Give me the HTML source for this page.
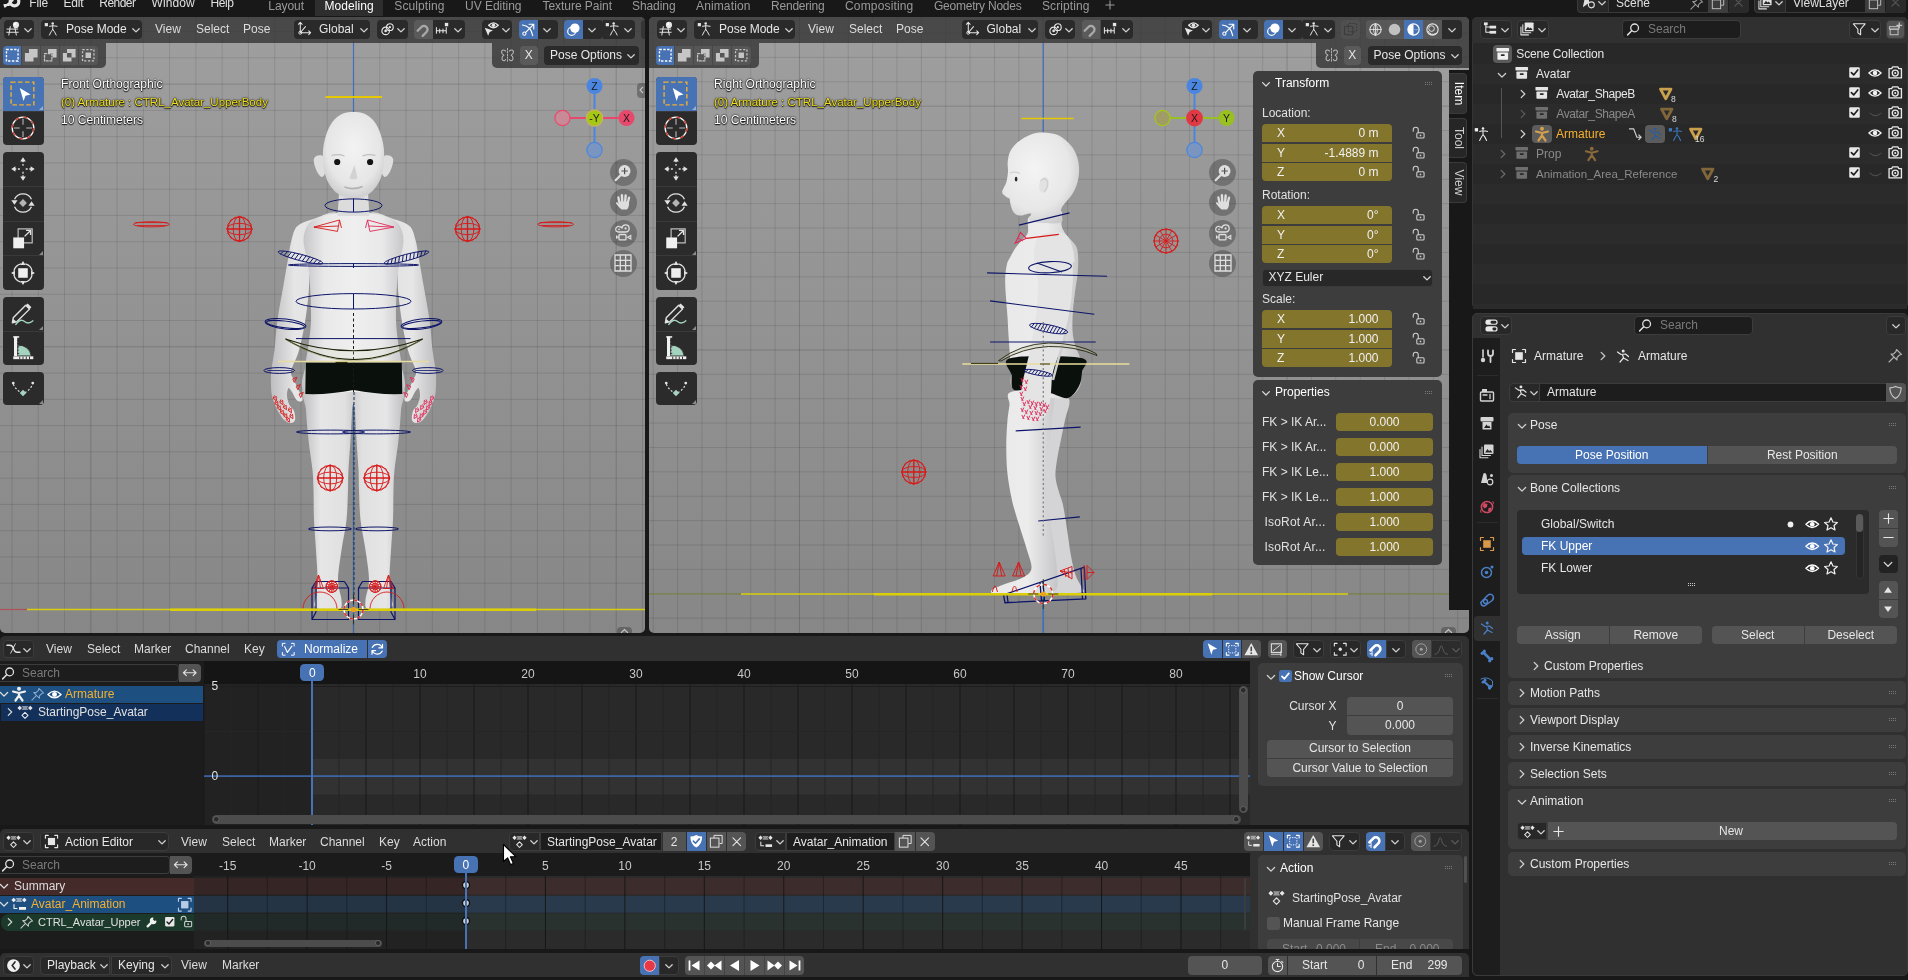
<!DOCTYPE html>
<html><head><meta charset="utf-8"><title>Blender</title>
<style>
html,body{margin:0;padding:0;background:#181818;}
body{width:1908px;height:980px;overflow:hidden;position:relative;font-family:'Liberation Sans',sans-serif;font-size:12px;color:#e6e6e6;}
#root{position:absolute;left:0;top:0;width:1908px;height:980px;overflow:hidden;background:#181818;filter:brightness(1);}
#root div,#root svg{position:absolute;box-sizing:border-box;}
#root svg{overflow:visible;}
#root svg text{font-family:'Liberation Sans',sans-serif;}
</style></head><body><div id="root">
<div style="left:0px;top:0px;width:1908px;height:16px;background:#181818;"></div>
<svg style="left:2px;top:-8px;" width="22" height="18" viewBox="0 0 22 18"><circle cx="12.5" cy="9.5" r="4.3" fill="none" stroke="#e6e6e6" stroke-width="3.2"/><path d="M3 14.5 L10.5 8.5 M2.5 13 H7" stroke="#e6e6e6" stroke-width="2.2" fill="none" stroke-linecap="round"/></svg>
<div style="left:29.3px;top:-5px;height:16px;line-height:16px;font-size:12px;color:#e0e0e0;white-space:nowrap;letter-spacing:-0.16px;">File</div>
<div style="left:63.4px;top:-5px;height:16px;line-height:16px;font-size:12px;color:#e0e0e0;white-space:nowrap;letter-spacing:-0.19px;">Edit</div>
<div style="left:99.3px;top:-5px;height:16px;line-height:16px;font-size:12px;color:#e0e0e0;white-space:nowrap;letter-spacing:-0.53px;">Render</div>
<div style="left:151.5px;top:-5px;height:16px;line-height:16px;font-size:12px;color:#e0e0e0;white-space:nowrap;letter-spacing:0.09px;">Window</div>
<div style="left:210.4px;top:-5px;height:16px;line-height:16px;font-size:12px;color:#e0e0e0;white-space:nowrap;letter-spacing:-0.4px;">Help</div>
<div style="left:315px;top:-4px;width:68px;height:20px;background:#2e2e2e;border-radius:4px 4px 0 0;"></div>
<div style="left:268.3px;top:-2.5px;height:16px;line-height:16px;font-size:12px;color:#9a9a9a;white-space:nowrap;letter-spacing:-0.06px;">Layout</div>
<div style="left:324.4px;top:-2.5px;height:16px;line-height:16px;font-size:12px;color:#ffffff;white-space:nowrap;letter-spacing:0.09px;">Modeling</div>
<div style="left:394.3px;top:-2.5px;height:16px;line-height:16px;font-size:12px;color:#9a9a9a;white-space:nowrap;letter-spacing:0.09px;">Sculpting</div>
<div style="left:465px;top:-2.5px;height:16px;line-height:16px;font-size:12px;color:#9a9a9a;white-space:nowrap;letter-spacing:-0.02px;">UV Editing</div>
<div style="left:542.5px;top:-2.5px;height:16px;line-height:16px;font-size:12px;color:#9a9a9a;white-space:nowrap;letter-spacing:-0.04px;">Texture Paint</div>
<div style="left:632px;top:-2.5px;height:16px;line-height:16px;font-size:12px;color:#9a9a9a;white-space:nowrap;letter-spacing:-0.08px;">Shading</div>
<div style="left:696px;top:-2.5px;height:16px;line-height:16px;font-size:12px;color:#9a9a9a;white-space:nowrap;letter-spacing:0.13px;">Animation</div>
<div style="left:771px;top:-2.5px;height:16px;line-height:16px;font-size:12px;color:#9a9a9a;white-space:nowrap;letter-spacing:-0.21px;">Rendering</div>
<div style="left:845px;top:-2.5px;height:16px;line-height:16px;font-size:12px;color:#9a9a9a;white-space:nowrap;letter-spacing:0.16px;">Compositing</div>
<div style="left:934px;top:-2.5px;height:16px;line-height:16px;font-size:12px;color:#9a9a9a;white-space:nowrap;letter-spacing:-0.23px;">Geometry Nodes</div>
<div style="left:1042px;top:-2.5px;height:16px;line-height:16px;font-size:12px;color:#9a9a9a;white-space:nowrap;letter-spacing:0.09px;">Scripting</div>
<svg style="left:1105px;top:0px;" width="10" height="10" viewBox="0 0 10 10"><path d="M5 0.5 V9.5 M0.5 5 H9.5" stroke="#9a9a9a" stroke-width="1.1" fill="none"/></svg>
<div style="left:1577px;top:-6px;width:172px;height:18.5px;background:#1d1d1d;border-radius:4px;border:1px solid #3a3a3a;"></div>
<div style="left:1577px;top:-6px;width:31.5px;height:18.5px;background:#282828;border-radius:4px 0 0 4px;border:1px solid #3a3a3a;"></div>
<svg style="left:1581px;top:-5px;" width="15" height="15" viewBox="0 0 16 16"><path d="M2 13 L4 3.5 Q6 1 8 4 L9 8 Z" fill="#e0e0e0" /><circle cx="11" cy="10.5" r="3.2" fill="none" stroke="#e0e0e0" stroke-width="1.2"/></svg>
<svg style="left:1597px;top:-2px;" width="10" height="10" viewBox="0 0 10 10"><path d="M1.8 3.7 L5 6.9 L8.2 3.7" fill="none" stroke="#d0d0d0" stroke-width="1.3" stroke-linecap="round" stroke-linejoin="round"/></svg>
<div style="left:1616px;top:-5.5px;height:16px;line-height:16px;font-size:12px;color:#e0e0e0;white-space:nowrap;">Scene</div>
<svg style="left:1689px;top:-4px;" width="15" height="15" viewBox="0 0 16 16"><path d="M9.5 1.5 L14.5 6.5 L12.5 7 L10 9.5 L10 12 L4 6 L6.5 6 L9 3.5 Z M7 9 L2 14" fill="none" stroke="#9a9a9a" stroke-width="1.1" stroke-linecap="round" stroke-linejoin="round" /></svg>
<div style="left:1708px;top:-6px;width:20px;height:18.5px;background:#3d3d3d;"></div>
<svg style="left:1711px;top:-4.5px;" width="14" height="14" viewBox="0 0 16 16"><path d="M5.5 4 V1.5 H14.5 V10.5 H12" fill="none" stroke="#c0c0c0" stroke-width="1.1" stroke-linecap="round" stroke-linejoin="round" /><rect x="1.5" y="4.5" width="9.5" height="10" rx="0" fill="none" stroke="#c0c0c0" stroke-width="1.1" /></svg>
<div style="left:1729px;top:-6px;width:20px;height:18.5px;background:#2a2a2a;border-radius:0 4px 4px 0;"></div>
<svg style="left:1732px;top:-4px;" width="13" height="13" viewBox="0 0 16 16"><path d="M3.5 3.5 L12.5 12.5 M12.5 3.5 L3.5 12.5" fill="none" stroke="#555555" stroke-width="1.4" stroke-linecap="round" stroke-linejoin="round" /></svg>
<div style="left:1754px;top:-6px;width:152px;height:18.5px;background:#1d1d1d;border-radius:4px;border:1px solid #3a3a3a;"></div>
<div style="left:1754px;top:-6px;width:31.5px;height:18.5px;background:#282828;border-radius:4px 0 0 4px;border:1px solid #3a3a3a;"></div>
<svg style="left:1758px;top:-5px;" width="15" height="15" viewBox="0 0 16 16"><rect x="5" y="1.5" width="9.5" height="9.5" rx="1" fill="#e0e0e0" /><path d="M3 4 V12.5 H11.5 M1 6.5 V14.8 H9" fill="none" stroke="#e0e0e0" stroke-width="1.1" stroke-linecap="round" stroke-linejoin="round" /><path d="M6 9.5 L8.5 6 L10 8 L11.5 7 L13.5 9.5 Z" fill="#282828" /></svg>
<svg style="left:1774px;top:-2px;" width="10" height="10" viewBox="0 0 10 10"><path d="M1.8 3.7 L5 6.9 L8.2 3.7" fill="none" stroke="#d0d0d0" stroke-width="1.3" stroke-linecap="round" stroke-linejoin="round"/></svg>
<div style="left:1793px;top:-5.5px;height:16px;line-height:16px;font-size:12px;color:#e0e0e0;white-space:nowrap;">ViewLayer</div>
<div style="left:1865px;top:-6px;width:20px;height:18.5px;background:#3d3d3d;"></div>
<svg style="left:1868px;top:-4.5px;" width="14" height="14" viewBox="0 0 16 16"><path d="M5.5 4 V1.5 H14.5 V10.5 H12" fill="none" stroke="#c0c0c0" stroke-width="1.1" stroke-linecap="round" stroke-linejoin="round" /><rect x="1.5" y="4.5" width="9.5" height="10" rx="0" fill="none" stroke="#c0c0c0" stroke-width="1.1" /></svg>
<div style="left:1886px;top:-6px;width:20px;height:18.5px;background:#2a2a2a;border-radius:0 4px 4px 0;"></div>
<svg style="left:1889px;top:-4px;" width="13" height="13" viewBox="0 0 16 16"><path d="M3.5 3.5 L12.5 12.5 M12.5 3.5 L3.5 12.5" fill="none" stroke="#555555" stroke-width="1.4" stroke-linecap="round" stroke-linejoin="round" /></svg>
<div style="left:0;top:16.6px;width:645px;height:616.4px;background:linear-gradient(#9f9f9f,#878787);border-radius:5px;overflow:hidden;">
</div>
<svg style="left:0px;top:17px;" width="645" height="616" viewBox="0 0 645 616"><rect x="11.49" y="0" width="1" height="616" fill="rgba(0,0,0,0.105)"/><rect x="37.76" y="0" width="1" height="616" fill="rgba(0,0,0,0.105)"/><rect x="64.03" y="0" width="1" height="616" fill="rgba(0,0,0,0.105)"/><rect x="90.3" y="0" width="1" height="616" fill="rgba(0,0,0,0.155)"/><rect x="116.57" y="0" width="1" height="616" fill="rgba(0,0,0,0.105)"/><rect x="142.84" y="0" width="1" height="616" fill="rgba(0,0,0,0.105)"/><rect x="169.11" y="0" width="1" height="616" fill="rgba(0,0,0,0.105)"/><rect x="195.38" y="0" width="1" height="616" fill="rgba(0,0,0,0.105)"/><rect x="221.65" y="0" width="1" height="616" fill="rgba(0,0,0,0.105)"/><rect x="247.92" y="0" width="1" height="616" fill="rgba(0,0,0,0.105)"/><rect x="274.19" y="0" width="1" height="616" fill="rgba(0,0,0,0.105)"/><rect x="300.46" y="0" width="1" height="616" fill="rgba(0,0,0,0.105)"/><rect x="326.73" y="0" width="1" height="616" fill="rgba(0,0,0,0.105)"/><rect x="353" y="0" width="1" height="616" fill="rgba(0,0,0,0.155)"/><rect x="379.27" y="0" width="1" height="616" fill="rgba(0,0,0,0.105)"/><rect x="405.54" y="0" width="1" height="616" fill="rgba(0,0,0,0.105)"/><rect x="431.81" y="0" width="1" height="616" fill="rgba(0,0,0,0.105)"/><rect x="458.08" y="0" width="1" height="616" fill="rgba(0,0,0,0.105)"/><rect x="484.35" y="0" width="1" height="616" fill="rgba(0,0,0,0.105)"/><rect x="510.62" y="0" width="1" height="616" fill="rgba(0,0,0,0.105)"/><rect x="536.89" y="0" width="1" height="616" fill="rgba(0,0,0,0.105)"/><rect x="563.16" y="0" width="1" height="616" fill="rgba(0,0,0,0.105)"/><rect x="589.43" y="0" width="1" height="616" fill="rgba(0,0,0,0.105)"/><rect x="615.7" y="0" width="1" height="616" fill="rgba(0,0,0,0.155)"/><rect x="641.97" y="0" width="1" height="616" fill="rgba(0,0,0,0.105)"/><rect x="0" y="14.06" width="645" height="1" fill="rgba(0,0,0,0.105)"/><rect x="0" y="40.33" width="645" height="1" fill="rgba(0,0,0,0.105)"/><rect x="0" y="66.6" width="645" height="1" fill="rgba(0,0,0,0.155)"/><rect x="0" y="92.87" width="645" height="1" fill="rgba(0,0,0,0.105)"/><rect x="0" y="119.14" width="645" height="1" fill="rgba(0,0,0,0.105)"/><rect x="0" y="145.41" width="645" height="1" fill="rgba(0,0,0,0.105)"/><rect x="0" y="171.68" width="645" height="1" fill="rgba(0,0,0,0.105)"/><rect x="0" y="197.95" width="645" height="1" fill="rgba(0,0,0,0.105)"/><rect x="0" y="224.22" width="645" height="1" fill="rgba(0,0,0,0.105)"/><rect x="0" y="250.49" width="645" height="1" fill="rgba(0,0,0,0.105)"/><rect x="0" y="276.76" width="645" height="1" fill="rgba(0,0,0,0.105)"/><rect x="0" y="303.03" width="645" height="1" fill="rgba(0,0,0,0.105)"/><rect x="0" y="329.3" width="645" height="1" fill="rgba(0,0,0,0.155)"/><rect x="0" y="355.57" width="645" height="1" fill="rgba(0,0,0,0.105)"/><rect x="0" y="381.84" width="645" height="1" fill="rgba(0,0,0,0.105)"/><rect x="0" y="408.11" width="645" height="1" fill="rgba(0,0,0,0.105)"/><rect x="0" y="434.38" width="645" height="1" fill="rgba(0,0,0,0.105)"/><rect x="0" y="460.65" width="645" height="1" fill="rgba(0,0,0,0.105)"/><rect x="0" y="486.92" width="645" height="1" fill="rgba(0,0,0,0.105)"/><rect x="0" y="513.19" width="645" height="1" fill="rgba(0,0,0,0.105)"/><rect x="0" y="539.46" width="645" height="1" fill="rgba(0,0,0,0.105)"/><rect x="0" y="565.73" width="645" height="1" fill="rgba(0,0,0,0.105)"/><rect x="0" y="592" width="645" height="1" fill="rgba(0,0,0,0.155)"/></svg>
<svg style="left:0px;top:0px;overflow:hidden;" width="645" height="633" viewBox="0 0 645 633"><defs><linearGradient id="gbody" x1="0" x2="1" y1="0" y2="0"><stop offset="0" stop-color="#c4c4c6"/><stop offset="0.22" stop-color="#e9e9ea"/><stop offset="0.5" stop-color="#efefef"/><stop offset="0.78" stop-color="#e9e9ea"/><stop offset="1" stop-color="#c4c4c6"/></linearGradient><linearGradient id="glimbL" x1="0" x2="1" y1="0" y2="0"><stop offset="0" stop-color="#bebec0"/><stop offset="0.35" stop-color="#e6e6e7"/><stop offset="0.8" stop-color="#e0e0e1"/><stop offset="1" stop-color="#c8c8ca"/></linearGradient><linearGradient id="glimbR" x1="1" x2="0" y1="0" y2="0"><stop offset="0" stop-color="#bebec0"/><stop offset="0.35" stop-color="#e6e6e7"/><stop offset="0.8" stop-color="#e0e0e1"/><stop offset="1" stop-color="#c8c8ca"/></linearGradient><radialGradient id="ghead" cx="0.5" cy="0.42" r="0.62"><stop offset="0" stop-color="#f3f3f3"/><stop offset="0.7" stop-color="#e6e6e7"/><stop offset="1" stop-color="#c9c9cb"/></radialGradient></defs><path d="M353.5 43 V112" stroke="#3c70c0" stroke-width="1.2"/><path d="M353.5 392 V633" stroke="#3c64a0" stroke-width="1.3"/><path d="M369.5 214 C372.83 208.83 386.83 217 393.5 219 C400.17 221 405.83 222.5 409.5 226 C413.17 229.5 413.83 234 415.5 240 C417.17 246 418.17 254.5 419.5 262 C420.83 269.5 421.83 275.33 423.5 285 C425.17 294.67 428 309.17 429.5 320 C431 330.83 431.45 341.5 432.5 350 C433.55 358.5 435.22 365.17 435.8 371 C436.38 376.83 436.1 381 436 385 C435.9 389 435.87 391.72 435.2 395 C434.53 398.28 433.2 401.7 432 404.7 C430.8 407.7 429.67 410.32 428 413 C426.33 415.68 424 419.13 422 420.8 C420 422.47 417.67 423.13 416 423 C414.33 422.87 412.5 422 412 420 C411.5 418 412.08 413.5 413 411 C413.92 408.5 416.33 407.5 417.5 405 C418.67 402.5 419.83 398.83 420 396 C420.17 393.17 419.33 388.67 418.5 388 C417.67 387.33 416.33 390 415 392 C413.67 394 412 398.42 410.5 400 C409 401.58 407 401.83 406 401.5 C405 401.17 404.08 399.92 404.5 398 C404.92 396.08 407.08 393 408.5 390 C409.92 387 411.75 383.17 413 380 C414.25 376.83 416.75 375.67 416 371 C415.25 366.33 410.75 359.67 408.5 352 C406.25 344.33 404.17 334.5 402.5 325 C400.83 315.5 399.42 304.5 398.5 295 C397.58 285.5 397.83 273.5 397 268 C396.17 262.5 397.42 265 393.5 262 C389.58 259 377.5 258 373.5 250 C369.5 242 366.17 219.17 369.5 214 Z" fill="url(#glimbR)"/><path d="M337.5 214 C334.17 208.83 320.17 217 313.5 219 C306.83 221 301.17 222.5 297.5 226 C293.83 229.5 293.17 234 291.5 240 C289.83 246 288.83 254.5 287.5 262 C286.17 269.5 285.17 275.33 283.5 285 C281.83 294.67 279 309.17 277.5 320 C276 330.83 275.55 341.5 274.5 350 C273.45 358.5 271.78 365.17 271.2 371 C270.62 376.83 270.9 381 271 385 C271.1 389 271.13 391.72 271.8 395 C272.47 398.28 273.8 401.7 275 404.7 C276.2 407.7 277.33 410.32 279 413 C280.67 415.68 283 419.13 285 420.8 C287 422.47 289.33 423.13 291 423 C292.67 422.87 294.5 422 295 420 C295.5 418 294.92 413.5 294 411 C293.08 408.5 290.67 407.5 289.5 405 C288.33 402.5 287.17 398.83 287 396 C286.83 393.17 287.67 388.67 288.5 388 C289.33 387.33 290.67 390 292 392 C293.33 394 295 398.42 296.5 400 C298 401.58 300 401.83 301 401.5 C302 401.17 302.92 399.92 302.5 398 C302.08 396.08 299.92 393 298.5 390 C297.08 387 295.25 383.17 294 380 C292.75 376.83 290.25 375.67 291 371 C291.75 366.33 296.25 359.67 298.5 352 C300.75 344.33 302.83 334.5 304.5 325 C306.17 315.5 307.58 304.5 308.5 295 C309.42 285.5 309.17 273.5 310 268 C310.83 262.5 309.58 265 313.5 262 C317.42 259 329.5 258 333.5 250 C337.5 242 340.83 219.17 337.5 214 Z" fill="url(#glimbL)"/><path d="M354.5 388 C362.25 384 393.75 382.33 401.5 386 C409.25 389.67 401.5 401 401 410 C400.5 419 399.58 430 398.5 440 C397.42 450 395.33 461.67 394.5 470 C393.67 478.33 393.75 481.67 393.5 490 C393.25 498.33 393.42 510 393 520 C392.58 530 391.58 540.33 391 550 C390.42 559.67 389.58 570.5 389.5 578 C389.42 585.5 390 590.33 390.5 595 C391 599.67 393.67 603.5 392.5 606 C391.33 608.5 387.67 609.5 383.5 610 C379.33 610.5 370.5 610.67 367.5 609 C364.5 607.33 365.25 604.83 365.5 600 C365.75 595.17 369 588.33 369 580 C369 571.67 366.92 560 365.5 550 C364.08 540 361.58 530 360.5 520 C359.42 510 359.33 498.33 359 490 C358.67 481.67 358.92 478.33 358.5 470 C358.08 461.67 357.08 450 356.5 440 C355.92 430 355.33 418.67 355 410 C354.67 401.33 346.75 392 354.5 388 Z" fill="url(#glimbR)"/><path d="M352.5 388 C344.75 384 313.25 382.33 305.5 386 C297.75 389.67 305.5 401 306 410 C306.5 419 307.42 430 308.5 440 C309.58 450 311.67 461.67 312.5 470 C313.33 478.33 313.25 481.67 313.5 490 C313.75 498.33 313.58 510 314 520 C314.42 530 315.42 540.33 316 550 C316.58 559.67 317.42 570.5 317.5 578 C317.58 585.5 317 590.33 316.5 595 C316 599.67 313.33 603.5 314.5 606 C315.67 608.5 319.33 609.5 323.5 610 C327.67 610.5 336.5 610.67 339.5 609 C342.5 607.33 341.75 604.83 341.5 600 C341.25 595.17 338 588.33 338 580 C338 571.67 340.08 560 341.5 550 C342.92 540 345.42 530 346.5 520 C347.58 510 347.67 498.33 348 490 C348.33 481.67 348.08 478.33 348.5 470 C348.92 461.67 349.92 450 350.5 440 C351.08 430 351.67 418.67 352 410 C352.33 401.33 360.25 392 352.5 388 Z" fill="url(#glimbL)"/><path d="M353.5 212 C358.83 212 364.17 212.17 369.5 213 C374.83 213.83 380.67 215.17 385.5 217 C390.33 218.83 395.5 220.17 398.5 224 C401.5 227.83 403.33 233.67 403.5 240 C403.67 246.33 400.58 254.5 399.5 262 C398.42 269.5 397.58 275.33 397 285 C396.42 294.67 395.75 310 396 320 C396.25 330 397.58 337.5 398.5 345 C399.42 352.5 401 357.17 401.5 365 C402 372.83 409.5 387.5 401.5 392 C393.5 396.5 369.5 392 353.5 392 C337.5 392 313.5 396.5 305.5 392 C297.5 387.5 305 372.83 305.5 365 C306 357.17 307.58 352.5 308.5 345 C309.42 337.5 310.75 330 311 320 C311.25 310 310.58 294.67 310 285 C309.42 275.33 308.58 269.5 307.5 262 C306.42 254.5 303.33 246.33 303.5 240 C303.67 233.67 305.5 227.83 308.5 224 C311.5 220.17 316.67 218.83 321.5 217 C326.33 215.17 332.17 213.83 337.5 213 C342.83 212.17 348.17 212 353.5 212 Z" fill="url(#gbody)"/><path d="M339.5 186 L367.5 186 L369.5 216 L337.5 216 Z" fill="#dcdcdd"/><path d="M383.5 157 C384.75 154.42 387.42 155.25 389 155.5 C390.58 155.75 392.42 156.92 393 158.5 C393.58 160.08 393.08 162.67 392.5 165 C391.92 167.33 390.75 170.5 389.5 172.5 C388.25 174.5 386.33 177.25 385 177 C383.67 176.75 381.75 174.33 381.5 171 C381.25 167.67 382.25 159.58 383.5 157 Z" fill="#dededf"/><path d="M323.5 157 C322.25 154.42 319.58 155.25 318 155.5 C316.42 155.75 314.58 156.92 314 158.5 C313.42 160.08 313.92 162.67 314.5 165 C315.08 167.33 316.25 170.5 317.5 172.5 C318.75 174.5 320.67 177.25 322 177 C323.33 176.75 325.25 174.33 325.5 171 C325.75 167.67 324.75 159.58 323.5 157 Z" fill="#dededf"/><path d="M353.5 112 C357 112 360.75 112.17 364 113.5 C367.25 114.83 370.42 117.08 373 120 C375.58 122.92 377.75 126.67 379.5 131 C381.25 135.33 382.75 141.17 383.5 146 C384.25 150.83 384.17 155.67 384 160 C383.83 164.33 383.42 168.17 382.5 172 C381.58 175.83 380.33 179.67 378.5 183 C376.67 186.33 374.17 189.67 371.5 192 C368.83 194.33 365.5 196 362.5 197 C359.5 198 356.5 198 353.5 198 C350.5 198 347.5 198 344.5 197 C341.5 196 338.17 194.33 335.5 192 C332.83 189.67 330.33 186.33 328.5 183 C326.67 179.67 325.42 175.83 324.5 172 C323.58 168.17 323.17 164.33 323 160 C322.83 155.67 322.75 150.83 323.5 146 C324.25 141.17 325.75 135.33 327.5 131 C329.25 126.67 331.42 122.92 334 120 C336.58 117.08 339.75 114.83 343 113.5 C346.25 112.17 350 112 353.5 112 Z" fill="url(#ghead)"/><circle cx="337.2" cy="162" r="3.1" fill="#141414"/><circle cx="370.1" cy="162" r="3.1" fill="#141414"/><path d="M331.5 155.5 Q338.5 153.5 344.5 156 M362.5 156 Q368.5 153.5 375.5 155.5" stroke="#c0c0c2" stroke-width="1.3" fill="none"/><path d="M354.5 165 L349.5 178 Q353.5 181 357.5 178 Z" fill="#d2d2d4"/><path d="M344.5 187 Q353.5 190.5 362.5 186.5" stroke="#b4b0b0" stroke-width="1.6" fill="none"/><path d="M305.8 362.5 H401.8 L402.3 394 Q378.5 395 353.5 390 Q328.5 395 305.3 394 Z" fill="#0a100c"/><path d="M325.5 97 H382" stroke="#e6c800" stroke-width="1.8"/><g fill="none" stroke="#0c1468" stroke-width="1"><ellipse cx="353.5" cy="205.5" rx="28.5" ry="6.6"/><path d="M353.5 198.5 V212"/><ellipse cx="353.5" cy="265" rx="65" ry="1.4"/><path d="M353.5 263 V268"/><ellipse cx="353.5" cy="301.3" rx="57.5" ry="7.7"/><path d="M353.5 293.5 V309"/><path d="M296 338.6 H410.5"/><ellipse cx="421.5" cy="324" rx="20.5" ry="5" transform="rotate(-7 421.5 324)"/><ellipse cx="421.5" cy="324.5" rx="19" ry="3.4" transform="rotate(-7 421.5 324)"/><ellipse cx="427.8" cy="370.5" rx="15.4" ry="2.9"/><path d="M415.5 370.5 H439.5" stroke-width="0.8"/><ellipse cx="376.5" cy="432" rx="34" ry="1.9"/><ellipse cx="377" cy="528.9" rx="21.4" ry="1.9"/><path d="M358.5 588 H395 V619.5 H358.5 Z M362.5 581.5 H391 V612 M358.5 588 L362.5 581.5 M395 588 L391 581.5 M395 619.5 L391 612" stroke-width="1.2"/><ellipse cx="285.5" cy="324" rx="20.5" ry="5" transform="rotate(7 285.5 324)"/><ellipse cx="285.5" cy="324.5" rx="19" ry="3.4" transform="rotate(7 285.5 324)"/><ellipse cx="279.2" cy="370.5" rx="15.4" ry="2.9"/><path d="M291.5 370.5 H267.5" stroke-width="0.8"/><ellipse cx="330.5" cy="432" rx="34" ry="1.9"/><ellipse cx="330" cy="528.9" rx="21.4" ry="1.9"/><path d="M348.5 588 H312 V619.5 H348.5 Z M344.5 581.5 H316 V612 M348.5 588 L344.5 581.5 M312 588 L316 581.5 M312 619.5 L316 612" stroke-width="1.2"/></g><g transform="rotate(-14.5 406.5 257.5)" fill="none" stroke="#0c1468" stroke-width="0.9"><ellipse cx="406.5" cy="257.5" rx="23" ry="3.2"/><path d="M386.13 259.27 L388.53 255.73"/><path d="M389.97 259.89 L392.37 255.11"/><path d="M393.8 260.27 L396.2 254.73"/><path d="M397.63 260.52 L400.03 254.48"/><path d="M401.47 260.66 L403.87 254.34"/><path d="M405.3 260.7 L407.7 254.3"/><path d="M409.13 260.66 L411.53 254.34"/><path d="M412.97 260.52 L415.37 254.48"/><path d="M416.8 260.27 L419.2 254.73"/><path d="M420.63 259.89 L423.03 255.11"/><path d="M424.47 259.27 L426.87 255.73"/></g><g transform="rotate(14.5 300.5 257.5)" fill="none" stroke="#0c1468" stroke-width="0.9"><ellipse cx="300.5" cy="257.5" rx="23" ry="3.2"/><path d="M280.13 259.27 L282.53 255.73"/><path d="M283.97 259.89 L286.37 255.11"/><path d="M287.8 260.27 L290.2 254.73"/><path d="M291.63 260.52 L294.03 254.48"/><path d="M295.47 260.66 L297.87 254.34"/><path d="M299.3 260.7 L301.7 254.3"/><path d="M303.13 260.66 L305.53 254.34"/><path d="M306.97 260.52 L309.37 254.48"/><path d="M310.8 260.27 L313.2 254.73"/><path d="M314.63 259.89 L317.03 255.11"/><path d="M318.47 259.27 L320.87 255.73"/></g><path d="M353.5 313 V392" stroke="#1a1a1a" stroke-width="1" stroke-dasharray="3 2.5"/><path d="M354 392 V600" stroke="#22304a" stroke-width="1" stroke-dasharray="3 2"/><path d="M285.5 339 Q353.5 380 422.7 339 Q353.5 362.5 285.5 339 Z" fill="#d8d8b8" fill-opacity="0.18" stroke="#1c2208" stroke-width="1.1"/><path d="M287.5 340.5 Q353.5 381 420.5 340.5" fill="none" stroke="#8a8a50" stroke-width="0.6"/><path d="M278 361.5 H429" stroke="#e8dc9c" stroke-width="1.4"/><path d="M335.5 362.5 H347.5" stroke="#30300c" stroke-width="1.2"/><g fill="none" stroke="#d81818" stroke-width="0.9"><polygon points="313.9,227.1 339.5,220 337.5,231.4"/><path d="M313.9,227.1 L338.5 226 M339.5 220 L341.5 228"/></g><g fill="none" stroke="#e02858" stroke-width="0.9"><polygon points="393.9,227.1 367.5,220 369.9,231.4"/><path d="M393.9,227.1 L368.5 226 M367.5 220 L365.5 228"/></g><g fill="none" stroke="#d81818" stroke-width="0.9"><ellipse cx="555.7" cy="224.3" rx="18" ry="2.6"/><path d="M539.7 222.6 H571.7 M541.7 225.6 H569.7"/><path d="M370 609 A17 17 0 0 1 404 609"/><path d="M383.5 588.5 L388.5 575 L393.5 588.5 Z M386.5 588.5 L388.5 575 M390.5 588.5 L388.5 575" stroke-width="0.9"/><ellipse cx="151.3" cy="224.3" rx="18" ry="2.6"/><path d="M135.3 222.6 H167.3 M137.3 225.6 H165.3"/><path d="M303 609 A17 17 0 0 1 337 609"/><path d="M323.5 588.5 L318.5 575 L313.5 588.5 Z M320.5 588.5 L318.5 575 M316.5 588.5 L318.5 575" stroke-width="0.9"/></g><g fill="none" stroke="#d81818" stroke-width="0.9"><polygon points="480.1,229 476.41,237.91 467.5,241.6 458.59,237.91 454.9,229 458.59,220.09 467.5,216.4 476.41,220.09"/><polygon points="479.14,233.82 472.32,240.64 462.68,240.64 455.86,233.82 455.86,224.18 462.68,217.36 472.32,217.36 479.14,224.18"/><path d="M454.9 229 H480.1 M467.5 216.4 V241.6" stroke-width="1.3"/><ellipse cx="467.5" cy="229" rx="6.3" ry="12.6"/><ellipse cx="467.5" cy="229" rx="12.6" ry="5.67"/></g><g fill="none" stroke="#d81818" stroke-width="0.9"><polygon points="389.8,478 385.99,487.19 376.8,491 367.61,487.19 363.8,478 367.61,468.81 376.8,465 385.99,468.81"/><polygon points="388.81,482.97 381.77,490.01 371.83,490.01 364.79,482.97 364.79,473.03 371.83,465.99 381.77,465.99 388.81,473.03"/><path d="M363.8 478 H389.8 M376.8 465 V491" stroke-width="1.3"/><ellipse cx="376.8" cy="478" rx="6.5" ry="13"/><ellipse cx="376.8" cy="478" rx="13" ry="5.85"/></g><g fill="none" stroke="#d81818" stroke-width="0.9"><polygon points="381.2,586.6 379.44,590.84 375.2,592.6 370.96,590.84 369.2,586.6 370.96,582.36 375.2,580.6 379.44,582.36"/><polygon points="380.74,588.9 377.5,592.14 372.9,592.14 369.66,588.9 369.66,584.3 372.9,581.06 377.5,581.06 380.74,584.3"/><path d="M369.2 586.6 L381.2 586.6"/><path d="M370 583.6 L380.4 589.6"/><path d="M372.2 581.4 L378.2 591.8"/><path d="M375.2 580.6 L375.2 592.6"/><path d="M378.2 581.4 L372.2 591.8"/><path d="M380.4 583.6 L370 589.6"/><circle cx="375.2" cy="586.6" r="3.3"/></g><g fill="none" stroke="#d81818" stroke-width="0.9"><polygon points="252.1,229 248.41,237.91 239.5,241.6 230.59,237.91 226.9,229 230.59,220.09 239.5,216.4 248.41,220.09"/><polygon points="251.14,233.82 244.32,240.64 234.68,240.64 227.86,233.82 227.86,224.18 234.68,217.36 244.32,217.36 251.14,224.18"/><path d="M226.9 229 H252.1 M239.5 216.4 V241.6" stroke-width="1.3"/><ellipse cx="239.5" cy="229" rx="6.3" ry="12.6"/><ellipse cx="239.5" cy="229" rx="12.6" ry="5.67"/></g><g fill="none" stroke="#d81818" stroke-width="0.9"><polygon points="343.2,478 339.39,487.19 330.2,491 321.01,487.19 317.2,478 321.01,468.81 330.2,465 339.39,468.81"/><polygon points="342.21,482.97 335.17,490.01 325.23,490.01 318.19,482.97 318.19,473.03 325.23,465.99 335.17,465.99 342.21,473.03"/><path d="M317.2 478 H343.2 M330.2 465 V491" stroke-width="1.3"/><ellipse cx="330.2" cy="478" rx="6.5" ry="13"/><ellipse cx="330.2" cy="478" rx="13" ry="5.85"/></g><g fill="none" stroke="#d81818" stroke-width="0.9"><polygon points="337.8,586.6 336.04,590.84 331.8,592.6 327.56,590.84 325.8,586.6 327.56,582.36 331.8,580.6 336.04,582.36"/><polygon points="337.34,588.9 334.1,592.14 329.5,592.14 326.26,588.9 326.26,584.3 329.5,581.06 334.1,581.06 337.34,584.3"/><path d="M325.8 586.6 L337.8 586.6"/><path d="M326.6 583.6 L337 589.6"/><path d="M328.8 581.4 L334.8 591.8"/><path d="M331.8 580.6 L331.8 592.6"/><path d="M334.8 581.4 L328.8 591.8"/><path d="M337 583.6 L326.6 589.6"/><circle cx="331.8" cy="586.6" r="3.3"/></g><g fill="none" stroke="#e02858" stroke-width="0.9"><path d="M410.1 377.3 l4.2 1.6 l-1.6 3.6 Z"/><path d="M406.6 384.6 l4.2 1.6 l-1.6 3.6 Z"/><path d="M403.7 392.4 l4.2 1.6 l-1.6 3.6 Z"/><path d="M430.9 396.2 l2.6 2.6 l-3 1.8 Z M432.5 395.4 l1.4 3"/><path d="M429.4 401.2 l2.6 2.6 l-3 1.8 Z M431 400.4 l1.4 3"/><path d="M426.9 405.7 l2.6 2.6 l-3 1.8 Z M428.5 404.9 l1.4 3"/><path d="M423.9 410.2 l2.6 2.6 l-3 1.8 Z M425.5 409.4 l1.4 3"/><path d="M420.4 413.7 l2.6 2.6 l-3 1.8 Z M422 412.9 l1.4 3"/><path d="M417.9 417.7 l2.6 2.6 l-3 1.8 Z M419.5 416.9 l1.4 3"/><path d="M424.4 400.2 l2.6 2.6 l-3 1.8 Z M426 399.4 l1.4 3"/><path d="M420.9 405.2 l2.6 2.6 l-3 1.8 Z M422.5 404.4 l1.4 3"/><path d="M415.9 408.2 l2.6 2.6 l-3 1.8 Z M417.5 407.4 l1.4 3"/><path d="M414.4 414.2 l2.6 2.6 l-3 1.8 Z M416 413.4 l1.4 3"/></g><g fill="none" stroke="#d81818" stroke-width="0.9"><path d="M296.9 377.3 l-4.2 1.6 l1.6 3.6 Z"/><path d="M300.4 384.6 l-4.2 1.6 l1.6 3.6 Z"/><path d="M303.3 392.4 l-4.2 1.6 l1.6 3.6 Z"/><path d="M276.1 396.2 l-2.6 2.6 l3 1.8 Z M274.5 395.4 l-1.4 3"/><path d="M277.6 401.2 l-2.6 2.6 l3 1.8 Z M276 400.4 l-1.4 3"/><path d="M280.1 405.7 l-2.6 2.6 l3 1.8 Z M278.5 404.9 l-1.4 3"/><path d="M283.1 410.2 l-2.6 2.6 l3 1.8 Z M281.5 409.4 l-1.4 3"/><path d="M286.6 413.7 l-2.6 2.6 l3 1.8 Z M285 412.9 l-1.4 3"/><path d="M289.1 417.7 l-2.6 2.6 l3 1.8 Z M287.5 416.9 l-1.4 3"/><path d="M282.6 400.2 l-2.6 2.6 l3 1.8 Z M281 399.4 l-1.4 3"/><path d="M286.1 405.2 l-2.6 2.6 l3 1.8 Z M284.5 404.4 l-1.4 3"/><path d="M291.1 408.2 l-2.6 2.6 l3 1.8 Z M289.5 407.4 l-1.4 3"/><path d="M292.6 414.2 l-2.6 2.6 l3 1.8 Z M291 413.4 l-1.4 3"/></g><path d="M0 609.5 H27" stroke="#b05058" stroke-width="1.2"/><path d="M27 609.5 H645" stroke="#d8cc10" stroke-width="1.4"/><path d="M170 609.7 H536" stroke="#dccf08" stroke-width="2.6"/><circle cx="353.5" cy="609.5" r="9.5" fill="none" stroke="#ffffff" stroke-width="1.5"/><circle cx="353.5" cy="609.5" r="9.5" fill="none" stroke="#e03030" stroke-width="1.5" stroke-dasharray="3.7 3.75"/><path d="M338.5 609.5 H348.5 M358.5 609.5 H368.5 M353.5 594.5 V604.5 M353.5 614.5 V624.5" stroke="#26260c" stroke-width="0.8"/><circle cx="353.5" cy="609.5" r="2.6" fill="#f0a020"/></svg>
<div style="left:0px;top:16.6px;width:645px;height:26.4px;background:rgba(46,46,46,0.76);border-radius:5px 5px 0 0;"></div>
<div style="left:3.5px;top:19.5px;width:30.5px;height:19px;background:#2a2a2a;border-radius:4px;"></div>
<svg style="left:6px;top:21px;" width="15" height="15" viewBox="0 0 16 16"><path d="M1 8.6 H12.5 M0.8 12 H13 M4.6 6 L3 15 M9.4 6.5 L11 15" fill="none" stroke="#e6e6e6" stroke-width="1.05" stroke-linecap="round" stroke-linejoin="round" /><circle cx="10.6" cy="4.2" r="3.3" fill="#e6e6e6"/><circle cx="9.6" cy="3.2" r="1.2" fill="#ffffff"/></svg>
<svg style="left:22.5px;top:24.5px;" width="10" height="10" viewBox="0 0 10 10"><path d="M1.8 3.7 L5 6.9 L8.2 3.7" fill="none" stroke="#d0d0d0" stroke-width="1.3" stroke-linecap="round" stroke-linejoin="round"/></svg>
<div style="left:41px;top:19.5px;width:101px;height:19px;background:#2a2a2a;border-radius:4px;"></div>
<svg style="left:44px;top:21px;" width="15" height="15" viewBox="0 0 16 16"><rect x="0.8" y="2.2" width="3.4" height="3.4" rx="0" fill="#e6e6e6" /><circle cx="9.3" cy="2.6" r="1.35" fill="#e6e6e6"/><path d="M5.8 5.6 Q9.3 4.4 14 5.6 M9.3 4.6 V9 M9.3 9 Q7.5 11 5.8 15 M9.3 9 Q11.3 11 13 15" fill="none" stroke="#e6e6e6" stroke-width="1.05" stroke-linecap="round" stroke-linejoin="round" /></svg>
<div style="left:66px;top:21px;height:16px;line-height:16px;font-size:12px;color:#e6e6e6;white-space:nowrap;">Pose Mode</div>
<svg style="left:130.5px;top:24.5px;" width="10" height="10" viewBox="0 0 10 10"><path d="M1.8 3.7 L5 6.9 L8.2 3.7" fill="none" stroke="#d0d0d0" stroke-width="1.3" stroke-linecap="round" stroke-linejoin="round"/></svg>
<div style="left:155px;top:21px;height:16px;line-height:16px;font-size:12px;color:#dcdcdc;white-space:nowrap;">View</div>
<div style="left:196px;top:21px;height:16px;line-height:16px;font-size:12px;color:#dcdcdc;white-space:nowrap;">Select</div>
<div style="left:243px;top:21px;height:16px;line-height:16px;font-size:12px;color:#dcdcdc;white-space:nowrap;">Pose</div>
<div style="left:294px;top:19.5px;width:76px;height:19px;background:#2a2a2a;border-radius:4px;"></div>
<svg style="left:297px;top:21px;" width="15" height="15" viewBox="0 0 16 16"><path d="M3.5 1.5 V12.5 H14.5 M1.5 3.5 L3.5 1.5 L5.5 3.5 M12.5 10.5 L14.5 12.5 L12.5 14.5 M3.5 12.5 L9 6" fill="none" stroke="#e6e6e6" stroke-width="1.1" stroke-linecap="round" stroke-linejoin="round" /><circle cx="3.5" cy="12.5" r="1.6" fill="none" stroke="#e6e6e6" stroke-width="1"/></svg>
<div style="left:319px;top:21px;height:16px;line-height:16px;font-size:12px;color:#e6e6e6;white-space:nowrap;">Global</div>
<svg style="left:359px;top:24.5px;" width="10" height="10" viewBox="0 0 10 10"><path d="M1.8 3.7 L5 6.9 L8.2 3.7" fill="none" stroke="#d0d0d0" stroke-width="1.3" stroke-linecap="round" stroke-linejoin="round"/></svg>
<div style="left:377px;top:19.5px;width:30.5px;height:19px;background:#2a2a2a;border-radius:4px;"></div>
<svg style="left:380px;top:21.5px;" width="15" height="15" viewBox="0 0 16 16"><circle cx="6" cy="9.5" r="4" fill="none" stroke="#e6e6e6" stroke-width="1.2"/><circle cx="10.5" cy="5.5" r="3.6" fill="none" stroke="#e6e6e6" stroke-width="1.2"/><circle cx="6" cy="9.5" r="1.4" fill="#e6e6e6"/><circle cx="10.5" cy="5.5" r="1.2" fill="#e6e6e6"/></svg>
<svg style="left:396px;top:24.5px;" width="10" height="10" viewBox="0 0 10 10"><path d="M1.8 3.7 L5 6.9 L8.2 3.7" fill="none" stroke="#d0d0d0" stroke-width="1.3" stroke-linecap="round" stroke-linejoin="round"/></svg>
<div style="left:414px;top:19.5px;width:18.5px;height:19px;background:#5a5a5a;border-radius:4px 0 0 4px;"></div>
<svg style="left:415.5px;top:21.5px;" width="15" height="15" viewBox="0 0 16 16"><path d="M4.2 13.5 V7.8 A3.8 3.8 0 0 1 11.8 7.8 V13.5" fill="none" stroke="#a8a8a8" stroke-width="2.5" stroke-linecap="round" stroke-linejoin="round" transform="rotate(45 8 8.5)" stroke-linecap="butt"/></svg>
<div style="left:433px;top:19.5px;width:31.5px;height:19px;background:#2a2a2a;border-radius:0 4px 4px 0;"></div>
<svg style="left:435px;top:21px;" width="15" height="15" viewBox="0 0 16 16"><path d="M1.5 7 V13 M5 8.5 V12.5 M8.5 8.5 V12.5 M12 7 V13 M1.5 10.5 H12" fill="none" stroke="#e6e6e6" stroke-width="1.1" stroke-linecap="round" stroke-linejoin="round" /><rect x="10.5" y="2" width="3.6" height="3.6" rx="0" fill="#e6e6e6" /></svg>
<svg style="left:452.5px;top:24.5px;" width="10" height="10" viewBox="0 0 10 10"><path d="M1.8 3.7 L5 6.9 L8.2 3.7" fill="none" stroke="#d0d0d0" stroke-width="1.3" stroke-linecap="round" stroke-linejoin="round"/></svg>
<div style="left:481.5px;top:19.5px;width:30.5px;height:19px;background:#2a2a2a;border-radius:4px;"></div>
<svg style="left:484px;top:21px;" width="15" height="15" viewBox="0 0 16 16"><path d="M0.8 7.2 L9.6 10.2 L6 11.8 L4.4 15.6 Z" fill="#e6e6e6" /><path d="M5 4.6 Q10 -0.6 15.2 4.6 Q10 9.8 5 4.6 Z" fill="none" stroke="#e6e6e6" stroke-width="1.5" stroke-linecap="round" stroke-linejoin="round" /><circle cx="10.1" cy="4.6" r="1.9" fill="#e6e6e6"/></svg>
<svg style="left:501px;top:24.5px;" width="10" height="10" viewBox="0 0 10 10"><path d="M1.8 3.7 L5 6.9 L8.2 3.7" fill="none" stroke="#d0d0d0" stroke-width="1.3" stroke-linecap="round" stroke-linejoin="round"/></svg>
<div style="left:519px;top:19.5px;width:18.5px;height:19px;background:#4772b3;border-radius:4px 0 0 4px;"></div>
<svg style="left:520.5px;top:21.5px;" width="15" height="15" viewBox="0 0 16 16"><circle cx="3.6" cy="12.4" r="1.7" fill="none" stroke="#ffffff" stroke-width="1.1"/><path d="M5 11 L13.2 2.8 M8.6 2.4 H13.6 V7.4 M1.5 3.2 Q10.5 4 12.5 14.5" fill="none" stroke="#ffffff" stroke-width="1.2" stroke-linecap="round" stroke-linejoin="round" /></svg>
<div style="left:538px;top:19.5px;width:19.5px;height:19px;background:#2a2a2a;border-radius:0 4px 4px 0;"></div>
<svg style="left:542px;top:24.5px;" width="10" height="10" viewBox="0 0 10 10"><path d="M1.8 3.7 L5 6.9 L8.2 3.7" fill="none" stroke="#d0d0d0" stroke-width="1.3" stroke-linecap="round" stroke-linejoin="round"/></svg>
<div style="left:564px;top:19.5px;width:18.5px;height:19px;background:#4772b3;border-radius:4px 0 0 4px;"></div>
<svg style="left:565.5px;top:21.5px;" width="15" height="15" viewBox="0 0 16 16"><circle cx="9.5" cy="6.5" r="5" fill="#ffffff"/><circle cx="6" cy="10" r="4.2" fill="none" stroke="#ffffff" stroke-width="1.3"/></svg>
<div style="left:583px;top:19.5px;width:19.5px;height:19px;background:#2a2a2a;border-radius:0 4px 4px 0;"></div>
<svg style="left:587px;top:24.5px;" width="10" height="10" viewBox="0 0 10 10"><path d="M1.8 3.7 L5 6.9 L8.2 3.7" fill="none" stroke="#d0d0d0" stroke-width="1.3" stroke-linecap="round" stroke-linejoin="round"/></svg>
<div style="left:603px;top:19.5px;width:31.5px;height:19px;background:#2a2a2a;border-radius:0 4px 4px 0;"></div>
<svg style="left:605px;top:21px;" width="15" height="15" viewBox="0 0 16 16"><rect x="0.8" y="2.2" width="3.4" height="3.4" rx="0" fill="#e6e6e6" /><circle cx="9.3" cy="2.6" r="1.35" fill="#e6e6e6"/><path d="M5.8 5.6 Q9.3 4.4 14 5.6 M9.3 4.6 V9 M9.3 9 Q7.5 11 5.8 15 M9.3 9 Q11.3 11 13 15" fill="none" stroke="#e6e6e6" stroke-width="1.05" stroke-linecap="round" stroke-linejoin="round" /></svg>
<svg style="left:623px;top:24.5px;" width="10" height="10" viewBox="0 0 10 10"><path d="M1.8 3.7 L5 6.9 L8.2 3.7" fill="none" stroke="#d0d0d0" stroke-width="1.3" stroke-linecap="round" stroke-linejoin="round"/></svg>
<div style="left:641px;top:19.5px;width:6px;height:19px;background:#353535;border-radius:4px 0 0 4px;"></div>
<div style="left:0px;top:43px;width:106px;height:24.5px;background:rgba(46,46,46,0.76);border-radius:0 0 5px 0;"></div>
<div style="left:3px;top:46px;width:94.5px;height:18.5px;background:#565656;border-radius:4px;"></div>
<div style="left:3px;top:46px;width:18.3px;height:18.5px;background:#4772b3;border-radius:4px 0 0 4px;"></div>
<svg style="left:5px;top:48px;" width="14.5" height="14.5" viewBox="0 0 16 16"><rect x="1.6" y="1.6" width="12.8" height="12.8" rx="0" fill="none" stroke="#ffffff" stroke-width="1.5" stroke-dasharray="2.6 1.65"/></svg>
<svg style="left:24px;top:48px;" width="14.5" height="14.5" viewBox="0 0 16 16"><path d="M1 5.5 H5.5 V1 H15 V10.5 H10.5 V15 H1 Z" fill="#c6c6c6" /></svg>
<svg style="left:43px;top:48px;" width="14.5" height="14.5" viewBox="0 0 16 16"><path d="M5.5 1 H15 V10.5 H10.5 V5.5 H5.5 Z" fill="#c6c6c6" /><path d="M1.7 6.2 H9.8 V14.3 H1.7 Z" fill="none" stroke="#c6c6c6" stroke-width="1.4" stroke-linecap="round" stroke-linejoin="round" stroke-dasharray="2.2 1.85"/></svg>
<svg style="left:62px;top:48px;" width="14.5" height="14.5" viewBox="0 0 16 16"><path d="M5.5 1 H15 V10.5 H10.5 V5.5 H5.5 Z" fill="#c6c6c6" /><path d="M1 5.5 H5.5 V10.5 H10.5 V15 H1 Z" fill="#c6c6c6" /></svg>
<svg style="left:81px;top:48px;" width="14.5" height="14.5" viewBox="0 0 16 16"><rect x="1.7" y="1.7" width="12.6" height="12.6" rx="0" fill="none" stroke="#c6c6c6" stroke-width="1.4" stroke-dasharray="2.4 1.8"/><rect x="5" y="5" width="6" height="6" rx="0" fill="#c6c6c6" /></svg>
<div style="left:21.3px;top:46px;width:1px;height:18.5px;background:#484848;"></div>
<div style="left:40.3px;top:46px;width:1px;height:18.5px;background:#484848;"></div>
<div style="left:59.3px;top:46px;width:1px;height:18.5px;background:#484848;"></div>
<div style="left:78.3px;top:46px;width:1px;height:18.5px;background:#484848;"></div>
<div style="left:492px;top:43px;width:153px;height:24.5px;background:rgba(46,46,46,0.76);border-radius:0 0 0 5px;"></div>
<svg style="left:500px;top:47.5px;" width="15" height="15" viewBox="0 0 16 16"><path d="M8 0.5 V15.5" fill="none" stroke="#b8b8b8" stroke-width="1" stroke-linecap="round" stroke-linejoin="round" stroke-dasharray="1.6 1.4"/><path d="M6 3.2 Q2.8 0.8 1.6 4 Q1.6 6.6 4.2 7.6 Q1.4 9.2 2.4 12.4 Q4.2 14.8 6 12.4 M10 3.2 Q13.2 0.8 14.4 4 Q14.4 6.6 11.8 7.6 Q14.6 9.2 13.6 12.4 Q11.8 14.8 10 12.4" fill="none" stroke="#b8b8b8" stroke-width="1.1" stroke-linecap="round" stroke-linejoin="round" /></svg>
<div style="left:520px;top:46px;width:17.5px;height:18.5px;background:#5a5a5a;border-radius:4px;"></div>
<div style="left:520px;top:47px;height:16px;line-height:16px;font-size:12px;color:#e6e6e6;white-space:nowrap;width:17.5px;text-align:center;">X</div>
<div style="left:544px;top:46px;width:94.5px;height:18.5px;background:#2a2a2a;border-radius:4px;"></div>
<div style="left:550px;top:47px;height:16px;line-height:16px;font-size:12px;color:#e6e6e6;white-space:nowrap;">Pose Options</div>
<svg style="left:626px;top:50.5px;" width="10" height="10" viewBox="0 0 10 10"><path d="M1.8 3.7 L5 6.9 L8.2 3.7" fill="none" stroke="#d0d0d0" stroke-width="1.3" stroke-linecap="round" stroke-linejoin="round"/></svg>
<div style="left:3px;top:77px;width:40.5px;height:68px;background:#2b2b2b;border-radius:4px;"></div>
<div style="left:3px;top:110.5px;width:40.5px;height:1px;background:#3a3a3a;"></div>
<div style="left:3px;top:152px;width:40.5px;height:138px;background:#2b2b2b;border-radius:4px;"></div>
<div style="left:3px;top:186px;width:40.5px;height:1px;background:#3a3a3a;"></div>
<div style="left:3px;top:220.5px;width:40.5px;height:1px;background:#3a3a3a;"></div>
<div style="left:3px;top:255px;width:40.5px;height:1px;background:#3a3a3a;"></div>
<div style="left:3px;top:297px;width:40.5px;height:68px;background:#2b2b2b;border-radius:4px;"></div>
<div style="left:3px;top:330.5px;width:40.5px;height:1px;background:#3a3a3a;"></div>
<div style="left:3px;top:372px;width:40.5px;height:33px;background:#2b2b2b;border-radius:4px;"></div>
<div style="left:3px;top:77px;width:40.5px;height:34px;background:#4772b3;border-radius:4px 4px 0 0;"></div>
<svg style="left:10.25px;top:81px;" width="26" height="26" viewBox="0 0 24 24"><rect x="1" y="1" width="21" height="21" fill="none" stroke="#f0b030" stroke-width="1.3" stroke-dasharray="4.2 2.2"/><path d="M9 6.5 L19 12.5 L14.3 13.5 L12.5 18.5 Z" fill="#ffffff"/></svg>
<svg style="left:39px;top:106px;" width="4" height="4" viewBox="0 0 4 4"><path d="M4 0 V4 H0 Z" fill="#9ab0d0"/></svg>
<svg style="left:10.25px;top:115px;" width="26" height="26" viewBox="0 0 24 24"><circle cx="12" cy="12" r="10" fill="none" stroke="#ffffff" stroke-width="1.2"/><circle cx="12" cy="12" r="10" fill="none" stroke="#d04030" stroke-width="1.2" stroke-dasharray="3.9 3.95"/><path d="M12 3.5 V9 M12 15 V20.5 M3.5 12 H9 M15 12 H20.5" stroke="#8a8a8a" stroke-width="1.5" fill="none"/></svg>
<svg style="left:10.25px;top:156px;" width="26" height="26" viewBox="0 0 24 24"><path d="M12 4 V9.5 M12 14.5 V20 M4 12 H9.5 M14.5 12 H20" stroke="#e2e2e2" stroke-width="1.2" stroke-dasharray="1.8 1.5" fill="none"/><path d="M12 1.2 L14.6 5 H9.4 Z M12 22.8 L14.6 19 H9.4 Z M1.2 12 L5 9.4 V14.6 Z M22.8 12 L19 9.4 V14.6 Z" fill="#e2e2e2"/></svg>
<svg style="left:10.25px;top:190px;" width="26" height="26" viewBox="0 0 24 24"><path d="M4.2 8.6 A8.6 8.6 0 0 1 19.8 8.6 M19.8 15.4 A8.6 8.6 0 0 1 4.2 15.4" stroke="#e2e2e2" stroke-width="1.2" fill="none"/><path d="M1.2 9.4 H7 L4.1 13.6 Z M22.8 14.6 H17 L19.9 10.4 Z" fill="#e2e2e2"/><path d="M12 8.4 L15.6 12 L12 15.6 L8.4 12 Z" fill="#b4b4b4"/></svg>
<svg style="left:10.25px;top:225px;" width="26" height="26" viewBox="0 0 24 24"><path d="M7.5 3.5 H20.5 V16.5 H7.5 Z" fill="none" stroke="#bdbdbd" stroke-width="1.1"/><rect x="3" y="11.5" width="10" height="10" fill="#f0f0f0"/><path d="M13.5 10.5 L18.5 5.5 M14.8 5 H19 V9.2" stroke="#e2e2e2" stroke-width="1.3" fill="none"/></svg>
<svg style="left:39px;top:251px;" width="4" height="4" viewBox="0 0 4 4"><path d="M4 0 V4 H0 Z" fill="#8a8a8a"/></svg>
<svg style="left:10.25px;top:260px;" width="26" height="26" viewBox="0 0 24 24"><circle cx="12" cy="12" r="8.6" fill="none" stroke="#e2e2e2" stroke-width="1.2" stroke-dasharray="9.5 4" stroke-dashoffset="-2"/><rect x="7.6" y="7.6" width="8.8" height="8.8" fill="#f0f0f0"/><path d="M12 1 L14.4 4.6 H9.6 Z M12 23 L14.4 19.4 H9.6 Z M1 12 L4.6 9.6 V14.4 Z M23 12 L19.4 9.6 V14.4 Z" fill="#e2e2e2"/></svg>
<svg style="left:10.25px;top:301px;" width="26" height="26" viewBox="0 0 24 24"><path d="M3 15.5 L14.5 4 L18 7.5 L6.5 19 L2.2 20.2 Z" fill="none" stroke="#e2e2e2" stroke-width="1.3" stroke-linejoin="round"/><path d="M14.5 4 L16.3 2.2 L19.8 5.7 L18 7.5 Z" fill="#e2e2e2"/><path d="M2.2 20.2 L3 16.5 L6 19.2 Z" fill="#e2e2e2"/><path d="M5 22 Q9.5 15.5 13.5 19 Q17 22 21.5 18" stroke="#a4d4c0" stroke-width="1.3" fill="none"/></svg>
<svg style="left:39px;top:326px;" width="4" height="4" viewBox="0 0 4 4"><path d="M4 0 V4 H0 Z" fill="#8a8a8a"/></svg>
<svg style="left:10.25px;top:335px;" width="26" height="26" viewBox="0 0 24 24"><path d="M7.5 19 V9.5 A11 11 0 0 1 19.5 19 Z" fill="#a4d4c0"/><path d="M7.5 9.5 A11 11 0 0 1 19.5 19" fill="none" stroke="#2b2b2b" stroke-width="0.8"/><path d="M5.2 1.5 V19.5" stroke="#f0f0f0" stroke-width="3"/><path d="M3 21 H21.5" stroke="#f0f0f0" stroke-width="2.6"/><path d="M3 1.8 H8.5" stroke="#f0f0f0" stroke-width="1.4"/><path d="M6.5 5 H8.5 M6.5 8 H8 M6.5 11 H8.5 M6.5 14 H8 M6.5 17 H8.5 M9 20 V22.5 M12 20 V22.5 M15 20 V22.5 M18 20 V22.5" stroke="#2b2b2b" stroke-width="0.9" fill="none"/></svg>
<svg style="left:10.25px;top:376px;" width="26" height="26" viewBox="0 0 24 24"><path d="M3 7.5 Q6 14 12 16 Q18 14 21 7.5" stroke="#e2e2e2" stroke-width="1.1" stroke-dasharray="1.8 1.8" fill="none"/><path d="M12 12.6 L15 15.6 L12 18.6 L9 15.6 Z" fill="#a4d4c0"/><circle cx="3" cy="6.5" r="1.3" fill="#e2e2e2"/><circle cx="21" cy="6.5" r="1.3" fill="#e2e2e2"/></svg>
<svg style="left:39px;top:400px;" width="4" height="4" viewBox="0 0 4 4"><path d="M4 0 V4 H0 Z" fill="#8a8a8a"/></svg>
<div style="left:61px;top:76px;height:16px;line-height:16px;font-size:12.1px;color:#ffffff;white-space:nowrap;text-shadow:0 0 2px #000,0 1px 1px rgba(0,0,0,.8),0 0 1px #000;">Front Orthographic</div>
<div style="left:61px;top:94px;height:16px;line-height:16px;font-size:11.5px;color:#f0e020;white-space:nowrap;text-shadow:0 0 2px #000,0 1px 1px rgba(0,0,0,.8),0 0 1px #000;">(0) Armature : CTRL_Avatar_UpperBody</div>
<div style="left:61px;top:112px;height:16px;line-height:16px;font-size:12.1px;color:#ffffff;white-space:nowrap;text-shadow:0 0 2px #000,0 1px 1px rgba(0,0,0,.8),0 0 1px #000;">10 Centimeters</div>
<svg style="left:0px;top:0px;" width="1908" height="300" viewBox="0 0 1908 300"><path d="M594.5 86 V150" stroke="#4a86e0" stroke-width="2"/><path d="M562.5 118 H626.5" stroke="#e8486c" stroke-width="2"/><circle cx="562.5" cy="118" r="7.6" fill="#c88a96" stroke="#e8486c" stroke-width="1.2"/><circle cx="594.5" cy="150" r="7.6" fill="#7a96c0" stroke="#4a86e0" stroke-width="1.2"/><circle cx="594.5" cy="86" r="8" fill="#4a86e0" /><text x="594.5" y="89.8" font-size="10.5" text-anchor="middle" fill="#1a1a1a">Z</text><circle cx="626.5" cy="118" r="8" fill="#e8486c" /><text x="626.5" y="121.8" font-size="10.5" text-anchor="middle" fill="#1a1a1a">X</text><circle cx="594.5" cy="118" r="8.2" fill="#a6c814" stroke="#c8b060" stroke-width="1.2"/><text x="594.5" y="121.8" font-size="10.5" text-anchor="middle" fill="#1a1a1a">-Y</text></svg>
<div style="left:609.5px;top:159px;width:27px;height:27px;background:rgba(30,30,30,0.31);border-radius:14px;"></div>
<div style="left:609.5px;top:188.5px;width:27px;height:27px;background:rgba(30,30,30,0.31);border-radius:14px;"></div>
<div style="left:609.5px;top:219.5px;width:27px;height:27px;background:rgba(30,30,30,0.31);border-radius:14px;"></div>
<div style="left:609.5px;top:249.5px;width:27px;height:27px;background:rgba(30,30,30,0.31);border-radius:14px;"></div>
<svg style="left:613px;top:162.5px;" width="20" height="20" viewBox="0 0 20 20"><circle cx="11.6" cy="8" r="5.9" fill="#dedede"/><path d="M7.6 12.2 L2.6 17.2" stroke="#dedede" stroke-width="2.2" stroke-linecap="round"/><path d="M11.6 4.8 V11.2 M8.4 8 H14.8" stroke="#505050" stroke-width="1.2"/></svg>
<svg style="left:613px;top:192px;" width="20" height="20" viewBox="0 0 20 20"><g fill="#dedede"><rect x="5.2" y="4.2" width="2.3" height="8" rx="1.15" transform="rotate(-12 6.3 10)"/><rect x="8" y="2" width="2.4" height="9" rx="1.2" transform="rotate(-3 9.2 9)"/><rect x="11" y="2.2" width="2.4" height="9" rx="1.2" transform="rotate(5 12.2 9)"/><rect x="13.8" y="4.4" width="2.3" height="8" rx="1.15" transform="rotate(14 15 10)"/><path d="M5.5 9.5 H16 Q16.5 15 14 17.5 H8.5 Q6 15.5 3 11.5 Q2.6 10 4.2 10.2 L6 12 Z"/></g></svg>
<svg style="left:613px;top:223px;" width="20" height="20" viewBox="0 0 20 20"><path d="M3.2 8.2 A3 3 0 0 1 6.5 3.6 Q8 3.8 9 5 A3.6 3.6 0 1 1 13 9 H5 Z" fill="none" stroke="#dedede" stroke-width="1.3" stroke-linejoin="round"/><circle cx="6" cy="6.3" r="0.9" fill="#dedede"/><circle cx="12.6" cy="5.4" r="1.1" fill="#dedede"/><rect x="6" y="11.5" width="7" height="5.4" rx="1" fill="none" stroke="#dedede" stroke-width="1.3"/><path d="M3.6 12.6 V15.8 M3.6 14.2 H6" stroke="#dedede" stroke-width="1.2"/><path d="M14.6 14.2 L17.8 12.4 V16 Z" fill="none" stroke="#dedede" stroke-width="1.1"/></svg>
<svg style="left:613px;top:253px;" width="20" height="20" viewBox="0 0 20 20"><path d="M2 2 H18 V18 H2 Z M2 7.3 H18 M2 12.6 H18 M7.3 2 V18 M12.6 2 V18" fill="none" stroke="#dedede" stroke-width="1.3"/></svg>
<div style="left:637px;top:83px;width:8px;height:14.5px;background:rgba(60,60,60,0.45);border-radius:4px 0 0 4px;"></div>
<svg style="left:637.5px;top:86px;" width="7" height="8" viewBox="0 0 7 8"><path d="M5 1 L2 4 L5 7" fill="none" stroke="#c8c8c8" stroke-width="1.1"/></svg>
<div style="left:617px;top:627px;width:15px;height:6px;background:rgba(60,60,60,0.45);border-radius:4px 4px 0 0;"></div>
<svg style="left:620px;top:627.5px;" width="9" height="6" viewBox="0 0 9 6"><path d="M1 5 L4.5 1.5 L8 5" fill="none" stroke="#c8c8c8" stroke-width="1.1"/></svg>
<div style="left:649px;top:83px;width:4px;height:14.5px;background:rgba(60,60,60,0.45);border-radius:0 4px 4px 0;"></div>
<div style="left:649px;top:16.6px;width:819.5px;height:616.4px;background:linear-gradient(#9f9f9f,#878787);border-radius:5px;overflow:hidden;"></div>
<svg style="left:649px;top:17px;" width="819.5" height="616" viewBox="0 0 819.5 616"><rect x="3.67" y="0" width="1" height="616" fill="rgba(0,0,0,0.105)"/><rect x="28.05" y="0" width="1" height="616" fill="rgba(0,0,0,0.105)"/><rect x="52.43" y="0" width="1" height="616" fill="rgba(0,0,0,0.105)"/><rect x="76.81" y="0" width="1" height="616" fill="rgba(0,0,0,0.105)"/><rect x="101.19" y="0" width="1" height="616" fill="rgba(0,0,0,0.105)"/><rect x="125.57" y="0" width="1" height="616" fill="rgba(0,0,0,0.105)"/><rect x="149.95" y="0" width="1" height="616" fill="rgba(0,0,0,0.155)"/><rect x="174.33" y="0" width="1" height="616" fill="rgba(0,0,0,0.105)"/><rect x="198.71" y="0" width="1" height="616" fill="rgba(0,0,0,0.105)"/><rect x="223.09" y="0" width="1" height="616" fill="rgba(0,0,0,0.105)"/><rect x="247.47" y="0" width="1" height="616" fill="rgba(0,0,0,0.105)"/><rect x="271.85" y="0" width="1" height="616" fill="rgba(0,0,0,0.105)"/><rect x="296.23" y="0" width="1" height="616" fill="rgba(0,0,0,0.105)"/><rect x="320.61" y="0" width="1" height="616" fill="rgba(0,0,0,0.105)"/><rect x="344.99" y="0" width="1" height="616" fill="rgba(0,0,0,0.105)"/><rect x="369.37" y="0" width="1" height="616" fill="rgba(0,0,0,0.105)"/><rect x="393.75" y="0" width="1" height="616" fill="rgba(0,0,0,0.155)"/><rect x="418.13" y="0" width="1" height="616" fill="rgba(0,0,0,0.105)"/><rect x="442.51" y="0" width="1" height="616" fill="rgba(0,0,0,0.105)"/><rect x="466.89" y="0" width="1" height="616" fill="rgba(0,0,0,0.105)"/><rect x="491.27" y="0" width="1" height="616" fill="rgba(0,0,0,0.105)"/><rect x="515.65" y="0" width="1" height="616" fill="rgba(0,0,0,0.105)"/><rect x="540.03" y="0" width="1" height="616" fill="rgba(0,0,0,0.105)"/><rect x="564.41" y="0" width="1" height="616" fill="rgba(0,0,0,0.105)"/><rect x="588.79" y="0" width="1" height="616" fill="rgba(0,0,0,0.105)"/><rect x="613.17" y="0" width="1" height="616" fill="rgba(0,0,0,0.105)"/><rect x="637.55" y="0" width="1" height="616" fill="rgba(0,0,0,0.155)"/><rect x="661.93" y="0" width="1" height="616" fill="rgba(0,0,0,0.105)"/><rect x="686.31" y="0" width="1" height="616" fill="rgba(0,0,0,0.105)"/><rect x="710.69" y="0" width="1" height="616" fill="rgba(0,0,0,0.105)"/><rect x="735.07" y="0" width="1" height="616" fill="rgba(0,0,0,0.105)"/><rect x="759.45" y="0" width="1" height="616" fill="rgba(0,0,0,0.105)"/><rect x="783.83" y="0" width="1" height="616" fill="rgba(0,0,0,0.105)"/><rect x="808.21" y="0" width="1" height="616" fill="rgba(0,0,0,0.105)"/><rect x="0" y="15.51" width="819.5" height="1" fill="rgba(0,0,0,0.105)"/><rect x="0" y="39.89" width="819.5" height="1" fill="rgba(0,0,0,0.105)"/><rect x="0" y="64.27" width="819.5" height="1" fill="rgba(0,0,0,0.105)"/><rect x="0" y="88.65" width="819.5" height="1" fill="rgba(0,0,0,0.155)"/><rect x="0" y="113.03" width="819.5" height="1" fill="rgba(0,0,0,0.105)"/><rect x="0" y="137.41" width="819.5" height="1" fill="rgba(0,0,0,0.105)"/><rect x="0" y="161.79" width="819.5" height="1" fill="rgba(0,0,0,0.105)"/><rect x="0" y="186.17" width="819.5" height="1" fill="rgba(0,0,0,0.105)"/><rect x="0" y="210.55" width="819.5" height="1" fill="rgba(0,0,0,0.105)"/><rect x="0" y="234.93" width="819.5" height="1" fill="rgba(0,0,0,0.105)"/><rect x="0" y="259.31" width="819.5" height="1" fill="rgba(0,0,0,0.105)"/><rect x="0" y="283.69" width="819.5" height="1" fill="rgba(0,0,0,0.105)"/><rect x="0" y="308.07" width="819.5" height="1" fill="rgba(0,0,0,0.105)"/><rect x="0" y="332.45" width="819.5" height="1" fill="rgba(0,0,0,0.155)"/><rect x="0" y="356.83" width="819.5" height="1" fill="rgba(0,0,0,0.105)"/><rect x="0" y="381.21" width="819.5" height="1" fill="rgba(0,0,0,0.105)"/><rect x="0" y="405.59" width="819.5" height="1" fill="rgba(0,0,0,0.105)"/><rect x="0" y="429.97" width="819.5" height="1" fill="rgba(0,0,0,0.105)"/><rect x="0" y="454.35" width="819.5" height="1" fill="rgba(0,0,0,0.105)"/><rect x="0" y="478.73" width="819.5" height="1" fill="rgba(0,0,0,0.105)"/><rect x="0" y="503.11" width="819.5" height="1" fill="rgba(0,0,0,0.105)"/><rect x="0" y="527.49" width="819.5" height="1" fill="rgba(0,0,0,0.105)"/><rect x="0" y="551.87" width="819.5" height="1" fill="rgba(0,0,0,0.105)"/><rect x="0" y="576.25" width="819.5" height="1" fill="rgba(0,0,0,0.155)"/><rect x="0" y="600.63" width="819.5" height="1" fill="rgba(0,0,0,0.105)"/></svg>
<svg style="left:0px;top:0px;overflow:hidden;" width="1449" height="633" viewBox="0 0 1449 633"><defs><linearGradient id="sbody" x1="0" x2="1" y1="0" y2="0"><stop offset="0" stop-color="#e9e9ea"/><stop offset="0.55" stop-color="#ececed"/><stop offset="1" stop-color="#c6c6c8"/></linearGradient><radialGradient id="shead" cx="0.42" cy="0.4" r="0.65"><stop offset="0" stop-color="#f4f4f4"/><stop offset="0.7" stop-color="#e7e7e8"/><stop offset="1" stop-color="#cbcbcd"/></radialGradient></defs><path d="M1043.25 43 V132" stroke="#3c70c0" stroke-width="1.2"/><path d="M1043.25 594 V633" stroke="#3c70c0" stroke-width="1.6"/><path d="M1052 395 C1057.5 391.5 1066.83 394.83 1069 399 C1071.17 403.17 1066.25 413.67 1065 420 C1063.75 426.33 1062.83 430.33 1061.5 437 C1060.17 443.67 1058 453.33 1057 460 C1056 466.67 1055.17 471.67 1055.5 477 C1055.83 482.33 1057.75 487.33 1059 492 C1060.25 496.67 1061.67 498.83 1063 505 C1064.33 511.17 1065.67 520.5 1067 529 C1068.33 537.5 1069.58 548.33 1071 556 C1072.42 563.67 1073.83 570 1075.5 575 C1077.17 580 1079.67 583.17 1081 586 C1082.33 588.83 1085.33 590.83 1083.5 592 C1081.67 593.17 1075.58 592.83 1070 593 C1064.42 593.17 1054.33 596 1050 593 C1045.67 590 1045.67 583.83 1044 575 C1042.33 566.17 1041.33 552.5 1040 540 C1038.67 527.5 1037 513.33 1036 500 C1035 486.67 1034 473.33 1034 460 C1034 446.67 1033 430.83 1036 420 C1039 409.17 1046.5 398.5 1052 395 Z" fill="#d4d4d6"/><path d="M1011 392 C1017.75 389.83 1043.17 387.33 1050 392 C1056.83 396.67 1052.17 411.17 1052 420 C1051.83 428.83 1050.33 436.67 1049 445 C1047.67 453.33 1045 462.5 1044 470 C1043 477.5 1042.17 482.5 1043 490 C1043.83 497.5 1047.17 505.83 1049 515 C1050.83 524.17 1052.67 535.83 1054 545 C1055.33 554.17 1056.67 562.5 1057 570 C1057.33 577.5 1058.83 586.08 1056 590 C1053.17 593.92 1047.67 592.83 1040 593.5 C1032.33 594.17 1017.83 594 1010 594 C1002.17 594 995.92 594.25 993 593.5 C990.08 592.75 990.5 591.08 992.5 589.5 C994.5 587.92 999.75 586.08 1005 584 C1010.25 581.92 1019.58 579.67 1024 577 C1028.42 574.33 1031 572.5 1031.5 568 C1032 563.5 1028.58 555.67 1027 550 C1025.42 544.33 1023.83 539.83 1022 534 C1020.17 528.17 1017.75 521 1016 515 C1014.25 509 1012.95 505.17 1011.5 498 C1010.05 490.83 1008.17 480.83 1007.3 472 C1006.43 463.17 1006.27 453.67 1006.3 445 C1006.33 436.33 1006.97 426.67 1007.5 420 C1008.03 413.33 1008.92 409.67 1009.5 405 C1010.08 400.33 1004.25 394.17 1011 392 Z" fill="url(#sbody)"/><path d="M1029 217 C1031.85 214.1 1039.67 216 1045 215 C1050.33 214 1058.25 209.37 1061 211 C1063.75 212.63 1060.9 221.23 1061.5 224.8 C1062.1 228.37 1063.02 229.87 1064.6 232.4 C1066.18 234.93 1068.97 237.43 1071 240 C1073.03 242.57 1075.6 244.47 1076.8 247.8 C1078 251.13 1078.08 255.47 1078.2 260 C1078.32 264.53 1078.03 269.67 1077.5 275 C1076.97 280.33 1075.75 286.17 1075 292 C1074.25 297.83 1073.42 303.67 1073 310 C1072.58 316.33 1072.17 324.17 1072.5 330 C1072.83 335.83 1073.75 340.33 1075 345 C1076.25 349.67 1078.92 353 1080 358 C1081.08 363 1081.67 370 1081.5 375 C1081.33 380 1081.42 384.17 1079 388 C1076.58 391.83 1073.5 396.67 1067 398 C1060.5 399.33 1048.92 397.5 1040 396 C1031.08 394.5 1018.33 393 1013.5 389 C1008.67 385 1011.58 377.33 1011 372 C1010.42 366.67 1010.42 363.17 1010 357 C1009.58 350.83 1008.92 341.67 1008.5 335 C1008.08 328.33 1008.05 325.67 1007.5 317 C1006.95 308.33 1005.32 291.67 1005.2 283 C1005.08 274.33 1005.95 269.33 1006.8 265 C1007.65 260.67 1008.83 259.87 1010.3 257 C1011.77 254.13 1013.65 250.63 1015.6 247.8 C1017.55 244.97 1019.95 242.57 1022 240 C1024.05 237.43 1026.73 236.23 1027.9 232.4 C1029.07 228.57 1026.15 219.9 1029 217 Z" fill="url(#sbody)"/><path d="M1042.9 132.5 C1047.5 132.63 1053.87 133.18 1058.5 135.3 C1063.13 137.42 1067.65 141.77 1070.7 145.2 C1073.75 148.63 1075.4 152.07 1076.8 155.9 C1078.2 159.73 1078.97 163.87 1079.1 168.2 C1079.23 172.53 1078.75 177.57 1077.6 181.9 C1076.45 186.23 1074.37 190.62 1072.2 194.2 C1070.03 197.78 1066.47 200.77 1064.6 203.4 C1062.73 206.03 1061.52 206.9 1061 210 C1060.48 213.1 1064.17 219.83 1061.5 222 C1058.83 224.17 1050.35 223.3 1045 223 C1039.65 222.7 1031.75 221.78 1029.4 220.2 C1027.05 218.62 1032.57 214.27 1030.9 213.5 C1029.23 212.73 1022.33 215.88 1019.4 215.6 C1016.47 215.32 1014.82 213.83 1013.3 211.8 C1011.78 209.77 1010.93 205.57 1010.3 203.4 C1009.67 201.23 1010.27 199.95 1009.5 198.8 C1008.73 197.65 1006.93 197.65 1005.7 196.5 C1004.47 195.35 1001.98 194.33 1002.1 191.9 C1002.22 189.47 1005.42 185.35 1006.4 181.9 C1007.38 178.45 1007.78 174.52 1008 171.2 C1008.22 167.88 1007.32 165.32 1007.7 162 C1008.08 158.68 1008.6 154.62 1010.3 151.3 C1012 147.98 1014.47 144.9 1017.9 142.1 C1021.33 139.3 1026.73 136.1 1030.9 134.5 C1035.07 132.9 1038.3 132.37 1042.9 132.5 Z" fill="url(#shead)"/><ellipse cx="1044" cy="185" rx="4.8" ry="8.2" fill="#e2e2e3" transform="rotate(10 1044 185)"/><path d="M1040.5 181 Q1044.5 176 1047.5 181.5 Q1048.5 187 1044 192" stroke="#cdcdcf" stroke-width="1.1" fill="none"/><ellipse cx="1016.1" cy="179.2" rx="1.3" ry="2.4" fill="#2a2a2a"/><path d="M1010 173 Q1015 171 1020 173.5" stroke="#d0d0d2" stroke-width="1.2" fill="none"/><path d="M1011 358 C1022.58 355.17 1069.17 355.67 1081 358 C1092.83 360.33 1082.33 367.33 1082 372 C1081.67 376.67 1081.33 381.67 1079 386 C1076.67 390.33 1072.83 396.83 1068 398 C1063.17 399.17 1056.33 394.42 1050 393 C1043.67 391.58 1036.08 390.08 1030 389.5 C1023.92 388.92 1016.58 391.92 1013.5 389.5 C1010.42 387.08 1011.92 380.25 1011.5 375 C1011.08 369.75 999.42 360.83 1011 358 Z" fill="#0a100c"/><path d="M1040 236 C1044.83 232.33 1057.5 230.67 1063 233 C1068.5 235.33 1071.08 241.67 1073 250 C1074.92 258.33 1075 272.17 1074.5 283 C1074 293.83 1072.08 304.67 1070 315 C1067.92 325.33 1064.83 335.5 1062 345 C1059.17 354.5 1054.83 364.17 1053 372 C1051.17 379.83 1051.83 385.67 1051 392 C1050.17 398.33 1049.83 405.33 1048 410 C1046.17 414.67 1043.5 418.67 1040 420 C1036.5 421.33 1030.17 420.5 1027 418 C1023.83 415.5 1021.83 410.5 1021 405 C1020.17 399.5 1021.17 391.17 1022 385 C1022.83 378.83 1024.5 374.67 1026 368 C1027.5 361.33 1029.33 353.83 1031 345 C1032.67 336.17 1034.83 325.33 1036 315 C1037.17 304.67 1038.33 293 1038 283 C1037.67 273 1033.67 262.83 1034 255 C1034.33 247.17 1035.17 239.67 1040 236 Z" fill="#e4e4e5"/><path d="M1074 262 Q1076 300 1064 340 Q1058 360 1053 380" stroke="#cfcfd1" stroke-width="2.5" fill="none"/><path d="M1021.4 118.5 H1073.7" stroke="#e6c800" stroke-width="1.6"/><g fill="none" stroke="#0c1468" stroke-width="1.1"><path d="M1019 225.1 L1069.5 212.9 M987.1 272.9 L1107.1 276.3 M990 300.9 L1094.3 314.3 M990 342 H1095.7 M1015.7 430.9 L1080.6 427.1 M1038.2 521 L1079.8 516.9"/><ellipse cx="1050" cy="267.2" rx="21.4" ry="5.6" transform="rotate(-3 1050 267)"/><path d="M1037 263 L1062 272"/><path d="M1003.5 594.9 L1084.4 567.2 L1085.8 599 L1005 602.7 Z M1007 595 L1008 602 M1040 582.5 L1041.5 601 M1043 581.5 L1044.5 601 M1081 568.5 L1082.5 599" stroke-width="1.3"/></g><g transform="rotate(11 1048.6 328.6)" fill="none" stroke="#0c1468" stroke-width="0.9"><ellipse cx="1048.6" cy="328.6" rx="19.5" ry="3.8"/><path d="M1031.15 330.7 L1033.55 326.5"/><path d="M1034.4 331.43 L1036.8 325.77"/><path d="M1037.65 331.89 L1040.05 325.31"/><path d="M1040.9 332.18 L1043.3 325.02"/><path d="M1044.15 332.35 L1046.55 324.85"/><path d="M1047.4 332.4 L1049.8 324.8"/><path d="M1050.65 332.35 L1053.05 324.85"/><path d="M1053.9 332.18 L1056.3 325.02"/><path d="M1057.15 331.89 L1059.55 325.31"/><path d="M1060.4 331.43 L1062.8 325.77"/><path d="M1063.65 330.7 L1066.05 326.5"/></g><g transform="rotate(10 1038 372.8)" fill="none" stroke="#0c1468" stroke-width="0.9"><ellipse cx="1038" cy="372.8" rx="14.5" ry="2.4"/><path d="M1025.52 374.31 L1027.92 371.29"/><path d="M1028.74 374.8 L1031.14 370.8"/><path d="M1031.97 375.06 L1034.37 370.54"/><path d="M1035.19 375.19 L1037.59 370.41"/><path d="M1038.41 375.19 L1040.81 370.41"/><path d="M1041.63 375.06 L1044.03 370.54"/><path d="M1044.86 374.8 L1047.26 370.8"/><path d="M1048.08 374.31 L1050.48 371.29"/></g><path d="M1026.3 238.3 L1058.8 234.3" stroke="#d81818" stroke-width="1.2"/><polygon points="1015.2,243.2 1020.5,232.5 1026.3,238.3" fill="none" stroke="#e02858" stroke-width="1.1"/><path d="M1018 238 L1023 241" stroke="#e02858" stroke-width="0.9"/><path d="M998.6 360.6 Q1020 344 1048.6 343 Q1078 343 1096 353.5 L1097 355.5 Q1075 346 1048.6 346.5 Q1022 348 1001 361 Z" fill="#c8c8a0" fill-opacity="0.3" stroke="#20240c" stroke-width="0.9"/><path d="M962.3 364 H1129.4" stroke="#e8dc9c" stroke-width="1.5"/><path d="M971 363.4 H998 M1040 364 H1050" stroke="#30300c" stroke-width="1"/><path d="M1043.25 322 V537" stroke="#707074" stroke-width="1.1" stroke-dasharray="2 2.6"/><g fill="none" stroke="#e02858" stroke-width="0.95"><path d="M1020.8 378 l1.6 2.8 l1.4 -3.2 M1021.2 381 l2.2 0.6"/><path d="M1024.8 380 l1.6 2.8 l1.4 -3.2 M1025.2 383 l2.2 0.6"/><path d="M1019.8 385 l1.6 2.8 l1.4 -3.2 M1020.2 388 l2.2 0.6"/><path d="M1023.8 387 l1.6 2.8 l1.4 -3.2 M1024.2 390 l2.2 0.6"/><path d="M1019.8 392 l1.6 2.8 l1.4 -3.2 M1020.2 395 l2.2 0.6"/><path d="M1020.8 397 l1.6 2.8 l1.4 -3.2 M1021.2 400 l2.2 0.6"/><path d="M1022.8 402 l1.6 2.8 l1.4 -3.2 M1023.2 405 l2.2 0.6"/><path d="M1026.8 400 l1.6 2.8 l1.4 -3.2 M1027.2 403 l2.2 0.6"/><path d="M1030.8 401 l1.6 2.8 l1.4 -3.2 M1031.2 404 l2.2 0.6"/><path d="M1034.8 402 l1.6 2.8 l1.4 -3.2 M1035.2 405 l2.2 0.6"/><path d="M1038.8 402 l1.6 2.8 l1.4 -3.2 M1039.2 405 l2.2 0.6"/><path d="M1042.8 403 l1.6 2.8 l1.4 -3.2 M1043.2 406 l2.2 0.6"/><path d="M1045.8 405 l1.6 2.8 l1.4 -3.2 M1046.2 408 l2.2 0.6"/><path d="M1028.8 405 l1.6 2.8 l1.4 -3.2 M1029.2 408 l2.2 0.6"/><path d="M1033.8 406 l1.6 2.8 l1.4 -3.2 M1034.2 409 l2.2 0.6"/><path d="M1039.8 407 l1.6 2.8 l1.4 -3.2 M1040.2 410 l2.2 0.6"/><path d="M1043.8 409 l1.6 2.8 l1.4 -3.2 M1044.2 412 l2.2 0.6"/><path d="M1020.8 408 l1.6 2.8 l1.4 -3.2 M1021.2 411 l2.2 0.6"/><path d="M1024.8 410 l1.6 2.8 l1.4 -3.2 M1025.2 413 l2.2 0.6"/><path d="M1029.8 411 l1.6 2.8 l1.4 -3.2 M1030.2 414 l2.2 0.6"/><path d="M1034.8 411 l1.6 2.8 l1.4 -3.2 M1035.2 414 l2.2 0.6"/><path d="M1038.8 412 l1.6 2.8 l1.4 -3.2 M1039.2 415 l2.2 0.6"/><path d="M1021.8 415 l1.6 2.8 l1.4 -3.2 M1022.2 418 l2.2 0.6"/><path d="M1026.8 416 l1.6 2.8 l1.4 -3.2 M1027.2 419 l2.2 0.6"/><path d="M1031.8 417 l1.6 2.8 l1.4 -3.2 M1032.2 420 l2.2 0.6"/><path d="M1035.8 417 l1.6 2.8 l1.4 -3.2 M1036.2 420 l2.2 0.6"/></g><g fill="none" stroke="#d81818" stroke-width="0.95"><path d="M993.2 576 L999.2 562 L1005.2 576 Z M996.7 576 L999.2 562 M1001.7 576 L999.2 562"/><path d="M1012.6 576 L1018.6 562 L1024.6 576 Z M1016.1 576 L1018.6 562 M1021.1 576 L1018.6 562"/><path d="M992.3 592 Q994.9 580 997.5 592"/><path d="M1011.9 592 Q1014.5 580 1017.1 592"/><path d="M1060 571 L1072 566.5 L1072 579 Z M1060 571 L1072 573 M1064 569 L1066 577 M1068 568 L1069 578"/><path d="M1084 565 V580 M1087 565.5 L1094 572.5 L1087 579.5 Z M1087 572.5 H1094"/></g><g fill="none" stroke="#d81818" stroke-width="0.9"><polygon points="1178.4,241 1174.77,249.77 1166,253.4 1157.23,249.77 1153.6,241 1157.23,232.23 1166,228.6 1174.77,232.23"/><polygon points="1177.46,245.75 1170.75,252.46 1161.25,252.46 1154.54,245.75 1154.54,236.25 1161.25,229.54 1170.75,229.54 1177.46,236.25"/><path d="M1153.6 241 L1178.4 241"/><path d="M1155.26 234.8 L1176.74 247.2"/><path d="M1159.8 230.26 L1172.2 251.74"/><path d="M1166 228.6 L1166 253.4"/><path d="M1172.2 230.26 L1159.8 251.74"/><path d="M1176.74 234.8 L1155.26 247.2"/><circle cx="1166" cy="241" r="6.82"/></g><g fill="none" stroke="#d81818" stroke-width="0.9"><polygon points="926,472 922.43,480.63 913.8,484.2 905.17,480.63 901.6,472 905.17,463.37 913.8,459.8 922.43,463.37"/><polygon points="925.07,476.67 918.47,483.27 909.13,483.27 902.53,476.67 902.53,467.33 909.13,460.73 918.47,460.73 925.07,467.33"/><path d="M901.6 472 H926 M913.8 459.8 V484.2" stroke-width="1.3"/><ellipse cx="913.8" cy="472" rx="6.1" ry="12.2"/><ellipse cx="913.8" cy="472" rx="12.2" ry="5.49"/></g><path d="M649 594 H741" stroke="#7e8a3c" stroke-width="1.2"/><path d="M741 594 H1348" stroke="#dcd010" stroke-width="1.4"/><path d="M874 594.2 H1212" stroke="#dccf08" stroke-width="2.6"/><path d="M1348 594 H1449" stroke="#7e8a3c" stroke-width="1.2"/><circle cx="1043.25" cy="594" r="9.5" fill="none" stroke="#ffffff" stroke-width="1.5"/><circle cx="1043.25" cy="594" r="9.5" fill="none" stroke="#e03030" stroke-width="1.5" stroke-dasharray="3.7 3.75"/><path d="M1028.25 594 H1038.25 M1048.25 594 H1058.25 M1043.25 579 V589 M1043.25 599 V609" stroke="#26260c" stroke-width="0.8"/><circle cx="1043.25" cy="594" r="2.6" fill="#f0a020"/></svg>
<div style="left:649px;top:16.6px;width:819.5px;height:26.4px;background:rgba(46,46,46,0.76);border-radius:5px 5px 0 0;"></div>
<div style="left:656.5px;top:19.5px;width:30.5px;height:19px;background:#2a2a2a;border-radius:4px;"></div>
<svg style="left:659px;top:21px;" width="15" height="15" viewBox="0 0 16 16"><path d="M1 8.6 H12.5 M0.8 12 H13 M4.6 6 L3 15 M9.4 6.5 L11 15" fill="none" stroke="#e6e6e6" stroke-width="1.05" stroke-linecap="round" stroke-linejoin="round" /><circle cx="10.6" cy="4.2" r="3.3" fill="#e6e6e6"/><circle cx="9.6" cy="3.2" r="1.2" fill="#ffffff"/></svg>
<svg style="left:675.5px;top:24.5px;" width="10" height="10" viewBox="0 0 10 10"><path d="M1.8 3.7 L5 6.9 L8.2 3.7" fill="none" stroke="#d0d0d0" stroke-width="1.3" stroke-linecap="round" stroke-linejoin="round"/></svg>
<div style="left:694px;top:19.5px;width:101px;height:19px;background:#2a2a2a;border-radius:4px;"></div>
<svg style="left:697px;top:21px;" width="15" height="15" viewBox="0 0 16 16"><rect x="0.8" y="2.2" width="3.4" height="3.4" rx="0" fill="#e6e6e6" /><circle cx="9.3" cy="2.6" r="1.35" fill="#e6e6e6"/><path d="M5.8 5.6 Q9.3 4.4 14 5.6 M9.3 4.6 V9 M9.3 9 Q7.5 11 5.8 15 M9.3 9 Q11.3 11 13 15" fill="none" stroke="#e6e6e6" stroke-width="1.05" stroke-linecap="round" stroke-linejoin="round" /></svg>
<div style="left:719px;top:21px;height:16px;line-height:16px;font-size:12px;color:#e6e6e6;white-space:nowrap;">Pose Mode</div>
<svg style="left:783.5px;top:24.5px;" width="10" height="10" viewBox="0 0 10 10"><path d="M1.8 3.7 L5 6.9 L8.2 3.7" fill="none" stroke="#d0d0d0" stroke-width="1.3" stroke-linecap="round" stroke-linejoin="round"/></svg>
<div style="left:808px;top:21px;height:16px;line-height:16px;font-size:12px;color:#dcdcdc;white-space:nowrap;">View</div>
<div style="left:849px;top:21px;height:16px;line-height:16px;font-size:12px;color:#dcdcdc;white-space:nowrap;">Select</div>
<div style="left:896px;top:21px;height:16px;line-height:16px;font-size:12px;color:#dcdcdc;white-space:nowrap;">Pose</div>
<div style="left:961.5px;top:19.5px;width:76.5px;height:19px;background:#2a2a2a;border-radius:4px;"></div>
<svg style="left:964.5px;top:21px;" width="15" height="15" viewBox="0 0 16 16"><path d="M3.5 1.5 V12.5 H14.5 M1.5 3.5 L3.5 1.5 L5.5 3.5 M12.5 10.5 L14.5 12.5 L12.5 14.5 M3.5 12.5 L9 6" fill="none" stroke="#e6e6e6" stroke-width="1.1" stroke-linecap="round" stroke-linejoin="round" /><circle cx="3.5" cy="12.5" r="1.6" fill="none" stroke="#e6e6e6" stroke-width="1"/></svg>
<div style="left:986.5px;top:21px;height:16px;line-height:16px;font-size:12px;color:#e6e6e6;white-space:nowrap;">Global</div>
<svg style="left:1027px;top:24.5px;" width="10" height="10" viewBox="0 0 10 10"><path d="M1.8 3.7 L5 6.9 L8.2 3.7" fill="none" stroke="#d0d0d0" stroke-width="1.3" stroke-linecap="round" stroke-linejoin="round"/></svg>
<div style="left:1044.5px;top:19.5px;width:30.5px;height:19px;background:#2a2a2a;border-radius:4px;"></div>
<svg style="left:1047.5px;top:21.5px;" width="15" height="15" viewBox="0 0 16 16"><circle cx="6" cy="9.5" r="4" fill="none" stroke="#e6e6e6" stroke-width="1.2"/><circle cx="10.5" cy="5.5" r="3.6" fill="none" stroke="#e6e6e6" stroke-width="1.2"/><circle cx="6" cy="9.5" r="1.4" fill="#e6e6e6"/><circle cx="10.5" cy="5.5" r="1.2" fill="#e6e6e6"/></svg>
<svg style="left:1064px;top:24.5px;" width="10" height="10" viewBox="0 0 10 10"><path d="M1.8 3.7 L5 6.9 L8.2 3.7" fill="none" stroke="#d0d0d0" stroke-width="1.3" stroke-linecap="round" stroke-linejoin="round"/></svg>
<div style="left:1081.5px;top:19.5px;width:18.5px;height:19px;background:#5a5a5a;border-radius:4px 0 0 4px;"></div>
<svg style="left:1083px;top:21.5px;" width="15" height="15" viewBox="0 0 16 16"><path d="M4.2 13.5 V7.8 A3.8 3.8 0 0 1 11.8 7.8 V13.5" fill="none" stroke="#a8a8a8" stroke-width="2.5" stroke-linecap="round" stroke-linejoin="round" transform="rotate(45 8 8.5)" stroke-linecap="butt"/></svg>
<div style="left:1101px;top:19.5px;width:31.5px;height:19px;background:#2a2a2a;border-radius:0 4px 4px 0;"></div>
<svg style="left:1103px;top:21px;" width="15" height="15" viewBox="0 0 16 16"><path d="M1.5 7 V13 M5 8.5 V12.5 M8.5 8.5 V12.5 M12 7 V13 M1.5 10.5 H12" fill="none" stroke="#e6e6e6" stroke-width="1.1" stroke-linecap="round" stroke-linejoin="round" /><rect x="10.5" y="2" width="3.6" height="3.6" rx="0" fill="#e6e6e6" /></svg>
<svg style="left:1120.5px;top:24.5px;" width="10" height="10" viewBox="0 0 10 10"><path d="M1.8 3.7 L5 6.9 L8.2 3.7" fill="none" stroke="#d0d0d0" stroke-width="1.3" stroke-linecap="round" stroke-linejoin="round"/></svg>
<div style="left:1181.5px;top:19.5px;width:30.5px;height:19px;background:#2a2a2a;border-radius:4px;"></div>
<svg style="left:1184px;top:21px;" width="15" height="15" viewBox="0 0 16 16"><path d="M0.8 7.2 L9.6 10.2 L6 11.8 L4.4 15.6 Z" fill="#e6e6e6" /><path d="M5 4.6 Q10 -0.6 15.2 4.6 Q10 9.8 5 4.6 Z" fill="none" stroke="#e6e6e6" stroke-width="1.5" stroke-linecap="round" stroke-linejoin="round" /><circle cx="10.1" cy="4.6" r="1.9" fill="#e6e6e6"/></svg>
<svg style="left:1201px;top:24.5px;" width="10" height="10" viewBox="0 0 10 10"><path d="M1.8 3.7 L5 6.9 L8.2 3.7" fill="none" stroke="#d0d0d0" stroke-width="1.3" stroke-linecap="round" stroke-linejoin="round"/></svg>
<div style="left:1219px;top:19.5px;width:18.5px;height:19px;background:#4772b3;border-radius:4px 0 0 4px;"></div>
<svg style="left:1220.5px;top:21.5px;" width="15" height="15" viewBox="0 0 16 16"><circle cx="3.6" cy="12.4" r="1.7" fill="none" stroke="#ffffff" stroke-width="1.1"/><path d="M5 11 L13.2 2.8 M8.6 2.4 H13.6 V7.4 M1.5 3.2 Q10.5 4 12.5 14.5" fill="none" stroke="#ffffff" stroke-width="1.2" stroke-linecap="round" stroke-linejoin="round" /></svg>
<div style="left:1238px;top:19.5px;width:19.5px;height:19px;background:#2a2a2a;border-radius:0 4px 4px 0;"></div>
<svg style="left:1242px;top:24.5px;" width="10" height="10" viewBox="0 0 10 10"><path d="M1.8 3.7 L5 6.9 L8.2 3.7" fill="none" stroke="#d0d0d0" stroke-width="1.3" stroke-linecap="round" stroke-linejoin="round"/></svg>
<div style="left:1264px;top:19.5px;width:18.5px;height:19px;background:#4772b3;border-radius:4px 0 0 4px;"></div>
<svg style="left:1265.5px;top:21.5px;" width="15" height="15" viewBox="0 0 16 16"><circle cx="9.5" cy="6.5" r="5" fill="#ffffff"/><circle cx="6" cy="10" r="4.2" fill="none" stroke="#ffffff" stroke-width="1.3"/></svg>
<div style="left:1283px;top:19.5px;width:19.5px;height:19px;background:#2a2a2a;border-radius:0 4px 4px 0;"></div>
<svg style="left:1287px;top:24.5px;" width="10" height="10" viewBox="0 0 10 10"><path d="M1.8 3.7 L5 6.9 L8.2 3.7" fill="none" stroke="#d0d0d0" stroke-width="1.3" stroke-linecap="round" stroke-linejoin="round"/></svg>
<div style="left:1303px;top:19.5px;width:31.5px;height:19px;background:#2a2a2a;border-radius:0 4px 4px 0;"></div>
<svg style="left:1305px;top:21px;" width="15" height="15" viewBox="0 0 16 16"><rect x="0.8" y="2.2" width="3.4" height="3.4" rx="0" fill="#e6e6e6" /><circle cx="9.3" cy="2.6" r="1.35" fill="#e6e6e6"/><path d="M5.8 5.6 Q9.3 4.4 14 5.6 M9.3 4.6 V9 M9.3 9 Q7.5 11 5.8 15 M9.3 9 Q11.3 11 13 15" fill="none" stroke="#e6e6e6" stroke-width="1.05" stroke-linecap="round" stroke-linejoin="round" /></svg>
<svg style="left:1323px;top:24.5px;" width="10" height="10" viewBox="0 0 10 10"><path d="M1.8 3.7 L5 6.9 L8.2 3.7" fill="none" stroke="#d0d0d0" stroke-width="1.3" stroke-linecap="round" stroke-linejoin="round"/></svg>
<div style="left:1341px;top:19.5px;width:18.5px;height:19px;background:#505050;border-radius:4px;"></div>
<svg style="left:1343px;top:21.5px;" width="15" height="15" viewBox="0 0 16 16"><rect x="1.5" y="4.5" width="9" height="9" rx="1.5" fill="none" stroke="#3a3a3a" stroke-width="1.1" /><rect x="5.5" y="1.5" width="9" height="9" rx="1.5" fill="none" stroke="#3a3a3a" stroke-width="1.1" stroke-dasharray="2 1.2"/></svg>
<div style="left:1366px;top:19.5px;width:18.5px;height:19px;background:#585858;border-radius:4px 0 0 4px;"></div>
<svg style="left:1367.5px;top:21.5px;" width="15" height="15" viewBox="0 0 16 16"><circle cx="8" cy="8" r="6" fill="none" stroke="#e6e6e6" stroke-width="1.1"/><path d="M2 8 H14 M8 2 V14 M8 2 Q3.5 8 8 14 M8 2 Q12.5 8 8 14" fill="none" stroke="#e6e6e6" stroke-width="0.9" stroke-linecap="round" stroke-linejoin="round" /></svg>
<div style="left:1385px;top:19.5px;width:18.5px;height:19px;background:#585858;"></div>
<svg style="left:1386.5px;top:21.5px;" width="15" height="15" viewBox="0 0 16 16"><circle cx="8" cy="8" r="6.2" fill="#c0c0c0"/></svg>
<div style="left:1404px;top:19.5px;width:18.5px;height:19px;background:#4772b3;"></div>
<svg style="left:1405.5px;top:21.5px;" width="15" height="15" viewBox="0 0 16 16"><circle cx="8" cy="8" r="6" fill="none" stroke="#ffffff" stroke-width="1.2"/><path d="M8 2 A6 6 0 0 0 8 14 Z" fill="#ffffff" /><path d="M8 8 A6 6 0 0 0 14 8 Z" fill="#ffffff" opacity="0.55"/></svg>
<div style="left:1423px;top:19.5px;width:18.5px;height:19px;background:#585858;"></div>
<svg style="left:1424.5px;top:21.5px;" width="15" height="15" viewBox="0 0 16 16"><circle cx="8" cy="8" r="6" fill="none" stroke="#e6e6e6" stroke-width="1.2"/><circle cx="7" cy="7" r="3" fill="none" stroke="#e6e6e6" stroke-width="1"/><path d="M3.5 10 A5 5 0 0 0 11 12.5" fill="none" stroke="#e6e6e6" stroke-width="1" stroke-linecap="round" stroke-linejoin="round" /></svg>
<div style="left:1442px;top:19.5px;width:19.5px;height:19px;background:#2a2a2a;border-radius:0 4px 4px 0;"></div>
<svg style="left:1446.5px;top:24.5px;" width="10" height="10" viewBox="0 0 10 10"><path d="M1.8 3.7 L5 6.9 L8.2 3.7" fill="none" stroke="#d0d0d0" stroke-width="1.3" stroke-linecap="round" stroke-linejoin="round"/></svg>
<div style="left:649px;top:43px;width:110px;height:24.5px;background:rgba(46,46,46,0.76);border-radius:0 0 5px 0;"></div>
<div style="left:656px;top:46px;width:94.5px;height:18.5px;background:#565656;border-radius:4px;"></div>
<div style="left:656px;top:46px;width:18.3px;height:18.5px;background:#4772b3;border-radius:4px 0 0 4px;"></div>
<svg style="left:658px;top:48px;" width="14.5" height="14.5" viewBox="0 0 16 16"><rect x="1.6" y="1.6" width="12.8" height="12.8" rx="0" fill="none" stroke="#ffffff" stroke-width="1.5" stroke-dasharray="2.6 1.65"/></svg>
<svg style="left:677px;top:48px;" width="14.5" height="14.5" viewBox="0 0 16 16"><path d="M1 5.5 H5.5 V1 H15 V10.5 H10.5 V15 H1 Z" fill="#c6c6c6" /></svg>
<svg style="left:696px;top:48px;" width="14.5" height="14.5" viewBox="0 0 16 16"><path d="M5.5 1 H15 V10.5 H10.5 V5.5 H5.5 Z" fill="#c6c6c6" /><path d="M1.7 6.2 H9.8 V14.3 H1.7 Z" fill="none" stroke="#c6c6c6" stroke-width="1.4" stroke-linecap="round" stroke-linejoin="round" stroke-dasharray="2.2 1.85"/></svg>
<svg style="left:715px;top:48px;" width="14.5" height="14.5" viewBox="0 0 16 16"><path d="M5.5 1 H15 V10.5 H10.5 V5.5 H5.5 Z" fill="#c6c6c6" /><path d="M1 5.5 H5.5 V10.5 H10.5 V15 H1 Z" fill="#c6c6c6" /></svg>
<svg style="left:734px;top:48px;" width="14.5" height="14.5" viewBox="0 0 16 16"><rect x="1.7" y="1.7" width="12.6" height="12.6" rx="0" fill="none" stroke="#c6c6c6" stroke-width="1.4" stroke-dasharray="2.4 1.8"/><rect x="5" y="5" width="6" height="6" rx="0" fill="#c6c6c6" /></svg>
<div style="left:674.3px;top:46px;width:1px;height:18.5px;background:#484848;"></div>
<div style="left:693.3px;top:46px;width:1px;height:18.5px;background:#484848;"></div>
<div style="left:712.3px;top:46px;width:1px;height:18.5px;background:#484848;"></div>
<div style="left:731.3px;top:46px;width:1px;height:18.5px;background:#484848;"></div>
<div style="left:1315.5px;top:43px;width:153px;height:24.5px;background:rgba(46,46,46,0.76);border-radius:0 0 0 5px;"></div>
<svg style="left:1323.5px;top:47.5px;" width="15" height="15" viewBox="0 0 16 16"><path d="M8 0.5 V15.5" fill="none" stroke="#b8b8b8" stroke-width="1" stroke-linecap="round" stroke-linejoin="round" stroke-dasharray="1.6 1.4"/><path d="M6 3.2 Q2.8 0.8 1.6 4 Q1.6 6.6 4.2 7.6 Q1.4 9.2 2.4 12.4 Q4.2 14.8 6 12.4 M10 3.2 Q13.2 0.8 14.4 4 Q14.4 6.6 11.8 7.6 Q14.6 9.2 13.6 12.4 Q11.8 14.8 10 12.4" fill="none" stroke="#b8b8b8" stroke-width="1.1" stroke-linecap="round" stroke-linejoin="round" /></svg>
<div style="left:1343.5px;top:46px;width:17.5px;height:18.5px;background:#5a5a5a;border-radius:4px;"></div>
<div style="left:1343.5px;top:47px;height:16px;line-height:16px;font-size:12px;color:#e6e6e6;white-space:nowrap;width:17.5px;text-align:center;">X</div>
<div style="left:1367.5px;top:46px;width:94.5px;height:18.5px;background:#2a2a2a;border-radius:4px;"></div>
<div style="left:1373.5px;top:47px;height:16px;line-height:16px;font-size:12px;color:#e6e6e6;white-space:nowrap;">Pose Options</div>
<svg style="left:1449.5px;top:50.5px;" width="10" height="10" viewBox="0 0 10 10"><path d="M1.8 3.7 L5 6.9 L8.2 3.7" fill="none" stroke="#d0d0d0" stroke-width="1.3" stroke-linecap="round" stroke-linejoin="round"/></svg>
<div style="left:656px;top:77px;width:40.5px;height:68px;background:#2b2b2b;border-radius:4px;"></div>
<div style="left:656px;top:110.5px;width:40.5px;height:1px;background:#3a3a3a;"></div>
<div style="left:656px;top:152px;width:40.5px;height:138px;background:#2b2b2b;border-radius:4px;"></div>
<div style="left:656px;top:186px;width:40.5px;height:1px;background:#3a3a3a;"></div>
<div style="left:656px;top:220.5px;width:40.5px;height:1px;background:#3a3a3a;"></div>
<div style="left:656px;top:255px;width:40.5px;height:1px;background:#3a3a3a;"></div>
<div style="left:656px;top:297px;width:40.5px;height:68px;background:#2b2b2b;border-radius:4px;"></div>
<div style="left:656px;top:330.5px;width:40.5px;height:1px;background:#3a3a3a;"></div>
<div style="left:656px;top:372px;width:40.5px;height:33px;background:#2b2b2b;border-radius:4px;"></div>
<div style="left:656px;top:77px;width:40.5px;height:34px;background:#4772b3;border-radius:4px 4px 0 0;"></div>
<svg style="left:663.25px;top:81px;" width="26" height="26" viewBox="0 0 24 24"><rect x="1" y="1" width="21" height="21" fill="none" stroke="#f0b030" stroke-width="1.3" stroke-dasharray="4.2 2.2"/><path d="M9 6.5 L19 12.5 L14.3 13.5 L12.5 18.5 Z" fill="#ffffff"/></svg>
<svg style="left:692px;top:106px;" width="4" height="4" viewBox="0 0 4 4"><path d="M4 0 V4 H0 Z" fill="#9ab0d0"/></svg>
<svg style="left:663.25px;top:115px;" width="26" height="26" viewBox="0 0 24 24"><circle cx="12" cy="12" r="10" fill="none" stroke="#ffffff" stroke-width="1.2"/><circle cx="12" cy="12" r="10" fill="none" stroke="#d04030" stroke-width="1.2" stroke-dasharray="3.9 3.95"/><path d="M12 3.5 V9 M12 15 V20.5 M3.5 12 H9 M15 12 H20.5" stroke="#8a8a8a" stroke-width="1.5" fill="none"/></svg>
<svg style="left:663.25px;top:156px;" width="26" height="26" viewBox="0 0 24 24"><path d="M12 4 V9.5 M12 14.5 V20 M4 12 H9.5 M14.5 12 H20" stroke="#e2e2e2" stroke-width="1.2" stroke-dasharray="1.8 1.5" fill="none"/><path d="M12 1.2 L14.6 5 H9.4 Z M12 22.8 L14.6 19 H9.4 Z M1.2 12 L5 9.4 V14.6 Z M22.8 12 L19 9.4 V14.6 Z" fill="#e2e2e2"/></svg>
<svg style="left:663.25px;top:190px;" width="26" height="26" viewBox="0 0 24 24"><path d="M4.2 8.6 A8.6 8.6 0 0 1 19.8 8.6 M19.8 15.4 A8.6 8.6 0 0 1 4.2 15.4" stroke="#e2e2e2" stroke-width="1.2" fill="none"/><path d="M1.2 9.4 H7 L4.1 13.6 Z M22.8 14.6 H17 L19.9 10.4 Z" fill="#e2e2e2"/><path d="M12 8.4 L15.6 12 L12 15.6 L8.4 12 Z" fill="#b4b4b4"/></svg>
<svg style="left:663.25px;top:225px;" width="26" height="26" viewBox="0 0 24 24"><path d="M7.5 3.5 H20.5 V16.5 H7.5 Z" fill="none" stroke="#bdbdbd" stroke-width="1.1"/><rect x="3" y="11.5" width="10" height="10" fill="#f0f0f0"/><path d="M13.5 10.5 L18.5 5.5 M14.8 5 H19 V9.2" stroke="#e2e2e2" stroke-width="1.3" fill="none"/></svg>
<svg style="left:692px;top:251px;" width="4" height="4" viewBox="0 0 4 4"><path d="M4 0 V4 H0 Z" fill="#8a8a8a"/></svg>
<svg style="left:663.25px;top:260px;" width="26" height="26" viewBox="0 0 24 24"><circle cx="12" cy="12" r="8.6" fill="none" stroke="#e2e2e2" stroke-width="1.2" stroke-dasharray="9.5 4" stroke-dashoffset="-2"/><rect x="7.6" y="7.6" width="8.8" height="8.8" fill="#f0f0f0"/><path d="M12 1 L14.4 4.6 H9.6 Z M12 23 L14.4 19.4 H9.6 Z M1 12 L4.6 9.6 V14.4 Z M23 12 L19.4 9.6 V14.4 Z" fill="#e2e2e2"/></svg>
<svg style="left:663.25px;top:301px;" width="26" height="26" viewBox="0 0 24 24"><path d="M3 15.5 L14.5 4 L18 7.5 L6.5 19 L2.2 20.2 Z" fill="none" stroke="#e2e2e2" stroke-width="1.3" stroke-linejoin="round"/><path d="M14.5 4 L16.3 2.2 L19.8 5.7 L18 7.5 Z" fill="#e2e2e2"/><path d="M2.2 20.2 L3 16.5 L6 19.2 Z" fill="#e2e2e2"/><path d="M5 22 Q9.5 15.5 13.5 19 Q17 22 21.5 18" stroke="#a4d4c0" stroke-width="1.3" fill="none"/></svg>
<svg style="left:692px;top:326px;" width="4" height="4" viewBox="0 0 4 4"><path d="M4 0 V4 H0 Z" fill="#8a8a8a"/></svg>
<svg style="left:663.25px;top:335px;" width="26" height="26" viewBox="0 0 24 24"><path d="M7.5 19 V9.5 A11 11 0 0 1 19.5 19 Z" fill="#a4d4c0"/><path d="M7.5 9.5 A11 11 0 0 1 19.5 19" fill="none" stroke="#2b2b2b" stroke-width="0.8"/><path d="M5.2 1.5 V19.5" stroke="#f0f0f0" stroke-width="3"/><path d="M3 21 H21.5" stroke="#f0f0f0" stroke-width="2.6"/><path d="M3 1.8 H8.5" stroke="#f0f0f0" stroke-width="1.4"/><path d="M6.5 5 H8.5 M6.5 8 H8 M6.5 11 H8.5 M6.5 14 H8 M6.5 17 H8.5 M9 20 V22.5 M12 20 V22.5 M15 20 V22.5 M18 20 V22.5" stroke="#2b2b2b" stroke-width="0.9" fill="none"/></svg>
<svg style="left:663.25px;top:376px;" width="26" height="26" viewBox="0 0 24 24"><path d="M3 7.5 Q6 14 12 16 Q18 14 21 7.5" stroke="#e2e2e2" stroke-width="1.1" stroke-dasharray="1.8 1.8" fill="none"/><path d="M12 12.6 L15 15.6 L12 18.6 L9 15.6 Z" fill="#a4d4c0"/><circle cx="3" cy="6.5" r="1.3" fill="#e2e2e2"/><circle cx="21" cy="6.5" r="1.3" fill="#e2e2e2"/></svg>
<svg style="left:692px;top:400px;" width="4" height="4" viewBox="0 0 4 4"><path d="M4 0 V4 H0 Z" fill="#8a8a8a"/></svg>
<div style="left:714px;top:76px;height:16px;line-height:16px;font-size:12.1px;color:#ffffff;white-space:nowrap;text-shadow:0 0 2px #000,0 1px 1px rgba(0,0,0,.8),0 0 1px #000;">Right Orthographic</div>
<div style="left:714px;top:94px;height:16px;line-height:16px;font-size:11.5px;color:#f0e020;white-space:nowrap;text-shadow:0 0 2px #000,0 1px 1px rgba(0,0,0,.8),0 0 1px #000;">(0) Armature : CTRL_Avatar_UpperBody</div>
<div style="left:714px;top:112px;height:16px;line-height:16px;font-size:12.1px;color:#ffffff;white-space:nowrap;text-shadow:0 0 2px #000,0 1px 1px rgba(0,0,0,.8),0 0 1px #000;">10 Centimeters</div>
<svg style="left:0px;top:0px;" width="1908" height="300" viewBox="0 0 1908 300"><path d="M1194.5 86 V150" stroke="#4a86e0" stroke-width="2"/><path d="M1162.5 118 H1226.5" stroke="#98c020" stroke-width="2"/><circle cx="1162.5" cy="118" r="7.6" fill="#a09c68" stroke="#a6c814" stroke-width="1.2"/><circle cx="1194.5" cy="150" r="7.6" fill="#7a96c0" stroke="#4a86e0" stroke-width="1.2"/><circle cx="1194.5" cy="86" r="8" fill="#4a86e0" /><text x="1194.5" y="89.8" font-size="10.5" text-anchor="middle" fill="#1a1a1a">Z</text><circle cx="1226.5" cy="118" r="8" fill="#98c020" /><text x="1226.5" y="121.8" font-size="10.5" text-anchor="middle" fill="#1a1a1a">Y</text><circle cx="1194.5" cy="118" r="8.4" fill="#e03844" /><text x="1194.5" y="121.8" font-size="10.5" text-anchor="middle" fill="#1a1a1a">X</text></svg>
<div style="left:1209.25px;top:159px;width:27px;height:27px;background:rgba(30,30,30,0.31);border-radius:14px;"></div>
<div style="left:1209.25px;top:188.5px;width:27px;height:27px;background:rgba(30,30,30,0.31);border-radius:14px;"></div>
<div style="left:1209.25px;top:219.5px;width:27px;height:27px;background:rgba(30,30,30,0.31);border-radius:14px;"></div>
<div style="left:1209.25px;top:249.5px;width:27px;height:27px;background:rgba(30,30,30,0.31);border-radius:14px;"></div>
<svg style="left:1212.75px;top:162.5px;" width="20" height="20" viewBox="0 0 20 20"><circle cx="11.6" cy="8" r="5.9" fill="#dedede"/><path d="M7.6 12.2 L2.6 17.2" stroke="#dedede" stroke-width="2.2" stroke-linecap="round"/><path d="M11.6 4.8 V11.2 M8.4 8 H14.8" stroke="#505050" stroke-width="1.2"/></svg>
<svg style="left:1212.75px;top:192px;" width="20" height="20" viewBox="0 0 20 20"><g fill="#dedede"><rect x="5.2" y="4.2" width="2.3" height="8" rx="1.15" transform="rotate(-12 6.3 10)"/><rect x="8" y="2" width="2.4" height="9" rx="1.2" transform="rotate(-3 9.2 9)"/><rect x="11" y="2.2" width="2.4" height="9" rx="1.2" transform="rotate(5 12.2 9)"/><rect x="13.8" y="4.4" width="2.3" height="8" rx="1.15" transform="rotate(14 15 10)"/><path d="M5.5 9.5 H16 Q16.5 15 14 17.5 H8.5 Q6 15.5 3 11.5 Q2.6 10 4.2 10.2 L6 12 Z"/></g></svg>
<svg style="left:1212.75px;top:223px;" width="20" height="20" viewBox="0 0 20 20"><path d="M3.2 8.2 A3 3 0 0 1 6.5 3.6 Q8 3.8 9 5 A3.6 3.6 0 1 1 13 9 H5 Z" fill="none" stroke="#dedede" stroke-width="1.3" stroke-linejoin="round"/><circle cx="6" cy="6.3" r="0.9" fill="#dedede"/><circle cx="12.6" cy="5.4" r="1.1" fill="#dedede"/><rect x="6" y="11.5" width="7" height="5.4" rx="1" fill="none" stroke="#dedede" stroke-width="1.3"/><path d="M3.6 12.6 V15.8 M3.6 14.2 H6" stroke="#dedede" stroke-width="1.2"/><path d="M14.6 14.2 L17.8 12.4 V16 Z" fill="none" stroke="#dedede" stroke-width="1.1"/></svg>
<svg style="left:1212.75px;top:253px;" width="20" height="20" viewBox="0 0 20 20"><path d="M2 2 H18 V18 H2 Z M2 7.3 H18 M2 12.6 H18 M7.3 2 V18 M12.6 2 V18" fill="none" stroke="#dedede" stroke-width="1.3"/></svg>
<div style="left:1441px;top:627px;width:14.5px;height:6px;background:rgba(60,60,60,0.45);border-radius:4px 4px 0 0;"></div>
<svg style="left:1443.8px;top:627.5px;" width="9" height="6" viewBox="0 0 9 6"><path d="M1 5 L4.5 1.5 L8 5" fill="none" stroke="#c8c8c8" stroke-width="1.1"/></svg>
<div style="left:1449px;top:70px;width:19.6px;height:539.5px;background:#181818;"></div>
<div style="left:1449px;top:72.5px;width:17.5px;height:41px;background:#303030;border-radius:0 4px 4px 0;border:1px solid #3a3a3a;border-left:none;"></div>
<div style="left:1466.5px;top:72.5px;width:41px;height:17.5px;line-height:17px;font-size:12px;color:#ffffff;text-align:center;transform-origin:0 0;transform:rotate(90deg);white-space:nowrap;">Item</div>
<div style="left:1449px;top:117.5px;width:17.5px;height:40px;background:#262626;border-radius:0 4px 4px 0;border:1px solid #3a3a3a;border-left:none;"></div>
<div style="left:1466.5px;top:117.5px;width:40px;height:17.5px;line-height:17px;font-size:12px;color:#d0d0d0;text-align:center;transform-origin:0 0;transform:rotate(90deg);white-space:nowrap;">Tool</div>
<div style="left:1449px;top:162px;width:17.5px;height:41px;background:#262626;border-radius:0 4px 4px 0;border:1px solid #3a3a3a;border-left:none;"></div>
<div style="left:1466.5px;top:162px;width:41px;height:17.5px;line-height:17px;font-size:12px;color:#d0d0d0;text-align:center;transform-origin:0 0;transform:rotate(90deg);white-space:nowrap;">View</div>
<div style="left:1253px;top:70.5px;width:189px;height:306px;background:#3d3d3d;border-radius:5px;"></div>
<svg style="left:1261px;top:78.5px;" width="10" height="10" viewBox="0 0 10 10"><path d="M1.6 3.6 L5 7 L8.4 3.6" fill="none" stroke="#d8d8d8" stroke-width="1.3" stroke-linecap="round" stroke-linejoin="round"/></svg>
<div style="left:1275px;top:75px;height:16px;line-height:16px;font-size:12px;color:#ffffff;white-space:nowrap;">Transform</div>
<svg style="left:1424.5px;top:81.5px;" width="8" height="3" viewBox="0 0 8 3"><rect x="0" y="0" width="1" height="1" fill="#777"/><rect x="0" y="2" width="1" height="1" fill="#777"/><rect x="2" y="0" width="1" height="1" fill="#777"/><rect x="2" y="2" width="1" height="1" fill="#777"/><rect x="4" y="0" width="1" height="1" fill="#777"/><rect x="4" y="2" width="1" height="1" fill="#777"/><rect x="6" y="0" width="1" height="1" fill="#777"/><rect x="6" y="2" width="1" height="1" fill="#777"/></svg>
<div style="left:1262px;top:105px;height:16px;line-height:16px;font-size:12px;color:#e0e0e0;white-space:nowrap;">Location:</div>
<div style="left:1262px;top:124px;width:130px;height:18.3px;background:#84752c;border-radius:4px 4px 0 0;"></div>
<div style="left:1277px;top:125.2px;height:16px;line-height:16px;font-size:12px;color:#f0f0f0;white-space:nowrap;">X</div>
<div style="left:1262px;top:125.2px;height:16px;line-height:16px;font-size:12px;color:#f0f0f0;white-space:nowrap;width:116.5px;text-align:right;">0 m</div>
<svg style="left:1410.5px;top:125.2px;" width="15.5" height="15.5" viewBox="0 0 16 16"><rect x="6" y="8" width="7.5" height="5.5" rx="1" fill="none" stroke="#d0d0d0" stroke-width="1.1" /><path d="M7.5 8 V5 A2.6 2.6 0 0 0 2.3 5 V6.5" fill="none" stroke="#d0d0d0" stroke-width="1.1" stroke-linecap="round" stroke-linejoin="round" /><rect x="9" y="10" width="1.6" height="1.6" rx="0" fill="#d0d0d0" /></svg>
<div style="left:1262px;top:143.5px;width:130px;height:18.3px;background:#84752c;border-radius:0;"></div>
<div style="left:1277px;top:144.7px;height:16px;line-height:16px;font-size:12px;color:#f0f0f0;white-space:nowrap;">Y</div>
<div style="left:1262px;top:144.7px;height:16px;line-height:16px;font-size:12px;color:#f0f0f0;white-space:nowrap;width:116.5px;text-align:right;">-1.4889 m</div>
<svg style="left:1410.5px;top:144.7px;" width="15.5" height="15.5" viewBox="0 0 16 16"><rect x="6" y="8" width="7.5" height="5.5" rx="1" fill="none" stroke="#d0d0d0" stroke-width="1.1" /><path d="M7.5 8 V5 A2.6 2.6 0 0 0 2.3 5 V6.5" fill="none" stroke="#d0d0d0" stroke-width="1.1" stroke-linecap="round" stroke-linejoin="round" /><rect x="9" y="10" width="1.6" height="1.6" rx="0" fill="#d0d0d0" /></svg>
<div style="left:1262px;top:163px;width:130px;height:18.3px;background:#84752c;border-radius:0 0 4px 4px;"></div>
<div style="left:1277px;top:164.2px;height:16px;line-height:16px;font-size:12px;color:#f0f0f0;white-space:nowrap;">Z</div>
<div style="left:1262px;top:164.2px;height:16px;line-height:16px;font-size:12px;color:#f0f0f0;white-space:nowrap;width:116.5px;text-align:right;">0 m</div>
<svg style="left:1410.5px;top:164.2px;" width="15.5" height="15.5" viewBox="0 0 16 16"><rect x="6" y="8" width="7.5" height="5.5" rx="1" fill="none" stroke="#d0d0d0" stroke-width="1.1" /><path d="M7.5 8 V5 A2.6 2.6 0 0 0 2.3 5 V6.5" fill="none" stroke="#d0d0d0" stroke-width="1.1" stroke-linecap="round" stroke-linejoin="round" /><rect x="9" y="10" width="1.6" height="1.6" rx="0" fill="#d0d0d0" /></svg>
<div style="left:1262px;top:187px;height:16px;line-height:16px;font-size:12px;color:#e0e0e0;white-space:nowrap;">Rotation:</div>
<div style="left:1262px;top:206px;width:130px;height:18.3px;background:#84752c;border-radius:4px 4px 0 0;"></div>
<div style="left:1277px;top:207.2px;height:16px;line-height:16px;font-size:12px;color:#f0f0f0;white-space:nowrap;">X</div>
<div style="left:1262px;top:207.2px;height:16px;line-height:16px;font-size:12px;color:#f0f0f0;white-space:nowrap;width:116.5px;text-align:right;">0°</div>
<svg style="left:1410.5px;top:207.2px;" width="15.5" height="15.5" viewBox="0 0 16 16"><rect x="6" y="8" width="7.5" height="5.5" rx="1" fill="none" stroke="#d0d0d0" stroke-width="1.1" /><path d="M7.5 8 V5 A2.6 2.6 0 0 0 2.3 5 V6.5" fill="none" stroke="#d0d0d0" stroke-width="1.1" stroke-linecap="round" stroke-linejoin="round" /><rect x="9" y="10" width="1.6" height="1.6" rx="0" fill="#d0d0d0" /></svg>
<div style="left:1262px;top:225.5px;width:130px;height:18.3px;background:#84752c;border-radius:0;"></div>
<div style="left:1277px;top:226.7px;height:16px;line-height:16px;font-size:12px;color:#f0f0f0;white-space:nowrap;">Y</div>
<div style="left:1262px;top:226.7px;height:16px;line-height:16px;font-size:12px;color:#f0f0f0;white-space:nowrap;width:116.5px;text-align:right;">0°</div>
<svg style="left:1410.5px;top:226.7px;" width="15.5" height="15.5" viewBox="0 0 16 16"><rect x="6" y="8" width="7.5" height="5.5" rx="1" fill="none" stroke="#d0d0d0" stroke-width="1.1" /><path d="M7.5 8 V5 A2.6 2.6 0 0 0 2.3 5 V6.5" fill="none" stroke="#d0d0d0" stroke-width="1.1" stroke-linecap="round" stroke-linejoin="round" /><rect x="9" y="10" width="1.6" height="1.6" rx="0" fill="#d0d0d0" /></svg>
<div style="left:1262px;top:245px;width:130px;height:18.3px;background:#84752c;border-radius:0 0 4px 4px;"></div>
<div style="left:1277px;top:246.2px;height:16px;line-height:16px;font-size:12px;color:#f0f0f0;white-space:nowrap;">Z</div>
<div style="left:1262px;top:246.2px;height:16px;line-height:16px;font-size:12px;color:#f0f0f0;white-space:nowrap;width:116.5px;text-align:right;">0°</div>
<svg style="left:1410.5px;top:246.2px;" width="15.5" height="15.5" viewBox="0 0 16 16"><rect x="6" y="8" width="7.5" height="5.5" rx="1" fill="none" stroke="#d0d0d0" stroke-width="1.1" /><path d="M7.5 8 V5 A2.6 2.6 0 0 0 2.3 5 V6.5" fill="none" stroke="#d0d0d0" stroke-width="1.1" stroke-linecap="round" stroke-linejoin="round" /><rect x="9" y="10" width="1.6" height="1.6" rx="0" fill="#d0d0d0" /></svg>
<div style="left:1262px;top:268.5px;width:171px;height:18px;background:#282828;border-radius:4px;border:1px solid #3a3a3a;"></div>
<div style="left:1268.5px;top:269.3px;height:16px;line-height:16px;font-size:12px;color:#e6e6e6;white-space:nowrap;">XYZ Euler</div>
<svg style="left:1422px;top:273px;" width="10" height="10" viewBox="0 0 10 10"><path d="M1.8 3.7 L5 6.9 L8.2 3.7" fill="none" stroke="#d8d8d8" stroke-width="1.3" stroke-linecap="round" stroke-linejoin="round"/></svg>
<div style="left:1262px;top:291px;height:16px;line-height:16px;font-size:12px;color:#e0e0e0;white-space:nowrap;">Scale:</div>
<div style="left:1262px;top:310px;width:130px;height:18.3px;background:#84752c;border-radius:4px 4px 0 0;"></div>
<div style="left:1277px;top:311.2px;height:16px;line-height:16px;font-size:12px;color:#f0f0f0;white-space:nowrap;">X</div>
<div style="left:1262px;top:311.2px;height:16px;line-height:16px;font-size:12px;color:#f0f0f0;white-space:nowrap;width:116.5px;text-align:right;">1.000</div>
<svg style="left:1410.5px;top:311.2px;" width="15.5" height="15.5" viewBox="0 0 16 16"><rect x="6" y="8" width="7.5" height="5.5" rx="1" fill="none" stroke="#d0d0d0" stroke-width="1.1" /><path d="M7.5 8 V5 A2.6 2.6 0 0 0 2.3 5 V6.5" fill="none" stroke="#d0d0d0" stroke-width="1.1" stroke-linecap="round" stroke-linejoin="round" /><rect x="9" y="10" width="1.6" height="1.6" rx="0" fill="#d0d0d0" /></svg>
<div style="left:1262px;top:329.5px;width:130px;height:18.3px;background:#84752c;border-radius:0;"></div>
<div style="left:1277px;top:330.7px;height:16px;line-height:16px;font-size:12px;color:#f0f0f0;white-space:nowrap;">Y</div>
<div style="left:1262px;top:330.7px;height:16px;line-height:16px;font-size:12px;color:#f0f0f0;white-space:nowrap;width:116.5px;text-align:right;">1.000</div>
<svg style="left:1410.5px;top:330.7px;" width="15.5" height="15.5" viewBox="0 0 16 16"><rect x="6" y="8" width="7.5" height="5.5" rx="1" fill="none" stroke="#d0d0d0" stroke-width="1.1" /><path d="M7.5 8 V5 A2.6 2.6 0 0 0 2.3 5 V6.5" fill="none" stroke="#d0d0d0" stroke-width="1.1" stroke-linecap="round" stroke-linejoin="round" /><rect x="9" y="10" width="1.6" height="1.6" rx="0" fill="#d0d0d0" /></svg>
<div style="left:1262px;top:349px;width:130px;height:18.3px;background:#84752c;border-radius:0 0 4px 4px;"></div>
<div style="left:1277px;top:350.2px;height:16px;line-height:16px;font-size:12px;color:#f0f0f0;white-space:nowrap;">Z</div>
<div style="left:1262px;top:350.2px;height:16px;line-height:16px;font-size:12px;color:#f0f0f0;white-space:nowrap;width:116.5px;text-align:right;">1.000</div>
<svg style="left:1410.5px;top:350.2px;" width="15.5" height="15.5" viewBox="0 0 16 16"><rect x="6" y="8" width="7.5" height="5.5" rx="1" fill="none" stroke="#d0d0d0" stroke-width="1.1" /><path d="M7.5 8 V5 A2.6 2.6 0 0 0 2.3 5 V6.5" fill="none" stroke="#d0d0d0" stroke-width="1.1" stroke-linecap="round" stroke-linejoin="round" /><rect x="9" y="10" width="1.6" height="1.6" rx="0" fill="#d0d0d0" /></svg>
<div style="left:1253px;top:380px;width:189px;height:184.5px;background:#3d3d3d;border-radius:5px;"></div>
<svg style="left:1261px;top:387.5px;" width="10" height="10" viewBox="0 0 10 10"><path d="M1.6 3.6 L5 7 L8.4 3.6" fill="none" stroke="#d8d8d8" stroke-width="1.3" stroke-linecap="round" stroke-linejoin="round"/></svg>
<div style="left:1275px;top:384px;height:16px;line-height:16px;font-size:12px;color:#ffffff;white-space:nowrap;">Properties</div>
<svg style="left:1424.5px;top:390.5px;" width="8" height="3" viewBox="0 0 8 3"><rect x="0" y="0" width="1" height="1" fill="#777"/><rect x="0" y="2" width="1" height="1" fill="#777"/><rect x="2" y="0" width="1" height="1" fill="#777"/><rect x="2" y="2" width="1" height="1" fill="#777"/><rect x="4" y="0" width="1" height="1" fill="#777"/><rect x="4" y="2" width="1" height="1" fill="#777"/><rect x="6" y="0" width="1" height="1" fill="#777"/><rect x="6" y="2" width="1" height="1" fill="#777"/></svg>
<div style="left:1262px;top:414px;height:16px;line-height:16px;font-size:12px;color:#e0e0e0;white-space:nowrap;">FK &gt; IK Ar...</div>
<div style="left:1336px;top:413px;width:97px;height:18.3px;background:#84752c;border-radius:4px;"></div>
<div style="left:1336px;top:414.2px;height:16px;line-height:16px;font-size:12px;color:#f0f0f0;white-space:nowrap;width:97px;text-align:center;">0.000</div>
<div style="left:1262px;top:439px;height:16px;line-height:16px;font-size:12px;color:#e0e0e0;white-space:nowrap;">FK &gt; IK Ar...</div>
<div style="left:1336px;top:438px;width:97px;height:18.3px;background:#84752c;border-radius:4px;"></div>
<div style="left:1336px;top:439.2px;height:16px;line-height:16px;font-size:12px;color:#f0f0f0;white-space:nowrap;width:97px;text-align:center;">0.000</div>
<div style="left:1262px;top:464px;height:16px;line-height:16px;font-size:12px;color:#e0e0e0;white-space:nowrap;">FK &gt; IK Le...</div>
<div style="left:1336px;top:463px;width:97px;height:18.3px;background:#84752c;border-radius:4px;"></div>
<div style="left:1336px;top:464.2px;height:16px;line-height:16px;font-size:12px;color:#f0f0f0;white-space:nowrap;width:97px;text-align:center;">1.000</div>
<div style="left:1262px;top:489px;height:16px;line-height:16px;font-size:12px;color:#e0e0e0;white-space:nowrap;">FK &gt; IK Le...</div>
<div style="left:1336px;top:488px;width:97px;height:18.3px;background:#84752c;border-radius:4px;"></div>
<div style="left:1336px;top:489.2px;height:16px;line-height:16px;font-size:12px;color:#f0f0f0;white-space:nowrap;width:97px;text-align:center;">1.000</div>
<div style="left:1264.5px;top:514px;height:16px;line-height:16px;font-size:12px;color:#e0e0e0;white-space:nowrap;letter-spacing:0.19px;">IsoRot Ar...</div>
<div style="left:1336px;top:513px;width:97px;height:18.3px;background:#84752c;border-radius:4px;"></div>
<div style="left:1336px;top:514.2px;height:16px;line-height:16px;font-size:12px;color:#f0f0f0;white-space:nowrap;width:97px;text-align:center;">1.000</div>
<div style="left:1264.5px;top:539px;height:16px;line-height:16px;font-size:12px;color:#e0e0e0;white-space:nowrap;letter-spacing:0.19px;">IsoRot Ar...</div>
<div style="left:1336px;top:538px;width:97px;height:18.3px;background:#84752c;border-radius:4px;"></div>
<div style="left:1336px;top:539.2px;height:16px;line-height:16px;font-size:12px;color:#f0f0f0;white-space:nowrap;width:97px;text-align:center;">1.000</div>
<div style="left:1472px;top:16.6px;width:436px;height:292.9px;background:#282828;border-radius:5px;border:1px solid #353535;overflow:hidden;"></div>
<div style="left:1472px;top:16.6px;width:436px;height:26.9px;background:#303030;border-radius:5px 5px 0 0;"></div>
<div style="left:1473px;top:64px;width:434px;height:20px;background:#2b2b2b;"></div>
<div style="left:1473px;top:104px;width:434px;height:20px;background:#2b2b2b;"></div>
<div style="left:1473px;top:144px;width:434px;height:20px;background:#2b2b2b;"></div>
<div style="left:1473px;top:184px;width:434px;height:20px;background:#2b2b2b;"></div>
<div style="left:1473px;top:224px;width:434px;height:20px;background:#2b2b2b;"></div>
<div style="left:1473px;top:264px;width:434px;height:20px;background:#2b2b2b;"></div>
<div style="left:1473px;top:304px;width:434px;height:4.5px;background:#2b2b2b;"></div>
<div style="left:1480px;top:19.5px;width:31.5px;height:19px;background:#282828;border-radius:4px;border:1px solid #3c3c3c;"></div>
<svg style="left:1483px;top:21px;" width="15" height="15" viewBox="0 0 16 16"><rect x="1" y="1.5" width="4" height="3" rx="0" fill="#e6e6e6" /><rect x="7" y="5" width="7" height="3" rx="0" fill="#e6e6e6" /><rect x="7" y="10.5" width="7" height="3" rx="0" fill="#e6e6e6" /><path d="M3 4.5 V12 H7 M3 6.5 H7" fill="none" stroke="#e6e6e6" stroke-width="1.1" stroke-linecap="round" stroke-linejoin="round" /></svg>
<svg style="left:1500px;top:24.5px;" width="10" height="10" viewBox="0 0 10 10"><path d="M1.8 3.7 L5 6.9 L8.2 3.7" fill="none" stroke="#d0d0d0" stroke-width="1.3" stroke-linecap="round" stroke-linejoin="round"/></svg>
<div style="left:1517px;top:19.5px;width:31.5px;height:19px;background:#282828;border-radius:4px;border:1px solid #3c3c3c;"></div>
<svg style="left:1520px;top:21px;" width="15" height="15" viewBox="0 0 16 16"><rect x="5" y="1.5" width="9.5" height="9.5" rx="1" fill="#e6e6e6" /><path d="M3 4 V12.5 H11.5 M1 6.5 V14.8 H9" fill="none" stroke="#e6e6e6" stroke-width="1.1" stroke-linecap="round" stroke-linejoin="round" /><path d="M6 9.5 L8.5 6 L10 8 L11.5 7 L13.5 9.5 Z" fill="#282828" /></svg>
<svg style="left:1537px;top:24.5px;" width="10" height="10" viewBox="0 0 10 10"><path d="M1.8 3.7 L5 6.9 L8.2 3.7" fill="none" stroke="#d0d0d0" stroke-width="1.3" stroke-linecap="round" stroke-linejoin="round"/></svg>
<div style="left:1622px;top:19.5px;width:118.5px;height:19px;background:#1d1d1d;border-radius:4px;border:1px solid #3c3c3c;"></div>
<svg style="left:1626px;top:21.5px;" width="14.5" height="14.5" viewBox="0 0 16 16"><circle cx="9.5" cy="6.5" r="4.3" fill="none" stroke="#e0e0e0" stroke-width="1.4"/><path d="M6.3 9.7 L1.8 14.2" fill="none" stroke="#e0e0e0" stroke-width="1.6" stroke-linecap="round" stroke-linejoin="round" /></svg>
<div style="left:1648px;top:21px;height:16px;line-height:16px;font-size:12px;color:#7a7a7a;white-space:nowrap;">Search</div>
<div style="left:1849px;top:19.5px;width:31.5px;height:19px;background:#282828;border-radius:4px;border:1px solid #3c3c3c;"></div>
<svg style="left:1852px;top:21.5px;" width="14.5" height="14.5" viewBox="0 0 16 16"><path d="M1.5 2 H14.5 L9.5 8 V14 L6.5 12 V8 Z" fill="none" stroke="#e6e6e6" stroke-width="1.2" stroke-linecap="round" stroke-linejoin="round" /></svg>
<svg style="left:1869.5px;top:24.5px;" width="10" height="10" viewBox="0 0 10 10"><path d="M1.8 3.7 L5 6.9 L8.2 3.7" fill="none" stroke="#d0d0d0" stroke-width="1.3" stroke-linecap="round" stroke-linejoin="round"/></svg>
<div style="left:1886px;top:19.5px;width:19px;height:19px;background:#545454;border-radius:4px;border:1px solid #3c3c3c;"></div>
<svg style="left:1888px;top:21.5px;" width="15" height="15" viewBox="0 0 16 16"><rect x="1.5" y="5" width="10" height="2.6" rx="0" fill="none" stroke="#c8c8c8" stroke-width="1" /><rect x="2.3" y="7.6" width="8.4" height="6" rx="0" fill="none" stroke="#c8c8c8" stroke-width="1" /><path d="M12 1 V6 M9.5 3.5 H14.5" fill="none" stroke="#c8c8c8" stroke-width="1.3" stroke-linecap="round" stroke-linejoin="round" /></svg>
<div style="left:1492.5px;top:44.5px;width:19.5px;height:18px;background:#5a5a5a;border-radius:4px;"></div>
<svg style="left:1494.5px;top:46px;" width="15.5" height="15.5" viewBox="0 0 16 16"><rect x="1.5" y="2" width="13" height="3.6" rx="0.6" fill="#f0f0f0" /><rect x="2.5" y="6.6" width="11" height="7.6" rx="0.8" fill="#f0f0f0" /><rect x="6" y="8.6" width="4" height="1.6" rx="0.5" fill="#282828" /></svg>
<div style="left:1516.3px;top:46px;height:16px;line-height:16px;font-size:12px;color:#e6e6e6;white-space:nowrap;letter-spacing:-0.14px;">Scene Collection</div>
<svg style="left:1497px;top:69.5px;" width="10" height="10" viewBox="0 0 10 10"><path d="M1.4 3.5 L5 7.1 L8.6 3.5" fill="none" stroke="#d0d0d0" stroke-width="1.3" stroke-linecap="round" stroke-linejoin="round"/></svg>
<svg style="left:1514px;top:65.2px;" width="15.5" height="15.5" viewBox="0 0 16 16"><rect x="1.5" y="2" width="13" height="3.6" rx="0.6" fill="#e6e6e6" /><rect x="2.5" y="6.6" width="11" height="7.6" rx="0.8" fill="#e6e6e6" /><rect x="6" y="8.6" width="4" height="1.6" rx="0.5" fill="#282828" /></svg>
<div style="left:1536px;top:66px;height:16px;line-height:16px;font-size:12px;color:#e6e6e6;white-space:nowrap;">Avatar</div>
<svg style="left:1847.5px;top:66.3px;" width="13" height="13" viewBox="0 0 16 16"><rect x="1.5" y="1.5" width="13" height="13" rx="1.5" fill="#e8e8e8" /><path d="M4.2 8.2 L7 11 L12 4.8" fill="none" stroke="#1d1d1d" stroke-width="2" stroke-linecap="round" stroke-linejoin="round" /></svg>
<svg style="left:1867.5px;top:65.6px;" width="14" height="14" viewBox="0 0 16 16"><path d="M1 8 Q8 0.8 15 8 Q8 15.2 1 8 Z" fill="none" stroke="#f0f0f0" stroke-width="1.5" stroke-linecap="round" stroke-linejoin="round" /><circle cx="8" cy="8" r="2.6" fill="#f0f0f0"/></svg>
<svg style="left:1886.5px;top:64.4px;" width="16.5" height="16.5" viewBox="0 0 16 16"><path d="M2 4.5 H4.5 L5.5 2.8 H10.5 L11.5 4.5 H14 V13.5 H2 Z" fill="none" stroke="#e8e8e8" stroke-width="1.3" stroke-linecap="round" stroke-linejoin="round" /><circle cx="8" cy="8.8" r="2.9" fill="none" stroke="#e8e8e8" stroke-width="1.3"/><circle cx="8" cy="8.8" r="1" fill="#e8e8e8"/></svg>
<svg style="left:1517.5px;top:89px;" width="10" height="10" viewBox="0 0 10 10"><path d="M3.2 1.4 L6.8 5 L3.2 8.6" fill="none" stroke="#d0d0d0" stroke-width="1.3" stroke-linecap="round" stroke-linejoin="round"/></svg>
<svg style="left:1534px;top:85.2px;" width="15.5" height="15.5" viewBox="0 0 16 16"><rect x="1.5" y="2" width="13" height="3.6" rx="0.6" fill="#e6e6e6" /><rect x="2.5" y="6.6" width="11" height="7.6" rx="0.8" fill="#e6e6e6" /><rect x="6" y="8.6" width="4" height="1.6" rx="0.5" fill="#282828" /></svg>
<div style="left:1556.3px;top:86px;height:16px;line-height:16px;font-size:12px;color:#e6e6e6;white-space:nowrap;letter-spacing:-0.4px;">Avatar_ShapeB</div>
<svg style="left:1657.5px;top:86px;" width="15.5" height="15.5" viewBox="0 0 16 16"><path d="M2.6 3.2 H13.4 L8 13.2 Z" fill="none" stroke="#c9a04e" stroke-width="2.9" stroke-linecap="round" stroke-linejoin="round" /></svg>
<div style="left:1671px;top:90.5px;height:16px;line-height:16px;font-size:8.5px;color:#d8d8d8;white-space:nowrap;">8</div>
<svg style="left:1847.5px;top:86.3px;" width="13" height="13" viewBox="0 0 16 16"><rect x="1.5" y="1.5" width="13" height="13" rx="1.5" fill="#e8e8e8" /><path d="M4.2 8.2 L7 11 L12 4.8" fill="none" stroke="#1d1d1d" stroke-width="2" stroke-linecap="round" stroke-linejoin="round" /></svg>
<svg style="left:1867.5px;top:85.6px;" width="14" height="14" viewBox="0 0 16 16"><path d="M1 8 Q8 0.8 15 8 Q8 15.2 1 8 Z" fill="none" stroke="#f0f0f0" stroke-width="1.5" stroke-linecap="round" stroke-linejoin="round" /><circle cx="8" cy="8" r="2.6" fill="#f0f0f0"/></svg>
<svg style="left:1886.5px;top:84.4px;" width="16.5" height="16.5" viewBox="0 0 16 16"><path d="M2 4.5 H4.5 L5.5 2.8 H10.5 L11.5 4.5 H14 V13.5 H2 Z" fill="none" stroke="#e8e8e8" stroke-width="1.3" stroke-linecap="round" stroke-linejoin="round" /><circle cx="8" cy="8.8" r="2.9" fill="none" stroke="#e8e8e8" stroke-width="1.3"/><circle cx="8" cy="8.8" r="1" fill="#e8e8e8"/></svg>
<svg style="left:1517.5px;top:109px;" width="10" height="10" viewBox="0 0 10 10"><path d="M3.2 1.4 L6.8 5 L3.2 8.6" fill="none" stroke="#5a5a5a" stroke-width="1.3" stroke-linecap="round" stroke-linejoin="round"/></svg>
<svg style="left:1534px;top:105.2px;" width="15.5" height="15.5" viewBox="0 0 16 16"><rect x="1.5" y="2" width="13" height="3.6" rx="0.6" fill="#6e6e6e" /><rect x="2.5" y="6.6" width="11" height="7.6" rx="0.8" fill="#6e6e6e" /><rect x="6" y="8.6" width="4" height="1.6" rx="0.5" fill="#282828" /></svg>
<div style="left:1556.3px;top:106px;height:16px;line-height:16px;font-size:12px;color:#8a8a8a;white-space:nowrap;letter-spacing:-0.4px;">Avatar_ShapeA</div>
<svg style="left:1658.5px;top:106px;" width="15.5" height="15.5" viewBox="0 0 16 16"><path d="M2.6 3.2 H13.4 L8 13.2 Z" fill="none" stroke="#80663a" stroke-width="2.9" stroke-linecap="round" stroke-linejoin="round" /></svg>
<div style="left:1672px;top:110.5px;height:16px;line-height:16px;font-size:8.5px;color:#d8d8d8;white-space:nowrap;">8</div>
<svg style="left:1847.5px;top:106.3px;" width="13" height="13" viewBox="0 0 16 16"><rect x="1.5" y="1.5" width="13" height="13" rx="1.5" fill="#e8e8e8" /><path d="M4.2 8.2 L7 11 L12 4.8" fill="none" stroke="#1d1d1d" stroke-width="2" stroke-linecap="round" stroke-linejoin="round" /></svg>
<svg style="left:1867.5px;top:106px;" width="15" height="15" viewBox="0 0 16 16"><path d="M2 7.5 Q8 13 14 7.5" fill="none" stroke="#4a4a4a" stroke-width="1.1" stroke-linecap="round" stroke-linejoin="round" /></svg>
<svg style="left:1886.5px;top:104.4px;" width="16.5" height="16.5" viewBox="0 0 16 16"><path d="M2 4.5 H4.5 L5.5 2.8 H10.5 L11.5 4.5 H14 V13.5 H2 Z" fill="none" stroke="#e8e8e8" stroke-width="1.3" stroke-linecap="round" stroke-linejoin="round" /><circle cx="8" cy="8.8" r="2.9" fill="none" stroke="#e8e8e8" stroke-width="1.3"/><circle cx="8" cy="8.8" r="1" fill="#e8e8e8"/></svg>
<svg style="left:1474px;top:126px;" width="15.5" height="15.5" viewBox="0 0 16 16"><rect x="0.8" y="2.2" width="3.4" height="3.4" rx="0" fill="#f0f0f0" /><circle cx="9.3" cy="2.6" r="1.35" fill="#f0f0f0"/><path d="M5.8 5.6 Q9.3 4.4 14 5.6 M9.3 4.6 V9 M9.3 9 Q7.5 11 5.8 15 M9.3 9 Q11.3 11 13 15" fill="none" stroke="#f0f0f0" stroke-width="1.05" stroke-linecap="round" stroke-linejoin="round" /></svg>
<div style="left:1501px;top:88px;width:1px;height:50px;background:#555555;"></div>
<svg style="left:1517.5px;top:129px;" width="10" height="10" viewBox="0 0 10 10"><path d="M3.2 1.4 L6.8 5 L3.2 8.6" fill="none" stroke="#d0d0d0" stroke-width="1.3" stroke-linecap="round" stroke-linejoin="round"/></svg>
<div style="left:1532px;top:124.5px;width:20px;height:18.5px;background:#5c5c5c;border-radius:4px;"></div>
<svg style="left:1534px;top:126px;" width="16" height="16" viewBox="0 0 16 16"><circle cx="8" cy="2.8" r="2" fill="#d4a04c"/><path d="M2 5.5 L8 7 L14 5.5 M8 7 V9.5 M8 9.5 L4.5 14.5 M8 9.5 L11.5 14.5" fill="none" stroke="#d4a04c" stroke-width="2.2" stroke-linecap="round" stroke-linejoin="round" /></svg>
<div style="left:1556px;top:126px;height:16px;line-height:16px;font-size:12px;color:#f5b030;white-space:nowrap;">Armature</div>
<svg style="left:1627.5px;top:126px;" width="15" height="15" viewBox="0 0 16 16"><path d="M1.5 3 H6 L9.5 12 H14 M11.5 9.5 L14 12 L11.5 14.5" fill="none" stroke="#d0d0d0" stroke-width="1.2" stroke-linecap="round" stroke-linejoin="round" /></svg>
<div style="left:1645px;top:124.5px;width:20px;height:18.5px;background:#5c5c5c;border-radius:4px;"></div>
<svg style="left:1647px;top:126px;" width="16" height="16" viewBox="0 0 16 16"><circle cx="8.2" cy="3" r="1.5" fill="#2a5c9c"/><path d="M2.5 4 L6 6.5 L10.5 6 L13.5 8.5 M7.5 6.5 L8.5 10 L5 14 M8.5 10 L13 12.5" fill="none" stroke="#2a5c9c" stroke-width="1.2" stroke-linecap="round" stroke-linejoin="round" /></svg>
<svg style="left:1667.5px;top:126px;" width="15.5" height="15.5" viewBox="0 0 16 16"><rect x="0.8" y="2.2" width="3.4" height="3.4" rx="0" fill="#3a78c0" /><circle cx="9.3" cy="2.6" r="1.35" fill="#3a78c0"/><path d="M5.8 5.6 Q9.3 4.4 14 5.6 M9.3 4.6 V9 M9.3 9 Q7.5 11 5.8 15 M9.3 9 Q11.3 11 13 15" fill="none" stroke="#3a78c0" stroke-width="1.05" stroke-linecap="round" stroke-linejoin="round" /></svg>
<svg style="left:1688px;top:126px;" width="15.5" height="15.5" viewBox="0 0 16 16"><path d="M2.6 3.2 H13.4 L8 13.2 Z" fill="none" stroke="#c9a04e" stroke-width="2.9" stroke-linecap="round" stroke-linejoin="round" /></svg>
<div style="left:1695px;top:131px;height:16px;line-height:16px;font-size:8.5px;color:#d8d8d8;white-space:nowrap;">16</div>
<svg style="left:1867.5px;top:125.6px;" width="14" height="14" viewBox="0 0 16 16"><path d="M1 8 Q8 0.8 15 8 Q8 15.2 1 8 Z" fill="none" stroke="#f0f0f0" stroke-width="1.5" stroke-linecap="round" stroke-linejoin="round" /><circle cx="8" cy="8" r="2.6" fill="#f0f0f0"/></svg>
<svg style="left:1886.5px;top:124.4px;" width="16.5" height="16.5" viewBox="0 0 16 16"><path d="M2 4.5 H4.5 L5.5 2.8 H10.5 L11.5 4.5 H14 V13.5 H2 Z" fill="none" stroke="#e8e8e8" stroke-width="1.3" stroke-linecap="round" stroke-linejoin="round" /><circle cx="8" cy="8.8" r="2.9" fill="none" stroke="#e8e8e8" stroke-width="1.3"/><circle cx="8" cy="8.8" r="1" fill="#e8e8e8"/></svg>
<svg style="left:1497.5px;top:149px;" width="10" height="10" viewBox="0 0 10 10"><path d="M3.2 1.4 L6.8 5 L3.2 8.6" fill="none" stroke="#6a6a6a" stroke-width="1.3" stroke-linecap="round" stroke-linejoin="round"/></svg>
<svg style="left:1514px;top:145.2px;" width="15.5" height="15.5" viewBox="0 0 16 16"><rect x="1.5" y="2" width="13" height="3.6" rx="0.6" fill="#6e6e6e" /><rect x="2.5" y="6.6" width="11" height="7.6" rx="0.8" fill="#6e6e6e" /><rect x="6" y="8.6" width="4" height="1.6" rx="0.5" fill="#282828" /></svg>
<div style="left:1536px;top:146px;height:16px;line-height:16px;font-size:12px;color:#8a8a8a;white-space:nowrap;">Prop</div>
<svg style="left:1583.5px;top:146px;" width="15.5" height="15.5" viewBox="0 0 16 16"><circle cx="8" cy="2.8" r="2" fill="#8a6a3a"/><path d="M2 5.5 L8 7 L14 5.5 M8 7 V9.5 M8 9.5 L4.5 14.5 M8 9.5 L11.5 14.5" fill="none" stroke="#8a6a3a" stroke-width="2.2" stroke-linecap="round" stroke-linejoin="round" /></svg>
<svg style="left:1847.5px;top:146.3px;" width="13" height="13" viewBox="0 0 16 16"><rect x="1.5" y="1.5" width="13" height="13" rx="1.5" fill="#e8e8e8" /><path d="M4.2 8.2 L7 11 L12 4.8" fill="none" stroke="#1d1d1d" stroke-width="2" stroke-linecap="round" stroke-linejoin="round" /></svg>
<svg style="left:1867.5px;top:146px;" width="15" height="15" viewBox="0 0 16 16"><path d="M2 7.5 Q8 13 14 7.5" fill="none" stroke="#4a4a4a" stroke-width="1.1" stroke-linecap="round" stroke-linejoin="round" /></svg>
<svg style="left:1886.5px;top:144.4px;" width="16.5" height="16.5" viewBox="0 0 16 16"><path d="M2 4.5 H4.5 L5.5 2.8 H10.5 L11.5 4.5 H14 V13.5 H2 Z" fill="none" stroke="#e8e8e8" stroke-width="1.3" stroke-linecap="round" stroke-linejoin="round" /><circle cx="8" cy="8.8" r="2.9" fill="none" stroke="#e8e8e8" stroke-width="1.3"/><circle cx="8" cy="8.8" r="1" fill="#e8e8e8"/></svg>
<svg style="left:1497.5px;top:169px;" width="10" height="10" viewBox="0 0 10 10"><path d="M3.2 1.4 L6.8 5 L3.2 8.6" fill="none" stroke="#6a6a6a" stroke-width="1.3" stroke-linecap="round" stroke-linejoin="round"/></svg>
<svg style="left:1514px;top:165.2px;" width="15.5" height="15.5" viewBox="0 0 16 16"><rect x="1.5" y="2" width="13" height="3.6" rx="0.6" fill="#6e6e6e" /><rect x="2.5" y="6.6" width="11" height="7.6" rx="0.8" fill="#6e6e6e" /><rect x="6" y="8.6" width="4" height="1.6" rx="0.5" fill="#282828" /></svg>
<div style="left:1536px;top:166px;height:16px;line-height:16px;font-size:11.5px;color:#8a8a8a;white-space:nowrap;">Animation_Area_Reference</div>
<svg style="left:1699.5px;top:166px;" width="15.5" height="15.5" viewBox="0 0 16 16"><path d="M2.6 3.2 H13.4 L8 13.2 Z" fill="none" stroke="#80663a" stroke-width="2.9" stroke-linecap="round" stroke-linejoin="round" /></svg>
<div style="left:1713.5px;top:170.5px;height:16px;line-height:16px;font-size:8.5px;color:#d8d8d8;white-space:nowrap;">2</div>
<svg style="left:1847.5px;top:166.3px;" width="13" height="13" viewBox="0 0 16 16"><rect x="1.5" y="1.5" width="13" height="13" rx="1.5" fill="#e8e8e8" /><path d="M4.2 8.2 L7 11 L12 4.8" fill="none" stroke="#1d1d1d" stroke-width="2" stroke-linecap="round" stroke-linejoin="round" /></svg>
<svg style="left:1867.5px;top:166px;" width="15" height="15" viewBox="0 0 16 16"><path d="M2 7.5 Q8 13 14 7.5" fill="none" stroke="#4a4a4a" stroke-width="1.1" stroke-linecap="round" stroke-linejoin="round" /></svg>
<svg style="left:1886.5px;top:164.4px;" width="16.5" height="16.5" viewBox="0 0 16 16"><path d="M2 4.5 H4.5 L5.5 2.8 H10.5 L11.5 4.5 H14 V13.5 H2 Z" fill="none" stroke="#e8e8e8" stroke-width="1.3" stroke-linecap="round" stroke-linejoin="round" /><circle cx="8" cy="8.8" r="2.9" fill="none" stroke="#e8e8e8" stroke-width="1.3"/><circle cx="8" cy="8.8" r="1" fill="#e8e8e8"/></svg>
<div style="left:1472px;top:313px;width:436px;height:663px;background:#303030;border-radius:5px;border:1px solid #3a3a3a;"></div>
<div style="left:1480px;top:315.5px;width:31.5px;height:19px;background:#282828;border-radius:4px;border:1px solid #3c3c3c;"></div>
<svg style="left:1483.5px;top:317.5px;" width="15" height="15" viewBox="0 0 16 16"><rect x="1.5" y="1.5" width="13" height="5.8" rx="2.9" fill="#e8e8e8" /><rect x="1.5" y="8.7" width="13" height="5.8" rx="2.9" fill="#e8e8e8" /><rect x="7" y="2.8" width="6.2" height="3.2" rx="1.4" fill="#282828" /><rect x="9" y="10" width="4.2" height="3.2" rx="1.4" fill="#282828" /></svg>
<svg style="left:1500px;top:320.5px;" width="10" height="10" viewBox="0 0 10 10"><path d="M1.8 3.7 L5 6.9 L8.2 3.7" fill="none" stroke="#d0d0d0" stroke-width="1.3" stroke-linecap="round" stroke-linejoin="round"/></svg>
<div style="left:1634px;top:315.5px;width:118.5px;height:19px;background:#1d1d1d;border-radius:4px;border:1px solid #3c3c3c;"></div>
<svg style="left:1638px;top:317.5px;" width="14.5" height="14.5" viewBox="0 0 16 16"><circle cx="9.5" cy="6.5" r="4.3" fill="none" stroke="#e0e0e0" stroke-width="1.4"/><path d="M6.3 9.7 L1.8 14.2" fill="none" stroke="#e0e0e0" stroke-width="1.6" stroke-linecap="round" stroke-linejoin="round" /></svg>
<div style="left:1660px;top:317px;height:16px;line-height:16px;font-size:12px;color:#7a7a7a;white-space:nowrap;">Search</div>
<div style="left:1886px;top:315.5px;width:19.5px;height:19px;background:#282828;border-radius:4px;border:1px solid #3c3c3c;"></div>
<svg style="left:1891px;top:320.5px;" width="10" height="10" viewBox="0 0 10 10"><path d="M1.8 3.7 L5 6.9 L8.2 3.7" fill="none" stroke="#d0d0d0" stroke-width="1.3" stroke-linecap="round" stroke-linejoin="round"/></svg>
<div style="left:1473px;top:338px;width:27px;height:637px;background:#1d1d1d;border-radius:0 0 0 5px;"></div>
<div style="left:1474px;top:615.5px;width:26px;height:25.5px;background:#303030;border-radius:4px 0 0 4px;"></div>
<svg style="left:1479px;top:348px;" width="16" height="16" viewBox="0 0 16 16"><path d="M4 2 V9" fill="none" stroke="#d4d4d4" stroke-width="1.6" stroke-linecap="round" stroke-linejoin="round" /><circle cx="4" cy="12" r="2.2" fill="#d4d4d4"/><path d="M11.5 14 V8 M9 2.5 V5.5 Q9 8 11.5 8 Q14 8 14 5.5 V2.5" fill="none" stroke="#d4d4d4" stroke-width="1.8" stroke-linecap="round" stroke-linejoin="round" /></svg>
<svg style="left:1479px;top:387px;" width="16" height="16" viewBox="0 0 16 16"><rect x="1.5" y="5" width="13" height="9" rx="1" fill="none" stroke="#d4d4d4" stroke-width="1.4" /><rect x="3" y="2" width="5" height="3" rx="0" fill="#d4d4d4" /><path d="M11 7.5 V11.5 M4 8 H8" fill="none" stroke="#d4d4d4" stroke-width="1.3" stroke-linecap="round" stroke-linejoin="round" /></svg>
<svg style="left:1479px;top:415px;" width="16" height="16" viewBox="0 0 16 16"><rect x="1.5" y="2" width="13" height="4.5" rx="1" fill="#d4d4d4" /><rect x="3.5" y="7" width="9" height="7.5" rx="0.5" fill="#d4d4d4" /><path d="M5 13 L7.5 9.5 L9 11.5 L10 10.5 L11.5 13 Z" fill="#1d1d1d" /></svg>
<svg style="left:1479px;top:443px;" width="16" height="16" viewBox="0 0 16 16"><rect x="5" y="1.5" width="9.5" height="9.5" rx="1" fill="#d4d4d4" /><path d="M3 4 V12.5 H11.5 M1 6.5 V14.8 H9" fill="none" stroke="#d4d4d4" stroke-width="1.1" stroke-linecap="round" stroke-linejoin="round" /><path d="M6 9.5 L8.5 6 L10 8 L11.5 7 L13.5 9.5 Z" fill="#282828" /></svg>
<svg style="left:1479px;top:471px;" width="16" height="16" viewBox="0 0 16 16"><path d="M2 12 L4.5 2.5 Q6.5 1 7.5 4 L8.5 12 Z" fill="#d4d4d4" /><circle cx="11" cy="11" r="2.8" fill="none" stroke="#d4d4d4" stroke-width="1.2"/><circle cx="12.5" cy="4.5" r="1.5" fill="#d4d4d4"/></svg>
<svg style="left:1479px;top:499px;" width="16" height="16" viewBox="0 0 16 16"><circle cx="8" cy="8" r="5.6" fill="none" stroke="#cf4a62" stroke-width="1.5"/><path d="M5 4 L8.5 5 L8 8 L5.5 9.5 L3.5 7 Z M9.5 9 L12.5 8.5 L11.5 12 L9 12.5 Z" fill="#cf4a62" /><path d="M2 13.5 Q0.5 12 2.5 10 M14 2.5 Q15.5 4 13.5 6" fill="none" stroke="#cf4a62" stroke-width="1" stroke-linecap="round" stroke-linejoin="round" /></svg>
<svg style="left:1479px;top:536px;" width="16" height="16" viewBox="0 0 16 16"><rect x="4.2" y="4.2" width="7.6" height="7.6" rx="0" fill="#d89a48" /><path d="M1.5 4.5 V1.5 H4.5 M11.5 1.5 H14.5 V4.5 M14.5 11.5 V14.5 H11.5 M4.5 14.5 H1.5 V11.5" fill="none" stroke="#d89a48" stroke-width="1.2" stroke-linecap="round" stroke-linejoin="round" /></svg>
<svg style="left:1479px;top:564px;" width="16" height="16" viewBox="0 0 16 16"><circle cx="7.5" cy="8.5" r="5" fill="none" stroke="#4a80c8" stroke-width="1.5"/><circle cx="7.5" cy="8.5" r="1.8" fill="#4a80c8"/><circle cx="13" cy="3" r="1.5" fill="#4a80c8"/></svg>
<svg style="left:1479px;top:592px;" width="16" height="16" viewBox="0 0 16 16"><path d="M1.8 10.5 L8.5 3.5 Q11.5 1 13.8 3.5 Q15.5 6.5 12.5 9 L5.5 13.8 Q2.5 14.5 1.8 10.5 Z" fill="none" stroke="#4a80c8" stroke-width="1.5" stroke-linecap="round" stroke-linejoin="round" /><circle cx="6.5" cy="9.5" r="2" fill="none" stroke="#4a80c8" stroke-width="1.4"/></svg>
<svg style="left:1479px;top:620px;" width="16" height="16" viewBox="0 0 16 16"><circle cx="8.2" cy="3" r="1.5" fill="#4a80c8"/><path d="M2.5 4 L6 6.5 L10.5 6 L13.5 8.5 M7.5 6.5 L8.5 10 L5 14 M8.5 10 L13 12.5" fill="none" stroke="#4a80c8" stroke-width="1.2" stroke-linecap="round" stroke-linejoin="round" /></svg>
<svg style="left:1479px;top:648px;" width="16" height="16" viewBox="0 0 16 16"><path d="M4.5 4.5 L11.5 11.5" fill="none" stroke="#4a80c8" stroke-width="2.6" stroke-linecap="round" stroke-linejoin="round" /><circle cx="3.2" cy="5.3" r="1.6" fill="#4a80c8"/><circle cx="5.3" cy="3.2" r="1.6" fill="#4a80c8"/><circle cx="12.8" cy="10.7" r="1.6" fill="#4a80c8"/><circle cx="10.7" cy="12.8" r="1.6" fill="#4a80c8"/></svg>
<svg style="left:1479px;top:676px;" width="16" height="16" viewBox="0 0 16 16"><path d="M5 5.5 L11 11" fill="none" stroke="#4a80c8" stroke-width="2.2" stroke-linecap="round" stroke-linejoin="round" /><circle cx="4" cy="6.2" r="1.4" fill="#4a80c8"/><circle cx="6" cy="4.2" r="1.4" fill="#4a80c8"/><circle cx="12" cy="10.3" r="1.4" fill="#4a80c8"/><circle cx="10.3" cy="12" r="1.4" fill="#4a80c8"/><path d="M2 3 Q8 0 13.5 5 Q15 9 11 13.5" fill="none" stroke="#4a80c8" stroke-width="1" stroke-linecap="round" stroke-linejoin="round" /></svg>
<div style="left:1477px;top:374.5px;width:21px;height:1px;background:#2c2c2c;"></div>
<div style="left:1477px;top:522px;width:21px;height:1px;background:#2c2c2c;"></div>
<div style="left:1477px;top:698px;width:21px;height:1px;background:#2c2c2c;"></div>
<svg style="left:1510.5px;top:348px;" width="16" height="16" viewBox="0 0 16 16"><rect x="4.2" y="4.2" width="7.6" height="7.6" rx="0" fill="#e6e6e6" /><path d="M1.5 4.5 V1.5 H4.5 M11.5 1.5 H14.5 V4.5 M14.5 11.5 V14.5 H11.5 M4.5 14.5 H1.5 V11.5" fill="none" stroke="#e6e6e6" stroke-width="1.2" stroke-linecap="round" stroke-linejoin="round" /></svg>
<div style="left:1534px;top:348px;height:16px;line-height:16px;font-size:12px;color:#e6e6e6;white-space:nowrap;">Armature</div>
<svg style="left:1597.5px;top:351px;" width="10" height="10" viewBox="0 0 10 10"><path d="M3.2 1.4 L6.8 5 L3.2 8.6" fill="none" stroke="#c8c8c8" stroke-width="1.3" stroke-linecap="round" stroke-linejoin="round"/></svg>
<svg style="left:1614.5px;top:348px;" width="16" height="16" viewBox="0 0 16 16"><circle cx="8.2" cy="3" r="1.5" fill="#e6e6e6"/><path d="M2.5 4 L6 6.5 L10.5 6 L13.5 8.5 M7.5 6.5 L8.5 10 L5 14 M8.5 10 L13 12.5" fill="none" stroke="#e6e6e6" stroke-width="1.2" stroke-linecap="round" stroke-linejoin="round" /></svg>
<div style="left:1638px;top:348px;height:16px;line-height:16px;font-size:12px;color:#e6e6e6;white-space:nowrap;">Armature</div>
<svg style="left:1887px;top:347.5px;" width="16" height="16" viewBox="0 0 16 16"><path d="M9.5 1.5 L14.5 6.5 L12.5 7 L10 9.5 L10 12 L4 6 L6.5 6 L9 3.5 Z M7 9 L2 14" fill="none" stroke="#b0b0b0" stroke-width="1.1" stroke-linecap="round" stroke-linejoin="round" /></svg>
<div style="left:1509px;top:382.5px;width:397px;height:19px;background:#1d1d1d;border-radius:4px;border:1px solid #3c3c3c;"></div>
<div style="left:1509px;top:382.5px;width:31px;height:19px;background:#282828;border-radius:4px 0 0 4px;border:1px solid #3c3c3c;"></div>
<svg style="left:1512.5px;top:384px;" width="15.5" height="15.5" viewBox="0 0 16 16"><circle cx="8.2" cy="3" r="1.5" fill="#e6e6e6"/><path d="M2.5 4 L6 6.5 L10.5 6 L13.5 8.5 M7.5 6.5 L8.5 10 L5 14 M8.5 10 L13 12.5" fill="none" stroke="#e6e6e6" stroke-width="1.2" stroke-linecap="round" stroke-linejoin="round" /></svg>
<svg style="left:1529px;top:387.5px;" width="10" height="10" viewBox="0 0 10 10"><path d="M1.8 3.7 L5 6.9 L8.2 3.7" fill="none" stroke="#d0d0d0" stroke-width="1.3" stroke-linecap="round" stroke-linejoin="round"/></svg>
<div style="left:1547px;top:384px;height:16px;line-height:16px;font-size:12px;color:#e6e6e6;white-space:nowrap;">Armature</div>
<div style="left:1885.5px;top:382.5px;width:20.5px;height:19px;background:#545454;border-radius:0 4px 4px 0;"></div>
<svg style="left:1888px;top:384.5px;" width="15" height="15" viewBox="0 0 16 16"><path d="M8 1.5 Q11 3 14 3 Q14 11 8 14.5 Q2 11 2 3 Q5 3 8 1.5 Z" fill="none" stroke="#c8c8c8" stroke-width="1.2" stroke-linecap="round" stroke-linejoin="round" /></svg>
<div style="left:1508px;top:412.5px;width:398px;height:60px;background:#3d3d3d;border-radius:5px;"></div>
<svg style="left:1516.5px;top:420.5px;" width="10" height="10" viewBox="0 0 10 10"><path d="M1.4 3.5 L5 7.1 L8.6 3.5" fill="none" stroke="#d0d0d0" stroke-width="1.3" stroke-linecap="round" stroke-linejoin="round"/></svg>
<div style="left:1530px;top:417px;height:16px;line-height:16px;font-size:12px;color:#e6e6e6;white-space:nowrap;">Pose</div>
<svg style="left:1888.5px;top:423px;" width="8" height="3" viewBox="0 0 8 3"><rect x="0" y="0" width="1" height="1" fill="#777"/><rect x="0" y="2" width="1" height="1" fill="#777"/><rect x="2" y="0" width="1" height="1" fill="#777"/><rect x="2" y="2" width="1" height="1" fill="#777"/><rect x="4" y="0" width="1" height="1" fill="#777"/><rect x="4" y="2" width="1" height="1" fill="#777"/><rect x="6" y="0" width="1" height="1" fill="#777"/><rect x="6" y="2" width="1" height="1" fill="#777"/></svg>
<div style="left:1517px;top:446px;width:189.5px;height:18.3px;background:#4772b3;border-radius:4px 0 0 4px;"></div>
<div style="left:1517px;top:447.2px;height:16px;line-height:16px;font-size:12px;color:#ffffff;white-space:nowrap;width:189.5px;text-align:center;">Pose Position</div>
<div style="left:1707.5px;top:446px;width:189.5px;height:18.3px;background:#545454;border-radius:0 4px 4px 0;"></div>
<div style="left:1707.5px;top:447.2px;height:16px;line-height:16px;font-size:12px;color:#e6e6e6;white-space:nowrap;width:189.5px;text-align:center;">Rest Position</div>
<div style="left:1508px;top:475px;width:398px;height:202.5px;background:#3d3d3d;border-radius:5px;"></div>
<svg style="left:1516.5px;top:483.5px;" width="10" height="10" viewBox="0 0 10 10"><path d="M1.4 3.5 L5 7.1 L8.6 3.5" fill="none" stroke="#d0d0d0" stroke-width="1.3" stroke-linecap="round" stroke-linejoin="round"/></svg>
<div style="left:1530px;top:480px;height:16px;line-height:16px;font-size:12px;color:#e6e6e6;white-space:nowrap;">Bone Collections</div>
<svg style="left:1888.5px;top:486px;" width="8" height="3" viewBox="0 0 8 3"><rect x="0" y="0" width="1" height="1" fill="#777"/><rect x="0" y="2" width="1" height="1" fill="#777"/><rect x="2" y="0" width="1" height="1" fill="#777"/><rect x="2" y="2" width="1" height="1" fill="#777"/><rect x="4" y="0" width="1" height="1" fill="#777"/><rect x="4" y="2" width="1" height="1" fill="#777"/><rect x="6" y="0" width="1" height="1" fill="#777"/><rect x="6" y="2" width="1" height="1" fill="#777"/></svg>
<div style="left:1517px;top:509.5px;width:351.5px;height:84px;background:#2b2b2b;border-radius:4px;"></div>
<div style="left:1541px;top:516px;height:16px;line-height:16px;font-size:12px;color:#e6e6e6;white-space:nowrap;">Global/Switch</div>
<div style="left:1522px;top:537px;width:323px;height:18.3px;background:#4772b3;border-radius:4px;"></div>
<div style="left:1541px;top:538px;height:16px;line-height:16px;font-size:12px;color:#ffffff;white-space:nowrap;">FK Upper</div>
<div style="left:1541px;top:560px;height:16px;line-height:16px;font-size:12px;color:#e6e6e6;white-space:nowrap;">FK Lower</div>
<svg style="left:1787px;top:520.5px;" width="7" height="7" viewBox="0 0 7 7"><circle cx="3.5" cy="3.5" r="2.9" fill="#f0f0f0"/></svg>
<svg style="left:1804.5px;top:516.6px;" width="14.5" height="14.5" viewBox="0 0 16 16"><path d="M1 8 Q8 0.8 15 8 Q8 15.2 1 8 Z" fill="none" stroke="#ffffff" stroke-width="1.5" stroke-linecap="round" stroke-linejoin="round" /><circle cx="8" cy="8" r="2.6" fill="#ffffff"/></svg>
<svg style="left:1823px;top:516px;" width="16" height="16" viewBox="0 0 16 16"><path d="M8 1.8 L9.9 6 L14.4 6.5 L11 9.5 L12 14 L8 11.7 L4 14 L5 9.5 L1.6 6.5 L6.1 6 Z" fill="none" stroke="#f0f0f0" stroke-width="1.2" stroke-linecap="round" stroke-linejoin="round" /></svg>
<svg style="left:1804.5px;top:538.6px;" width="14.5" height="14.5" viewBox="0 0 16 16"><path d="M1 8 Q8 0.8 15 8 Q8 15.2 1 8 Z" fill="none" stroke="#ffffff" stroke-width="1.5" stroke-linecap="round" stroke-linejoin="round" /><circle cx="8" cy="8" r="2.6" fill="#ffffff"/></svg>
<svg style="left:1823px;top:538px;" width="16" height="16" viewBox="0 0 16 16"><path d="M8 1.8 L9.9 6 L14.4 6.5 L11 9.5 L12 14 L8 11.7 L4 14 L5 9.5 L1.6 6.5 L6.1 6 Z" fill="none" stroke="#f0f0f0" stroke-width="1.2" stroke-linecap="round" stroke-linejoin="round" /></svg>
<svg style="left:1804.5px;top:560.6px;" width="14.5" height="14.5" viewBox="0 0 16 16"><path d="M1 8 Q8 0.8 15 8 Q8 15.2 1 8 Z" fill="none" stroke="#ffffff" stroke-width="1.5" stroke-linecap="round" stroke-linejoin="round" /><circle cx="8" cy="8" r="2.6" fill="#ffffff"/></svg>
<svg style="left:1823px;top:560px;" width="16" height="16" viewBox="0 0 16 16"><path d="M8 1.8 L9.9 6 L14.4 6.5 L11 9.5 L12 14 L8 11.7 L4 14 L5 9.5 L1.6 6.5 L6.1 6 Z" fill="none" stroke="#f0f0f0" stroke-width="1.2" stroke-linecap="round" stroke-linejoin="round" /></svg>
<div style="left:1855.5px;top:513.5px;width:8px;height:65px;background:#242424;border-radius:4px;border:1px solid #353535;"></div>
<div style="left:1856px;top:514px;width:7px;height:17.5px;background:#5a5a5a;border-radius:3.5px;"></div>
<svg style="left:1688px;top:582.5px;" width="8" height="3" viewBox="0 0 8 3"><rect x="0" y="0" width="1" height="1" fill="#c8c8c8"/><rect x="0" y="2" width="1" height="1" fill="#c8c8c8"/><rect x="2" y="0" width="1" height="1" fill="#c8c8c8"/><rect x="2" y="2" width="1" height="1" fill="#c8c8c8"/><rect x="4" y="0" width="1" height="1" fill="#c8c8c8"/><rect x="4" y="2" width="1" height="1" fill="#c8c8c8"/><rect x="6" y="0" width="1" height="1" fill="#c8c8c8"/><rect x="6" y="2" width="1" height="1" fill="#c8c8c8"/></svg>
<div style="left:1879px;top:509.5px;width:18.5px;height:18px;background:#545454;border-radius:4px 4px 0 0;"></div>
<svg style="left:1880.5px;top:511px;" width="15" height="15" viewBox="0 0 16 16"><path d="M8 3 V13 M3 8 H13" fill="none" stroke="#e6e6e6" stroke-width="1.2" stroke-linecap="round" stroke-linejoin="round" /></svg>
<div style="left:1879px;top:528.5px;width:18.5px;height:18px;background:#545454;border-radius:0 0 4px 4px;"></div>
<svg style="left:1880.5px;top:530px;" width="15" height="15" viewBox="0 0 16 16"><path d="M3 8 H13" fill="none" stroke="#e6e6e6" stroke-width="1.2" stroke-linecap="round" stroke-linejoin="round" /></svg>
<div style="left:1879px;top:554.5px;width:18.5px;height:18.5px;background:#232323;border-radius:4px;"></div>
<svg style="left:1883.3px;top:559px;" width="10" height="10" viewBox="0 0 10 10"><path d="M1.2 3.4 L5 7.2 L8.8 3.4" fill="none" stroke="#d8d8d8" stroke-width="1.3" stroke-linecap="round" stroke-linejoin="round"/></svg>
<div style="left:1879px;top:581px;width:18.5px;height:18px;background:#545454;border-radius:4px 4px 0 0;"></div>
<svg style="left:1881.3px;top:582.5px;" width="14" height="14" viewBox="0 0 16 16"><path d="M8 4.5 L12.5 11 H3.5 Z" fill="#e6e6e6" /></svg>
<div style="left:1879px;top:600px;width:18.5px;height:18px;background:#545454;border-radius:0 0 4px 4px;"></div>
<svg style="left:1881.3px;top:602px;" width="14" height="14" viewBox="0 0 16 16"><path d="M8 11.5 L12.5 5 H3.5 Z" fill="#e6e6e6" /></svg>
<div style="left:1517px;top:626px;width:91.5px;height:18.3px;background:#545454;border-radius:4px 0 0 4px;"></div>
<div style="left:1517px;top:627.2px;height:16px;line-height:16px;font-size:12px;color:#e6e6e6;white-space:nowrap;width:91.5px;text-align:center;">Assign</div>
<div style="left:1609.5px;top:626px;width:92.5px;height:18.3px;background:#545454;border-radius:0 4px 4px 0;"></div>
<div style="left:1609.5px;top:627.2px;height:16px;line-height:16px;font-size:12px;color:#e6e6e6;white-space:nowrap;width:92.5px;text-align:center;">Remove</div>
<div style="left:1712px;top:626px;width:91.5px;height:18.3px;background:#545454;border-radius:4px 0 0 4px;"></div>
<div style="left:1712px;top:627.2px;height:16px;line-height:16px;font-size:12px;color:#e6e6e6;white-space:nowrap;width:91.5px;text-align:center;">Select</div>
<div style="left:1804.5px;top:626px;width:92.5px;height:18.3px;background:#545454;border-radius:0 4px 4px 0;"></div>
<div style="left:1804.5px;top:627.2px;height:16px;line-height:16px;font-size:12px;color:#e6e6e6;white-space:nowrap;width:92.5px;text-align:center;">Deselect</div>
<svg style="left:1530.5px;top:661px;" width="10" height="10" viewBox="0 0 10 10"><path d="M3.2 1.4 L6.8 5 L3.2 8.6" fill="none" stroke="#d0d0d0" stroke-width="1.3" stroke-linecap="round" stroke-linejoin="round"/></svg>
<div style="left:1544px;top:658px;height:16px;line-height:16px;font-size:12px;color:#e6e6e6;white-space:nowrap;">Custom Properties</div>
<div style="left:1508px;top:680.5px;width:398px;height:24.5px;background:#3d3d3d;border-radius:5px;"></div>
<svg style="left:1516.5px;top:688px;" width="10" height="10" viewBox="0 0 10 10"><path d="M3.2 1.4 L6.8 5 L3.2 8.6" fill="none" stroke="#d0d0d0" stroke-width="1.3" stroke-linecap="round" stroke-linejoin="round"/></svg>
<div style="left:1530px;top:685px;height:16px;line-height:16px;font-size:12px;color:#e6e6e6;white-space:nowrap;">Motion Paths</div>
<svg style="left:1888.5px;top:691px;" width="8" height="3" viewBox="0 0 8 3"><rect x="0" y="0" width="1" height="1" fill="#777"/><rect x="0" y="2" width="1" height="1" fill="#777"/><rect x="2" y="0" width="1" height="1" fill="#777"/><rect x="2" y="2" width="1" height="1" fill="#777"/><rect x="4" y="0" width="1" height="1" fill="#777"/><rect x="4" y="2" width="1" height="1" fill="#777"/><rect x="6" y="0" width="1" height="1" fill="#777"/><rect x="6" y="2" width="1" height="1" fill="#777"/></svg>
<div style="left:1508px;top:707.5px;width:398px;height:24.5px;background:#3d3d3d;border-radius:5px;"></div>
<svg style="left:1516.5px;top:715px;" width="10" height="10" viewBox="0 0 10 10"><path d="M3.2 1.4 L6.8 5 L3.2 8.6" fill="none" stroke="#d0d0d0" stroke-width="1.3" stroke-linecap="round" stroke-linejoin="round"/></svg>
<div style="left:1530px;top:712px;height:16px;line-height:16px;font-size:12px;color:#e6e6e6;white-space:nowrap;">Viewport Display</div>
<svg style="left:1888.5px;top:718px;" width="8" height="3" viewBox="0 0 8 3"><rect x="0" y="0" width="1" height="1" fill="#777"/><rect x="0" y="2" width="1" height="1" fill="#777"/><rect x="2" y="0" width="1" height="1" fill="#777"/><rect x="2" y="2" width="1" height="1" fill="#777"/><rect x="4" y="0" width="1" height="1" fill="#777"/><rect x="4" y="2" width="1" height="1" fill="#777"/><rect x="6" y="0" width="1" height="1" fill="#777"/><rect x="6" y="2" width="1" height="1" fill="#777"/></svg>
<div style="left:1508px;top:734.5px;width:398px;height:24.5px;background:#3d3d3d;border-radius:5px;"></div>
<svg style="left:1516.5px;top:742px;" width="10" height="10" viewBox="0 0 10 10"><path d="M3.2 1.4 L6.8 5 L3.2 8.6" fill="none" stroke="#d0d0d0" stroke-width="1.3" stroke-linecap="round" stroke-linejoin="round"/></svg>
<div style="left:1530px;top:739px;height:16px;line-height:16px;font-size:12px;color:#e6e6e6;white-space:nowrap;">Inverse Kinematics</div>
<svg style="left:1888.5px;top:745px;" width="8" height="3" viewBox="0 0 8 3"><rect x="0" y="0" width="1" height="1" fill="#777"/><rect x="0" y="2" width="1" height="1" fill="#777"/><rect x="2" y="0" width="1" height="1" fill="#777"/><rect x="2" y="2" width="1" height="1" fill="#777"/><rect x="4" y="0" width="1" height="1" fill="#777"/><rect x="4" y="2" width="1" height="1" fill="#777"/><rect x="6" y="0" width="1" height="1" fill="#777"/><rect x="6" y="2" width="1" height="1" fill="#777"/></svg>
<div style="left:1508px;top:761.5px;width:398px;height:24.5px;background:#3d3d3d;border-radius:5px;"></div>
<svg style="left:1516.5px;top:769px;" width="10" height="10" viewBox="0 0 10 10"><path d="M3.2 1.4 L6.8 5 L3.2 8.6" fill="none" stroke="#d0d0d0" stroke-width="1.3" stroke-linecap="round" stroke-linejoin="round"/></svg>
<div style="left:1530px;top:766px;height:16px;line-height:16px;font-size:12px;color:#e6e6e6;white-space:nowrap;">Selection Sets</div>
<svg style="left:1888.5px;top:772px;" width="8" height="3" viewBox="0 0 8 3"><rect x="0" y="0" width="1" height="1" fill="#777"/><rect x="0" y="2" width="1" height="1" fill="#777"/><rect x="2" y="0" width="1" height="1" fill="#777"/><rect x="2" y="2" width="1" height="1" fill="#777"/><rect x="4" y="0" width="1" height="1" fill="#777"/><rect x="4" y="2" width="1" height="1" fill="#777"/><rect x="6" y="0" width="1" height="1" fill="#777"/><rect x="6" y="2" width="1" height="1" fill="#777"/></svg>
<div style="left:1508px;top:788.5px;width:398px;height:60px;background:#3d3d3d;border-radius:5px;"></div>
<svg style="left:1516.5px;top:796.5px;" width="10" height="10" viewBox="0 0 10 10"><path d="M1.4 3.5 L5 7.1 L8.6 3.5" fill="none" stroke="#d0d0d0" stroke-width="1.3" stroke-linecap="round" stroke-linejoin="round"/></svg>
<div style="left:1530px;top:793px;height:16px;line-height:16px;font-size:12px;color:#e6e6e6;white-space:nowrap;">Animation</div>
<svg style="left:1888.5px;top:799px;" width="8" height="3" viewBox="0 0 8 3"><rect x="0" y="0" width="1" height="1" fill="#777"/><rect x="0" y="2" width="1" height="1" fill="#777"/><rect x="2" y="0" width="1" height="1" fill="#777"/><rect x="2" y="2" width="1" height="1" fill="#777"/><rect x="4" y="0" width="1" height="1" fill="#777"/><rect x="4" y="2" width="1" height="1" fill="#777"/><rect x="6" y="0" width="1" height="1" fill="#777"/><rect x="6" y="2" width="1" height="1" fill="#777"/></svg>
<div style="left:1517px;top:822px;width:30px;height:18.3px;background:#282828;border-radius:4px 0 0 4px;border:1px solid #3a3a3a;"></div>
<svg style="left:1519.5px;top:823.5px;" width="15" height="15" viewBox="0 0 16 16"><path d="M0.4 4 L2.7 1.7 L5 4 L2.7 6.3 Z M11 4 L13.3 1.7 L15.6 4 L13.3 6.3 Z" fill="#e6e6e6" /><path d="M4.6 2 H11.4 L10 4 L11.4 6 H4.6 L6 4 Z" fill="#e6e6e6" opacity="0.55"/><path d="M8 8.4 L11 11.4 L8 14.4 L5 11.4 Z" fill="none" stroke="#e6e6e6" stroke-width="1.1" stroke-linecap="round" stroke-linejoin="round" /></svg>
<svg style="left:1536px;top:826.8px;" width="10" height="10" viewBox="0 0 10 10"><path d="M1.8 3.7 L5 6.9 L8.2 3.7" fill="none" stroke="#d0d0d0" stroke-width="1.3" stroke-linecap="round" stroke-linejoin="round"/></svg>
<div style="left:1547.5px;top:822px;width:349.5px;height:18.3px;background:#545454;border-radius:0 4px 4px 0;"></div>
<svg style="left:1551px;top:823.5px;" width="15" height="15" viewBox="0 0 16 16"><path d="M8 3 V13 M3 8 H13" fill="none" stroke="#e6e6e6" stroke-width="1.2" stroke-linecap="round" stroke-linejoin="round" /></svg>
<div style="left:1547.5px;top:823.2px;height:16px;line-height:16px;font-size:12px;color:#e6e6e6;white-space:nowrap;width:367px;text-align:center;">New</div>
<div style="left:1508px;top:851.5px;width:398px;height:24.5px;background:#3d3d3d;border-radius:5px;"></div>
<svg style="left:1516.5px;top:859px;" width="10" height="10" viewBox="0 0 10 10"><path d="M3.2 1.4 L6.8 5 L3.2 8.6" fill="none" stroke="#d0d0d0" stroke-width="1.3" stroke-linecap="round" stroke-linejoin="round"/></svg>
<div style="left:1530px;top:856px;height:16px;line-height:16px;font-size:12px;color:#e6e6e6;white-space:nowrap;">Custom Properties</div>
<svg style="left:1888.5px;top:862px;" width="8" height="3" viewBox="0 0 8 3"><rect x="0" y="0" width="1" height="1" fill="#777"/><rect x="0" y="2" width="1" height="1" fill="#777"/><rect x="2" y="0" width="1" height="1" fill="#777"/><rect x="2" y="2" width="1" height="1" fill="#777"/><rect x="4" y="0" width="1" height="1" fill="#777"/><rect x="4" y="2" width="1" height="1" fill="#777"/><rect x="6" y="0" width="1" height="1" fill="#777"/><rect x="6" y="2" width="1" height="1" fill="#777"/></svg>
<div style="left:0px;top:636px;width:1468.5px;height:189px;background:#303030;border-radius:5px;overflow:hidden;"></div>
<div style="left:3px;top:639.5px;width:30.5px;height:18.5px;background:#282828;border-radius:4px;border:1px solid #3c3c3c;"></div>
<svg style="left:5.5px;top:641px;" width="15" height="15" viewBox="0 0 16 16"><path d="M1 4.5 H4 Q7 4.5 8 8 Q9 12 12 12 H15" fill="none" stroke="#e6e6e6" stroke-width="1.4" stroke-linecap="round" stroke-linejoin="round" /><path d="M5 13 Q7 9 10 3" fill="none" stroke="#e6e6e6" stroke-width="0.9" stroke-linecap="round" stroke-linejoin="round" /></svg>
<svg style="left:22px;top:644.5px;" width="10" height="10" viewBox="0 0 10 10"><path d="M1.8 3.7 L5 6.9 L8.2 3.7" fill="none" stroke="#d0d0d0" stroke-width="1.3" stroke-linecap="round" stroke-linejoin="round"/></svg>
<div style="left:46px;top:641px;height:16px;line-height:16px;font-size:12px;color:#dcdcdc;white-space:nowrap;">View</div>
<div style="left:87px;top:641px;height:16px;line-height:16px;font-size:12px;color:#dcdcdc;white-space:nowrap;">Select</div>
<div style="left:134px;top:641px;height:16px;line-height:16px;font-size:12px;color:#dcdcdc;white-space:nowrap;">Marker</div>
<div style="left:185px;top:641px;height:16px;line-height:16px;font-size:12px;color:#dcdcdc;white-space:nowrap;">Channel</div>
<div style="left:244px;top:641px;height:16px;line-height:16px;font-size:12px;color:#dcdcdc;white-space:nowrap;">Key</div>
<div style="left:277px;top:639.5px;width:90px;height:18.5px;background:#4772b3;border-radius:4px 0 0 4px;"></div>
<svg style="left:280.5px;top:641.5px;" width="14.5" height="14.5" viewBox="0 0 16 16"><path d="M1.5 4.5 V1.5 H4.5 M11.5 1.5 H14.5 V4.5 M14.5 11.5 V14.5 H11.5 M4.5 14.5 H1.5 V11.5" fill="none" stroke="#ffffff" stroke-width="1.1" stroke-linecap="round" stroke-linejoin="round" /><path d="M4 5 L7 11.5 L12 4.5" fill="none" stroke="#ffffff" stroke-width="1.2" stroke-linecap="round" stroke-linejoin="round" /></svg>
<div style="left:304px;top:641px;height:16px;line-height:16px;font-size:12px;color:#ffffff;white-space:nowrap;">Normalize</div>
<div style="left:368px;top:639.5px;width:19px;height:18.5px;background:#4772b3;border-radius:0 4px 4px 0;"></div>
<svg style="left:370px;top:641.5px;" width="14.5" height="14.5" viewBox="0 0 16 16"><path d="M13.5 6.5 A6 6 0 0 0 2.5 6 M2.5 9.5 A6 6 0 0 0 13.5 10 M13.8 2.5 V6.5 H9.8 M2.2 13.5 V9.5 H6.2" fill="none" stroke="#ffffff" stroke-width="1.3" stroke-linecap="round" stroke-linejoin="round" /></svg>
<div style="left:1203px;top:639.5px;width:18.5px;height:18.5px;background:#4772b3;border-radius:4px 0 0 4px;"></div>
<svg style="left:1205px;top:641.5px;" width="14.5" height="14.5" viewBox="0 0 16 16"><path d="M3 1.5 L13.5 7.5 L8.8 8.6 L7 14 Z" fill="#ffffff" /></svg>
<div style="left:1222.5px;top:639.5px;width:18.5px;height:18.5px;background:#4772b3;"></div>
<svg style="left:1224.5px;top:641.5px;" width="14.5" height="14.5" viewBox="0 0 16 16"><path d="M1.5 4.5 V1.5 H4.5 M11.5 1.5 H14.5 V4.5 M14.5 11.5 V14.5 H11.5 M4.5 14.5 H1.5 V11.5" fill="none" stroke="#ffffff" stroke-width="1.2" stroke-linecap="round" stroke-linejoin="round" /><rect x="4" y="4" width="8" height="8" rx="0" fill="none" stroke="#ffffff" stroke-width="1" stroke-dasharray="1.5 1.2"/></svg>
<div style="left:1242px;top:639.5px;width:19px;height:18.5px;background:#545454;border-radius:0 4px 4px 0;"></div>
<svg style="left:1244px;top:641.5px;" width="14.5" height="14.5" viewBox="0 0 16 16"><path d="M8 1 L15.5 14.5 H0.5 Z" fill="#e6e6e6" /><rect x="7.1" y="5" width="1.8" height="5.2" rx="0.6" fill="#4a4a4a" /><circle cx="8" cy="12.3" r="1.05" fill="#4a4a4a"/></svg>
<div style="left:1268px;top:639.5px;width:18.5px;height:18.5px;background:#545454;border-radius:4px;"></div>
<svg style="left:1270px;top:641.5px;" width="14.5" height="14.5" viewBox="0 0 16 16"><rect x="1.5" y="2" width="11" height="9.5" rx="0" fill="none" stroke="#e0e0e0" stroke-width="1.2" /><path d="M3.5 9.5 L10.5 4 M1.5 13.5 H12 M12 10.5 V15" fill="none" stroke="#e0e0e0" stroke-width="1" stroke-linecap="round" stroke-linejoin="round" /></svg>
<div style="left:1292.5px;top:639.5px;width:31px;height:18.5px;background:#282828;border-radius:4px;border:1px solid #3c3c3c;"></div>
<svg style="left:1295px;top:641.5px;" width="14.5" height="14.5" viewBox="0 0 16 16"><path d="M1.5 2 H14.5 L9.5 8 V14 L6.5 12 V8 Z" fill="none" stroke="#e6e6e6" stroke-width="1.2" stroke-linecap="round" stroke-linejoin="round" /></svg>
<svg style="left:1312px;top:644.5px;" width="10" height="10" viewBox="0 0 10 10"><path d="M1.8 3.7 L5 6.9 L8.2 3.7" fill="none" stroke="#d0d0d0" stroke-width="1.3" stroke-linecap="round" stroke-linejoin="round"/></svg>
<div style="left:1330px;top:639.5px;width:30.5px;height:18.5px;background:#282828;border-radius:4px;border:1px solid #3c3c3c;"></div>
<svg style="left:1333px;top:641.5px;" width="14.5" height="14.5" viewBox="0 0 16 16"><path d="M1.5 4.5 V1.5 H4.5 M11.5 1.5 H14.5 V4.5 M14.5 11.5 V14.5 H11.5 M4.5 14.5 H1.5 V11.5" fill="none" stroke="#e6e6e6" stroke-width="1.2" stroke-linecap="round" stroke-linejoin="round" /><circle cx="8" cy="8" r="1.8" fill="#e6e6e6"/></svg>
<svg style="left:1349px;top:644.5px;" width="10" height="10" viewBox="0 0 10 10"><path d="M1.8 3.7 L5 6.9 L8.2 3.7" fill="none" stroke="#d0d0d0" stroke-width="1.3" stroke-linecap="round" stroke-linejoin="round"/></svg>
<div style="left:1367px;top:639.5px;width:18.5px;height:18.5px;background:#4772b3;border-radius:4px 0 0 4px;"></div>
<svg style="left:1369px;top:641.5px;" width="14.5" height="14.5" viewBox="0 0 16 16"><path d="M4.6 14 V8 A3.9 3.9 0 0 1 12.4 8 V14" fill="none" stroke="#ffffff" stroke-width="2.9" stroke-linecap="round" stroke-linejoin="round" transform="rotate(45 9 8)" stroke-linecap="butt"/><path d="M1 9.5 H3.4 V13 H1 M3.4 13 V15" fill="none" stroke="#ffffff" stroke-width="1" stroke-linecap="round" stroke-linejoin="round" /></svg>
<div style="left:1386px;top:639.5px;width:19.5px;height:18.5px;background:#282828;border-radius:0 4px 4px 0;border:1px solid #3c3c3c;"></div>
<svg style="left:1390.5px;top:644.5px;" width="10" height="10" viewBox="0 0 10 10"><path d="M1.8 3.7 L5 6.9 L8.2 3.7" fill="none" stroke="#d0d0d0" stroke-width="1.3" stroke-linecap="round" stroke-linejoin="round"/></svg>
<div style="left:1412px;top:639.5px;width:18.5px;height:18.5px;background:#545454;border-radius:4px 0 0 4px;"></div>
<svg style="left:1414px;top:641.5px;" width="14.5" height="14.5" viewBox="0 0 16 16"><circle cx="8" cy="8" r="6" fill="none" stroke="#a0a0a0" stroke-width="1.1"/><circle cx="8" cy="8" r="1.7" fill="#a0a0a0"/></svg>
<div style="left:1431px;top:639.5px;width:31px;height:18.5px;background:#2c2c2c;border-radius:0 4px 4px 0;border:1px solid #3c3c3c;"></div>
<svg style="left:1433.5px;top:641.5px;" width="14.5" height="14.5" viewBox="0 0 16 16"><path d="M1 13.5 Q5 13.5 6.5 7 Q8 1 9.5 7 Q11 13.5 15 13.5" fill="none" stroke="#5a5a5a" stroke-width="1.1" stroke-linecap="round" stroke-linejoin="round" /></svg>
<svg style="left:1450.5px;top:644.5px;" width="10" height="10" viewBox="0 0 10 10"><path d="M1.8 3.7 L5 6.9 L8.2 3.7" fill="none" stroke="#5a5a5a" stroke-width="1.3" stroke-linecap="round" stroke-linejoin="round"/></svg>
<div style="left:0px;top:661px;width:204px;height:164px;background:#1c1c1c;"></div>
<div style="left:0px;top:664px;width:178.5px;height:17.5px;background:#1d1d1d;border-radius:0 4px 4px 0;border:1px solid #3c3c3c;border-left:none;"></div>
<svg style="left:1px;top:665.5px;" width="14.5" height="14.5" viewBox="0 0 16 16"><circle cx="9.5" cy="6.5" r="4.3" fill="none" stroke="#e0e0e0" stroke-width="1.4"/><path d="M6.3 9.7 L1.8 14.2" fill="none" stroke="#e0e0e0" stroke-width="1.6" stroke-linecap="round" stroke-linejoin="round" /></svg>
<div style="left:22px;top:664.5px;height:16px;line-height:16px;font-size:12px;color:#7a7a7a;white-space:nowrap;">Search</div>
<div style="left:179px;top:664px;width:21.5px;height:17.5px;background:#545454;border-radius:0 4px 4px 0;"></div>
<svg style="left:182px;top:665px;" width="15.5" height="15.5" viewBox="0 0 16 16"><path d="M1.5 8 H14.5 M4.5 5 L1.5 8 L4.5 11 M11.5 5 L14.5 8 L11.5 11" fill="none" stroke="#e0e0e0" stroke-width="1.2" stroke-linecap="round" stroke-linejoin="round" /></svg>
<div style="left:0px;top:686px;width:203px;height:16.5px;background:#1d4f80;"></div>
<svg style="left:-1.5px;top:688.5px;" width="10" height="10" viewBox="0 0 10 10"><path d="M1.4 3.5 L5 7.1 L8.6 3.5" fill="none" stroke="#e0e0e0" stroke-width="1.3" stroke-linecap="round" stroke-linejoin="round"/></svg>
<svg style="left:11px;top:686px;" width="16" height="16" viewBox="0 0 16 16"><circle cx="8" cy="2.8" r="2" fill="#f0f0f0"/><path d="M2 5.5 L8 7 L14 5.5 M8 7 V9.5 M8 9.5 L4.5 14.5 M8 9.5 L11.5 14.5" fill="none" stroke="#f0f0f0" stroke-width="2.2" stroke-linecap="round" stroke-linejoin="round" /></svg>
<svg style="left:29.5px;top:686.5px;" width="15" height="15" viewBox="0 0 16 16"><path d="M9.5 1.5 L14.5 6.5 L12.5 7 L10 9.5 L10 12 L4 6 L6.5 6 L9 3.5 Z M7 9 L2 14" fill="none" stroke="#8aa8c8" stroke-width="1.1" stroke-linecap="round" stroke-linejoin="round" /></svg>
<svg style="left:47px;top:686.5px;" width="15" height="15" viewBox="0 0 16 16"><path d="M1 8 Q8 0.8 15 8 Q8 15.2 1 8 Z" fill="none" stroke="#ffffff" stroke-width="1.5" stroke-linecap="round" stroke-linejoin="round" /><circle cx="8" cy="8" r="2.6" fill="#ffffff"/></svg>
<div style="left:65px;top:686px;height:16px;line-height:16px;font-size:12px;color:#f5b030;white-space:nowrap;">Armature</div>
<div style="left:1px;top:704px;width:202px;height:16.5px;background:#13305a;"></div>
<svg style="left:5px;top:707px;" width="10" height="10" viewBox="0 0 10 10"><path d="M3.3 1.6 L6.7 5 L3.3 8.4" fill="none" stroke="#d0d0d0" stroke-width="1.3" stroke-linecap="round" stroke-linejoin="round"/></svg>
<svg style="left:17px;top:704px;" width="16" height="16" viewBox="0 0 16 16"><path d="M0.4 4 L2.7 1.7 L5 4 L2.7 6.3 Z M11 4 L13.3 1.7 L15.6 4 L13.3 6.3 Z" fill="#e6e6e6" /><path d="M4.6 2 H11.4 L10 4 L11.4 6 H4.6 L6 4 Z" fill="#e6e6e6" opacity="0.55"/><path d="M8 8.4 L11 11.4 L8 14.4 L5 11.4 Z" fill="none" stroke="#e6e6e6" stroke-width="1.1" stroke-linecap="round" stroke-linejoin="round" /></svg>
<div style="left:38px;top:704px;height:16px;line-height:16px;font-size:12px;color:#e0e0e0;white-space:nowrap;">StartingPose_Avatar</div>
<div style="left:204px;top:661px;width:1046px;height:164px;background:#222222;"></div>
<svg style="left:204px;top:661px;" width="1046" height="164" viewBox="0 0 1046 164"><rect x="108" y="23" width="938" height="141" fill="#292929"/><rect x="108" y="98" width="938" height="35.5" fill="#323232"/><rect x="-0.5" y="23" width="1" height="141" fill="#191919"/><rect x="26.5" y="23" width="1" height="141" fill="#242424"/><rect x="53.5" y="23" width="1" height="141" fill="#191919"/><rect x="80.5" y="23" width="1" height="141" fill="#242424"/><rect x="107.5" y="23" width="1" height="141" fill="#191919"/><rect x="134.5" y="23" width="1" height="141" fill="#242424"/><rect x="161.5" y="23" width="1" height="141" fill="#191919"/><rect x="188.5" y="23" width="1" height="141" fill="#242424"/><rect x="215.5" y="23" width="1" height="141" fill="#191919"/><rect x="242.5" y="23" width="1" height="141" fill="#242424"/><rect x="269.5" y="23" width="1" height="141" fill="#191919"/><rect x="296.5" y="23" width="1" height="141" fill="#242424"/><rect x="323.5" y="23" width="1" height="141" fill="#191919"/><rect x="350.5" y="23" width="1" height="141" fill="#242424"/><rect x="377.5" y="23" width="1" height="141" fill="#191919"/><rect x="404.5" y="23" width="1" height="141" fill="#242424"/><rect x="431.5" y="23" width="1" height="141" fill="#191919"/><rect x="458.5" y="23" width="1" height="141" fill="#242424"/><rect x="485.5" y="23" width="1" height="141" fill="#191919"/><rect x="512.5" y="23" width="1" height="141" fill="#242424"/><rect x="539.5" y="23" width="1" height="141" fill="#191919"/><rect x="566.5" y="23" width="1" height="141" fill="#242424"/><rect x="593.5" y="23" width="1" height="141" fill="#191919"/><rect x="620.5" y="23" width="1" height="141" fill="#242424"/><rect x="647.5" y="23" width="1" height="141" fill="#191919"/><rect x="674.5" y="23" width="1" height="141" fill="#242424"/><rect x="701.5" y="23" width="1" height="141" fill="#191919"/><rect x="728.5" y="23" width="1" height="141" fill="#242424"/><rect x="755.5" y="23" width="1" height="141" fill="#191919"/><rect x="782.5" y="23" width="1" height="141" fill="#242424"/><rect x="809.5" y="23" width="1" height="141" fill="#191919"/><rect x="836.5" y="23" width="1" height="141" fill="#242424"/><rect x="863.5" y="23" width="1" height="141" fill="#191919"/><rect x="890.5" y="23" width="1" height="141" fill="#242424"/><rect x="917.5" y="23" width="1" height="141" fill="#191919"/><rect x="944.5" y="23" width="1" height="141" fill="#242424"/><rect x="971.5" y="23" width="1" height="141" fill="#191919"/><rect x="998.5" y="23" width="1" height="141" fill="#242424"/><rect x="1025.5" y="23" width="1" height="141" fill="#191919"/><rect x="0" y="25" width="1046" height="1" fill="#1e1e1e"/><rect x="0" y="70" width="1046" height="1" fill="#252525"/><rect x="0" y="0" width="1046" height="23" fill="#151515"/><rect x="0" y="114.3" width="1046" height="1.6" fill="#3f6ab0"/></svg>
<div style="left:400px;top:665.5px;height:16px;line-height:16px;font-size:12px;color:#c8c8c8;white-space:nowrap;width:40px;text-align:center;">10</div>
<div style="left:508px;top:665.5px;height:16px;line-height:16px;font-size:12px;color:#c8c8c8;white-space:nowrap;width:40px;text-align:center;">20</div>
<div style="left:616px;top:665.5px;height:16px;line-height:16px;font-size:12px;color:#c8c8c8;white-space:nowrap;width:40px;text-align:center;">30</div>
<div style="left:724px;top:665.5px;height:16px;line-height:16px;font-size:12px;color:#c8c8c8;white-space:nowrap;width:40px;text-align:center;">40</div>
<div style="left:832px;top:665.5px;height:16px;line-height:16px;font-size:12px;color:#c8c8c8;white-space:nowrap;width:40px;text-align:center;">50</div>
<div style="left:940px;top:665.5px;height:16px;line-height:16px;font-size:12px;color:#c8c8c8;white-space:nowrap;width:40px;text-align:center;">60</div>
<div style="left:1048px;top:665.5px;height:16px;line-height:16px;font-size:12px;color:#c8c8c8;white-space:nowrap;width:40px;text-align:center;">70</div>
<div style="left:1156px;top:665.5px;height:16px;line-height:16px;font-size:12px;color:#c8c8c8;white-space:nowrap;width:40px;text-align:center;">80</div>
<div style="left:211.5px;top:678px;height:16px;line-height:16px;font-size:12px;color:#e0e0e0;white-space:nowrap;">5</div>
<div style="left:211.5px;top:768px;height:16px;line-height:16px;font-size:12px;color:#e0e0e0;white-space:nowrap;">0</div>
<div style="left:310.9px;top:680px;width:2.2px;height:145px;background:#4772b3;"></div>
<div style="left:300.3px;top:664px;width:24px;height:17px;background:#4772b3;border-radius:4.5px;"></div>
<div style="left:300.3px;top:664.5px;height:16px;line-height:16px;font-size:12px;color:#ffffff;white-space:nowrap;width:24px;text-align:center;">0</div>
<div style="left:211.5px;top:815px;width:1029px;height:8.5px;background:#4c4c4c;border-radius:4.5px;"></div>
<svg style="left:212.5px;top:816px;" width="6.5" height="6.5" viewBox="0 0 6.5 6.5"><circle cx="3.25" cy="3.25" r="2.8" fill="#2a2a2a" stroke="#6a6a6a" stroke-width="0.8"/></svg>
<svg style="left:1232.5px;top:816px;" width="6.5" height="6.5" viewBox="0 0 6.5 6.5"><circle cx="3.25" cy="3.25" r="2.8" fill="#2a2a2a" stroke="#6a6a6a" stroke-width="0.8"/></svg>
<div style="left:1239px;top:686px;width:8.5px;height:127px;background:#4c4c4c;border-radius:4.5px;"></div>
<svg style="left:1240px;top:687px;" width="6.5" height="6.5" viewBox="0 0 6.5 6.5"><circle cx="3.25" cy="3.25" r="2.8" fill="#2a2a2a" stroke="#6a6a6a" stroke-width="0.8"/></svg>
<svg style="left:1240px;top:805.5px;" width="6.5" height="6.5" viewBox="0 0 6.5 6.5"><circle cx="3.25" cy="3.25" r="2.8" fill="#2a2a2a" stroke="#6a6a6a" stroke-width="0.8"/></svg>
<div style="left:1250px;top:661px;width:218.5px;height:164px;background:#303030;"></div>
<div style="left:1258px;top:663px;width:204.5px;height:123px;background:#3d3d3d;border-radius:5px;"></div>
<svg style="left:1266px;top:671.5px;" width="10" height="10" viewBox="0 0 10 10"><path d="M1.4 3.5 L5 7.1 L8.6 3.5" fill="none" stroke="#d0d0d0" stroke-width="1.3" stroke-linecap="round" stroke-linejoin="round"/></svg>
<div style="left:1279px;top:669.5px;width:12.5px;height:12.5px;background:#4772b3;border-radius:2.5px;"></div>
<svg style="left:1279px;top:669.5px;" width="12.5" height="12.5" viewBox="0 0 12.5 12.5"><path d="M3 6.4 L5.4 8.8 L9.8 3.4" fill="none" stroke="#fff" stroke-width="1.7" stroke-linecap="round" stroke-linejoin="round"/></svg>
<div style="left:1294px;top:668px;height:16px;line-height:16px;font-size:12px;color:#ffffff;white-space:nowrap;">Show Cursor</div>
<svg style="left:1444.5px;top:673.5px;" width="8" height="3" viewBox="0 0 8 3"><rect x="0" y="0" width="1" height="1" fill="#777"/><rect x="0" y="2" width="1" height="1" fill="#777"/><rect x="2" y="0" width="1" height="1" fill="#777"/><rect x="2" y="2" width="1" height="1" fill="#777"/><rect x="4" y="0" width="1" height="1" fill="#777"/><rect x="4" y="2" width="1" height="1" fill="#777"/><rect x="6" y="0" width="1" height="1" fill="#777"/><rect x="6" y="2" width="1" height="1" fill="#777"/></svg>
<div style="left:1260px;top:698px;height:16px;line-height:16px;font-size:12px;color:#e0e0e0;white-space:nowrap;width:76.5px;text-align:right;">Cursor X</div>
<div style="left:1347px;top:697px;width:106px;height:18px;background:#545454;border-radius:4px 4px 0 0;"></div>
<div style="left:1347px;top:698px;height:16px;line-height:16px;font-size:12px;color:#e6e6e6;white-space:nowrap;width:106px;text-align:center;">0</div>
<div style="left:1260px;top:717.5px;height:16px;line-height:16px;font-size:12px;color:#e0e0e0;white-space:nowrap;width:76.5px;text-align:right;">Y</div>
<div style="left:1347px;top:716px;width:106px;height:18.5px;background:#545454;border-radius:0 0 4px 4px;"></div>
<div style="left:1347px;top:717px;height:16px;line-height:16px;font-size:12px;color:#e6e6e6;white-space:nowrap;width:106px;text-align:center;">0.000</div>
<div style="left:1267px;top:739.5px;width:186px;height:18px;background:#545454;border-radius:4px 4px 0 0;"></div>
<div style="left:1267px;top:740.3px;height:16px;line-height:16px;font-size:12px;color:#e6e6e6;white-space:nowrap;width:186px;text-align:center;">Cursor to Selection</div>
<div style="left:1267px;top:758.5px;width:186px;height:18.5px;background:#545454;border-radius:0 0 4px 4px;"></div>
<div style="left:1267px;top:759.5px;height:16px;line-height:16px;font-size:12px;color:#e6e6e6;white-space:nowrap;width:186px;text-align:center;">Cursor Value to Selection</div>
<div style="left:0px;top:829px;width:1468.5px;height:120px;background:#303030;border-radius:5px;overflow:hidden;"></div>
<div style="left:3px;top:832px;width:30.5px;height:18.5px;background:#282828;border-radius:4px;border:1px solid #3c3c3c;"></div>
<svg style="left:5.5px;top:833.5px;" width="15" height="15" viewBox="0 0 16 16"><path d="M0.4 4 L2.7 1.7 L5 4 L2.7 6.3 Z M11 4 L13.3 1.7 L15.6 4 L13.3 6.3 Z" fill="#e6e6e6" /><path d="M4.6 2 H11.4 L10 4 L11.4 6 H4.6 L6 4 Z" fill="#e6e6e6" opacity="0.55"/><path d="M8 8.4 L11 11.4 L8 14.4 L5 11.4 Z" fill="none" stroke="#e6e6e6" stroke-width="1.1" stroke-linecap="round" stroke-linejoin="round" /></svg>
<svg style="left:22px;top:837px;" width="10" height="10" viewBox="0 0 10 10"><path d="M1.8 3.7 L5 6.9 L8.2 3.7" fill="none" stroke="#d0d0d0" stroke-width="1.3" stroke-linecap="round" stroke-linejoin="round"/></svg>
<div style="left:40px;top:832px;width:128.5px;height:18.5px;background:#282828;border-radius:4px;border:1px solid #3c3c3c;"></div>
<svg style="left:43.5px;top:833.5px;" width="15" height="15" viewBox="0 0 16 16"><rect x="4.2" y="4.2" width="7.6" height="7.6" rx="0" fill="#e6e6e6" /><path d="M1.5 4.5 V1.5 H4.5 M11.5 1.5 H14.5 V4.5 M14.5 11.5 V14.5 H11.5 M4.5 14.5 H1.5 V11.5" fill="none" stroke="#e6e6e6" stroke-width="1.2" stroke-linecap="round" stroke-linejoin="round" /></svg>
<div style="left:65px;top:833.5px;height:16px;line-height:16px;font-size:12px;color:#e6e6e6;white-space:nowrap;">Action Editor</div>
<svg style="left:156.5px;top:837px;" width="10" height="10" viewBox="0 0 10 10"><path d="M1.8 3.7 L5 6.9 L8.2 3.7" fill="none" stroke="#d0d0d0" stroke-width="1.3" stroke-linecap="round" stroke-linejoin="round"/></svg>
<div style="left:181px;top:833.5px;height:16px;line-height:16px;font-size:12px;color:#dcdcdc;white-space:nowrap;">View</div>
<div style="left:222px;top:833.5px;height:16px;line-height:16px;font-size:12px;color:#dcdcdc;white-space:nowrap;">Select</div>
<div style="left:269px;top:833.5px;height:16px;line-height:16px;font-size:12px;color:#dcdcdc;white-space:nowrap;">Marker</div>
<div style="left:320px;top:833.5px;height:16px;line-height:16px;font-size:12px;color:#dcdcdc;white-space:nowrap;">Channel</div>
<div style="left:379px;top:833.5px;height:16px;line-height:16px;font-size:12px;color:#dcdcdc;white-space:nowrap;">Key</div>
<div style="left:413px;top:833.5px;height:16px;line-height:16px;font-size:12px;color:#dcdcdc;white-space:nowrap;">Action</div>
<div style="left:509px;top:832px;width:31px;height:18.5px;background:#282828;border-radius:4px 0 0 4px;border:1px solid #3c3c3c;"></div>
<svg style="left:511.5px;top:833.5px;" width="15" height="15" viewBox="0 0 16 16"><path d="M0.4 4 L2.7 1.7 L5 4 L2.7 6.3 Z M11 4 L13.3 1.7 L15.6 4 L13.3 6.3 Z" fill="#e6e6e6" /><path d="M4.6 2 H11.4 L10 4 L11.4 6 H4.6 L6 4 Z" fill="#e6e6e6" opacity="0.55"/><path d="M8 8.4 L11 11.4 L8 14.4 L5 11.4 Z" fill="none" stroke="#e6e6e6" stroke-width="1.1" stroke-linecap="round" stroke-linejoin="round" /></svg>
<svg style="left:528.5px;top:837px;" width="10" height="10" viewBox="0 0 10 10"><path d="M1.8 3.7 L5 6.9 L8.2 3.7" fill="none" stroke="#d0d0d0" stroke-width="1.3" stroke-linecap="round" stroke-linejoin="round"/></svg>
<div style="left:540px;top:832px;width:122px;height:18.5px;background:#1d1d1d;border:1px solid #3c3c3c;"></div>
<div style="left:547px;top:833.5px;height:16px;line-height:16px;font-size:12px;color:#e6e6e6;white-space:nowrap;">StartingPose_Avatar</div>
<div style="left:662.5px;top:832px;width:23px;height:18.5px;background:#545454;"></div>
<div style="left:662.5px;top:833.5px;height:16px;line-height:16px;font-size:12px;color:#e6e6e6;white-space:nowrap;width:23px;text-align:center;">2</div>
<div style="left:686.5px;top:832px;width:19.5px;height:18.5px;background:#4772b3;"></div>
<svg style="left:688.5px;top:834px;" width="14.5" height="14.5" viewBox="0 0 16 16"><path d="M8 1 Q11 2.8 14.5 2.8 Q14.5 11.5 8 15 Q1.5 11.5 1.5 2.8 Q5 2.8 8 1 Z" fill="#ffffff" /><path d="M4.8 7.8 L7.2 10.2 L11.4 5.4" fill="none" stroke="#4772b3" stroke-width="1.8" stroke-linecap="round" stroke-linejoin="round" /></svg>
<div style="left:707px;top:832px;width:19px;height:18.5px;background:#545454;"></div>
<svg style="left:709px;top:834px;" width="14.5" height="14.5" viewBox="0 0 16 16"><path d="M5.5 4 V1.5 H14.5 V10.5 H12" fill="none" stroke="#e0e0e0" stroke-width="1.1" stroke-linecap="round" stroke-linejoin="round" /><rect x="1.5" y="4.5" width="9.5" height="10" rx="0" fill="none" stroke="#e0e0e0" stroke-width="1.1" /></svg>
<div style="left:727px;top:832px;width:19px;height:18.5px;background:#545454;border-radius:0 4px 4px 0;"></div>
<svg style="left:729.5px;top:834.5px;" width="13.5" height="13.5" viewBox="0 0 16 16"><path d="M3.5 3.5 L12.5 12.5 M12.5 3.5 L3.5 12.5" fill="none" stroke="#e0e0e0" stroke-width="1.4" stroke-linecap="round" stroke-linejoin="round" /></svg>
<div style="left:755px;top:832px;width:30.5px;height:18.5px;background:#282828;border-radius:4px 0 0 4px;border:1px solid #3c3c3c;"></div>
<svg style="left:757.5px;top:833.5px;" width="15" height="15" viewBox="0 0 16 16"><path d="M0.4 4 L2.7 1.7 L5 4 L2.7 6.3 Z M11 4 L13.3 1.7 L15.6 4 L13.3 6.3 Z" fill="#e6e6e6" /><path d="M4.6 2 H11.4 L10 4 L11.4 6 H4.6 L6 4 Z" fill="#e6e6e6" opacity="0.55"/><path d="M3 8.5 V12.5 H6" fill="none" stroke="#e6e6e6" stroke-width="1.1" stroke-linecap="round" stroke-linejoin="round" /><rect x="8" y="11" width="7" height="2.8" rx="0" fill="#e6e6e6" /></svg>
<svg style="left:774.5px;top:837px;" width="10" height="10" viewBox="0 0 10 10"><path d="M1.8 3.7 L5 6.9 L8.2 3.7" fill="none" stroke="#d0d0d0" stroke-width="1.3" stroke-linecap="round" stroke-linejoin="round"/></svg>
<div style="left:785.5px;top:832px;width:109px;height:18.5px;background:#1d1d1d;border:1px solid #3c3c3c;"></div>
<div style="left:793px;top:833.5px;height:16px;line-height:16px;font-size:12px;color:#e6e6e6;white-space:nowrap;">Avatar_Animation</div>
<div style="left:895px;top:832px;width:19.5px;height:18.5px;background:#545454;"></div>
<svg style="left:897.5px;top:834px;" width="14.5" height="14.5" viewBox="0 0 16 16"><path d="M5.5 4 V1.5 H14.5 V10.5 H12" fill="none" stroke="#e0e0e0" stroke-width="1.1" stroke-linecap="round" stroke-linejoin="round" /><rect x="1.5" y="4.5" width="9.5" height="10" rx="0" fill="none" stroke="#e0e0e0" stroke-width="1.1" /></svg>
<div style="left:915.5px;top:832px;width:19px;height:18.5px;background:#545454;border-radius:0 4px 4px 0;"></div>
<svg style="left:918px;top:834.5px;" width="13.5" height="13.5" viewBox="0 0 16 16"><path d="M3.5 3.5 L12.5 12.5 M12.5 3.5 L3.5 12.5" fill="none" stroke="#e0e0e0" stroke-width="1.4" stroke-linecap="round" stroke-linejoin="round" /></svg>
<div style="left:1244px;top:832px;width:18.5px;height:18.5px;background:#545454;border-radius:4px 0 0 4px;"></div>
<svg style="left:1246px;top:834px;" width="14.5" height="14.5" viewBox="0 0 16 16"><path d="M0.4 4 L2.7 1.7 L5 4 L2.7 6.3 Z M11 4 L13.3 1.7 L15.6 4 L13.3 6.3 Z" fill="#e6e6e6" /><path d="M4.6 2 H11.4 L10 4 L11.4 6 H4.6 L6 4 Z" fill="#e6e6e6" opacity="0.55"/><path d="M3 8.5 V12.5 H6" fill="none" stroke="#e6e6e6" stroke-width="1.1" stroke-linecap="round" stroke-linejoin="round" /><rect x="8" y="11" width="7" height="2.8" rx="0" fill="#e6e6e6" /></svg>
<div style="left:1263.5px;top:832px;width:19px;height:18.5px;background:#4772b3;"></div>
<svg style="left:1265.5px;top:834px;" width="14.5" height="14.5" viewBox="0 0 16 16"><path d="M3 1.5 L13.5 7.5 L8.8 8.6 L7 14 Z" fill="#ffffff" /></svg>
<div style="left:1283.5px;top:832px;width:19px;height:18.5px;background:#4772b3;"></div>
<svg style="left:1285.5px;top:834px;" width="14.5" height="14.5" viewBox="0 0 16 16"><path d="M1.5 4.5 V1.5 H4.5 M11.5 1.5 H14.5 V4.5 M14.5 11.5 V14.5 H11.5 M4.5 14.5 H1.5 V11.5" fill="none" stroke="#ffffff" stroke-width="1.2" stroke-linecap="round" stroke-linejoin="round" /><rect x="4" y="4" width="8" height="8" rx="0" fill="none" stroke="#ffffff" stroke-width="1" stroke-dasharray="1.5 1.2"/></svg>
<div style="left:1303.5px;top:832px;width:19px;height:18.5px;background:#545454;border-radius:0 4px 4px 0;"></div>
<svg style="left:1305.5px;top:834px;" width="14.5" height="14.5" viewBox="0 0 16 16"><path d="M8 1 L15.5 14.5 H0.5 Z" fill="#e6e6e6" /><rect x="7.1" y="5" width="1.8" height="5.2" rx="0.6" fill="#4a4a4a" /><circle cx="8" cy="12.3" r="1.05" fill="#4a4a4a"/></svg>
<div style="left:1328.5px;top:832px;width:31px;height:18.5px;background:#282828;border-radius:4px;border:1px solid #3c3c3c;"></div>
<svg style="left:1331px;top:834px;" width="14.5" height="14.5" viewBox="0 0 16 16"><path d="M1.5 2 H14.5 L9.5 8 V14 L6.5 12 V8 Z" fill="none" stroke="#e6e6e6" stroke-width="1.2" stroke-linecap="round" stroke-linejoin="round" /></svg>
<svg style="left:1348px;top:837px;" width="10" height="10" viewBox="0 0 10 10"><path d="M1.8 3.7 L5 6.9 L8.2 3.7" fill="none" stroke="#d0d0d0" stroke-width="1.3" stroke-linecap="round" stroke-linejoin="round"/></svg>
<div style="left:1366px;top:832px;width:18.5px;height:18.5px;background:#4772b3;border-radius:4px 0 0 4px;"></div>
<svg style="left:1368px;top:834px;" width="14.5" height="14.5" viewBox="0 0 16 16"><path d="M4.6 14 V8 A3.9 3.9 0 0 1 12.4 8 V14" fill="none" stroke="#ffffff" stroke-width="2.9" stroke-linecap="round" stroke-linejoin="round" transform="rotate(45 9 8)" stroke-linecap="butt"/><path d="M1 9.5 H3.4 V13 H1 M3.4 13 V15" fill="none" stroke="#ffffff" stroke-width="1" stroke-linecap="round" stroke-linejoin="round" /></svg>
<div style="left:1385px;top:832px;width:19.5px;height:18.5px;background:#282828;border-radius:0 4px 4px 0;border:1px solid #3c3c3c;"></div>
<svg style="left:1389.5px;top:837px;" width="10" height="10" viewBox="0 0 10 10"><path d="M1.8 3.7 L5 6.9 L8.2 3.7" fill="none" stroke="#d0d0d0" stroke-width="1.3" stroke-linecap="round" stroke-linejoin="round"/></svg>
<div style="left:1411px;top:832px;width:18.5px;height:18.5px;background:#545454;border-radius:4px 0 0 4px;"></div>
<svg style="left:1413px;top:834px;" width="14.5" height="14.5" viewBox="0 0 16 16"><circle cx="8" cy="8" r="6" fill="none" stroke="#a0a0a0" stroke-width="1.1"/><circle cx="8" cy="8" r="1.7" fill="#a0a0a0"/></svg>
<div style="left:1430px;top:832px;width:31.5px;height:18.5px;background:#2c2c2c;border-radius:0 4px 4px 0;border:1px solid #3c3c3c;"></div>
<svg style="left:1432.5px;top:834px;" width="14.5" height="14.5" viewBox="0 0 16 16"><path d="M1 13.5 Q5 13.5 6.5 7 Q8 1 9.5 7 Q11 13.5 15 13.5" fill="none" stroke="#5a5a5a" stroke-width="1.1" stroke-linecap="round" stroke-linejoin="round" /></svg>
<svg style="left:1449.5px;top:837px;" width="10" height="10" viewBox="0 0 10 10"><path d="M1.8 3.7 L5 6.9 L8.2 3.7" fill="none" stroke="#5a5a5a" stroke-width="1.3" stroke-linecap="round" stroke-linejoin="round"/></svg>
<div style="left:0px;top:853px;width:194px;height:96px;background:#1c1c1c;"></div>
<div style="left:0px;top:856px;width:169.5px;height:17.5px;background:#1d1d1d;border-radius:0 4px 4px 0;border:1px solid #3c3c3c;border-left:none;"></div>
<svg style="left:1px;top:857.5px;" width="14.5" height="14.5" viewBox="0 0 16 16"><circle cx="9.5" cy="6.5" r="4.3" fill="none" stroke="#e0e0e0" stroke-width="1.4"/><path d="M6.3 9.7 L1.8 14.2" fill="none" stroke="#e0e0e0" stroke-width="1.6" stroke-linecap="round" stroke-linejoin="round" /></svg>
<div style="left:22px;top:856.5px;height:16px;line-height:16px;font-size:12px;color:#7a7a7a;white-space:nowrap;">Search</div>
<div style="left:170px;top:856px;width:22px;height:17.5px;background:#545454;border-radius:0 4px 4px 0;"></div>
<svg style="left:173px;top:857px;" width="15.5" height="15.5" viewBox="0 0 16 16"><path d="M1.5 8 H14.5 M4.5 5 L1.5 8 L4.5 11 M11.5 5 L14.5 8 L11.5 11" fill="none" stroke="#e0e0e0" stroke-width="1.2" stroke-linecap="round" stroke-linejoin="round" /></svg>
<div style="left:0px;top:878px;width:194px;height:16.5px;background:#452a2a;"></div>
<svg style="left:-1.5px;top:880.5px;" width="10" height="10" viewBox="0 0 10 10"><path d="M1.4 3.5 L5 7.1 L8.6 3.5" fill="none" stroke="#e0e0e0" stroke-width="1.3" stroke-linecap="round" stroke-linejoin="round"/></svg>
<div style="left:14px;top:878px;height:16px;line-height:16px;font-size:12px;color:#dcdcdc;white-space:nowrap;">Summary</div>
<div style="left:0px;top:896px;width:194px;height:16.5px;background:#1d4f80;"></div>
<svg style="left:-1.5px;top:898.5px;" width="10" height="10" viewBox="0 0 10 10"><path d="M1.4 3.5 L5 7.1 L8.6 3.5" fill="none" stroke="#e0e0e0" stroke-width="1.3" stroke-linecap="round" stroke-linejoin="round"/></svg>
<svg style="left:11px;top:896px;" width="16" height="16" viewBox="0 0 16 16"><path d="M0.4 4 L2.7 1.7 L5 4 L2.7 6.3 Z M11 4 L13.3 1.7 L15.6 4 L13.3 6.3 Z" fill="#f0f0f0" /><path d="M4.6 2 H11.4 L10 4 L11.4 6 H4.6 L6 4 Z" fill="#f0f0f0" opacity="0.55"/><path d="M3 8.5 V12.5 H6" fill="none" stroke="#f0f0f0" stroke-width="1.1" stroke-linecap="round" stroke-linejoin="round" /><rect x="8" y="11" width="7" height="2.8" rx="0" fill="#f0f0f0" /></svg>
<div style="left:31px;top:896px;height:16px;line-height:16px;font-size:12px;color:#f5b030;white-space:nowrap;">Avatar_Animation</div>
<svg style="left:177px;top:896.5px;" width="15.5" height="15.5" viewBox="0 0 16 16"><rect x="4.2" y="4.2" width="7.6" height="7.6" rx="0" fill="#b8cce6" /><path d="M1.5 4.5 V1.5 H4.5 M11.5 1.5 H14.5 V4.5 M14.5 11.5 V14.5 H11.5 M4.5 14.5 H1.5 V11.5" fill="none" stroke="#b8cce6" stroke-width="1.2" stroke-linecap="round" stroke-linejoin="round" /></svg>
<div style="left:1px;top:914px;width:193px;height:16.5px;background:#1b3a2c;border-radius:8px 0 0 8px;"></div>
<svg style="left:5px;top:917px;" width="10" height="10" viewBox="0 0 10 10"><path d="M3.3 1.6 L6.7 5 L3.3 8.4" fill="none" stroke="#d0d0d0" stroke-width="1.3" stroke-linecap="round" stroke-linejoin="round"/></svg>
<svg style="left:19px;top:914.5px;" width="15" height="15" viewBox="0 0 16 16"><path d="M9.5 1.5 L14.5 6.5 L12.5 7 L10 9.5 L10 12 L4 6 L6.5 6 L9 3.5 Z M7 9 L2 14" fill="none" stroke="#c8c8c8" stroke-width="1.1" stroke-linecap="round" stroke-linejoin="round" /></svg>
<div style="left:38px;top:914px;height:16px;line-height:16px;font-size:11px;color:#e0e0e0;white-space:nowrap;">CTRL_Avatar_Upper</div>
<svg style="left:145px;top:914.5px;" width="14" height="14" viewBox="0 0 16 16"><path d="M3 13 L9 7" fill="none" stroke="#f0f0f0" stroke-width="2.6" stroke-linecap="round" stroke-linejoin="round" /><path d="M9 3.5 A3.2 3.2 0 1 0 12.5 7 L10.5 7.5 L8.5 5.5 Z" fill="#f0f0f0" stroke="#f0f0f0" stroke-width="1.2" stroke-linecap="round" stroke-linejoin="round" /></svg>
<svg style="left:163.5px;top:916px;" width="11.5" height="11.5" viewBox="0 0 16 16"><rect x="1.5" y="1.5" width="13" height="13" rx="1.5" fill="#e8e8e8" /><path d="M4.2 8.2 L7 11 L12 4.8" fill="none" stroke="#1d1d1d" stroke-width="2" stroke-linecap="round" stroke-linejoin="round" /></svg>
<svg style="left:178.5px;top:914px;" width="15" height="15" viewBox="0 0 16 16"><rect x="6" y="8" width="7.5" height="5.5" rx="1" fill="none" stroke="#d0d0d0" stroke-width="1.1" /><path d="M7.5 8 V5 A2.6 2.6 0 0 0 2.3 5 V6.5" fill="none" stroke="#d0d0d0" stroke-width="1.1" stroke-linecap="round" stroke-linejoin="round" /><rect x="9" y="10" width="1.6" height="1.6" rx="0" fill="#d0d0d0" /></svg>
<div style="left:194px;top:853px;width:1056px;height:96px;background:#222222;"></div>
<svg style="left:194px;top:853px;" width="1056" height="96" viewBox="0 0 1056 96"><rect x="272" y="23" width="784" height="73" fill="#2b2b2b"/><rect x="0" y="25" width="1056" height="16.5" fill="#352525"/><rect x="272" y="25" width="784" height="16.5" fill="#3c2c2c"/><rect x="0" y="43" width="1056" height="16.5" fill="#243445"/><rect x="272" y="43" width="784" height="16.5" fill="#283a4c"/><rect x="0" y="61" width="1056" height="16.5" fill="#212a28"/><rect x="272" y="61" width="784" height="16.5" fill="#2a3230"/><rect x="33.18" y="23" width="1" height="73" fill="#151515" fill-opacity="0.9"/><rect x="72.9" y="23" width="1" height="73" fill="#151515" fill-opacity="0.45"/><rect x="112.62" y="23" width="1" height="73" fill="#151515" fill-opacity="0.9"/><rect x="152.34" y="23" width="1" height="73" fill="#151515" fill-opacity="0.45"/><rect x="192.06" y="23" width="1" height="73" fill="#151515" fill-opacity="0.9"/><rect x="231.78" y="23" width="1" height="73" fill="#151515" fill-opacity="0.45"/><rect x="271.5" y="23" width="1" height="73" fill="#151515" fill-opacity="0.9"/><rect x="311.22" y="23" width="1" height="73" fill="#151515" fill-opacity="0.45"/><rect x="350.94" y="23" width="1" height="73" fill="#151515" fill-opacity="0.9"/><rect x="390.66" y="23" width="1" height="73" fill="#151515" fill-opacity="0.45"/><rect x="430.38" y="23" width="1" height="73" fill="#151515" fill-opacity="0.9"/><rect x="470.1" y="23" width="1" height="73" fill="#151515" fill-opacity="0.45"/><rect x="509.82" y="23" width="1" height="73" fill="#151515" fill-opacity="0.9"/><rect x="549.54" y="23" width="1" height="73" fill="#151515" fill-opacity="0.45"/><rect x="589.26" y="23" width="1" height="73" fill="#151515" fill-opacity="0.9"/><rect x="628.98" y="23" width="1" height="73" fill="#151515" fill-opacity="0.45"/><rect x="668.7" y="23" width="1" height="73" fill="#151515" fill-opacity="0.9"/><rect x="708.42" y="23" width="1" height="73" fill="#151515" fill-opacity="0.45"/><rect x="748.14" y="23" width="1" height="73" fill="#151515" fill-opacity="0.9"/><rect x="787.86" y="23" width="1" height="73" fill="#151515" fill-opacity="0.45"/><rect x="827.58" y="23" width="1" height="73" fill="#151515" fill-opacity="0.9"/><rect x="867.3" y="23" width="1" height="73" fill="#151515" fill-opacity="0.45"/><rect x="907.02" y="23" width="1" height="73" fill="#151515" fill-opacity="0.9"/><rect x="946.74" y="23" width="1" height="73" fill="#151515" fill-opacity="0.45"/><rect x="986.46" y="23" width="1" height="73" fill="#151515" fill-opacity="0.9"/><rect x="1026.18" y="23" width="1" height="73" fill="#151515" fill-opacity="0.45"/><rect x="0" y="0" width="1056" height="23" fill="#1b1b1b"/></svg>
<div style="left:207.65px;top:857.5px;height:16px;line-height:16px;font-size:12px;color:#c8c8c8;white-space:nowrap;width:40px;text-align:center;">-15</div>
<div style="left:287.1px;top:857.5px;height:16px;line-height:16px;font-size:12px;color:#c8c8c8;white-space:nowrap;width:40px;text-align:center;">-10</div>
<div style="left:366.55px;top:857.5px;height:16px;line-height:16px;font-size:12px;color:#c8c8c8;white-space:nowrap;width:40px;text-align:center;">-5</div>
<div style="left:525.45px;top:857.5px;height:16px;line-height:16px;font-size:12px;color:#c8c8c8;white-space:nowrap;width:40px;text-align:center;">5</div>
<div style="left:604.9px;top:857.5px;height:16px;line-height:16px;font-size:12px;color:#c8c8c8;white-space:nowrap;width:40px;text-align:center;">10</div>
<div style="left:684.35px;top:857.5px;height:16px;line-height:16px;font-size:12px;color:#c8c8c8;white-space:nowrap;width:40px;text-align:center;">15</div>
<div style="left:763.8px;top:857.5px;height:16px;line-height:16px;font-size:12px;color:#c8c8c8;white-space:nowrap;width:40px;text-align:center;">20</div>
<div style="left:843.25px;top:857.5px;height:16px;line-height:16px;font-size:12px;color:#c8c8c8;white-space:nowrap;width:40px;text-align:center;">25</div>
<div style="left:922.7px;top:857.5px;height:16px;line-height:16px;font-size:12px;color:#c8c8c8;white-space:nowrap;width:40px;text-align:center;">30</div>
<div style="left:1002.15px;top:857.5px;height:16px;line-height:16px;font-size:12px;color:#c8c8c8;white-space:nowrap;width:40px;text-align:center;">35</div>
<div style="left:1081.6px;top:857.5px;height:16px;line-height:16px;font-size:12px;color:#c8c8c8;white-space:nowrap;width:40px;text-align:center;">40</div>
<div style="left:1161.05px;top:857.5px;height:16px;line-height:16px;font-size:12px;color:#c8c8c8;white-space:nowrap;width:40px;text-align:center;">45</div>
<div style="left:204px;top:939.5px;width:177.5px;height:7.5px;background:#4c4c4c;border-radius:4px;"></div>
<svg style="left:205px;top:940.2px;" width="6" height="6" viewBox="0 0 6 6"><circle cx="3" cy="3" r="2.6" fill="#2a2a2a" stroke="#6a6a6a" stroke-width="0.8"/></svg>
<svg style="left:374.5px;top:940.2px;" width="6" height="6" viewBox="0 0 6 6"><circle cx="3" cy="3" r="2.6" fill="#2a2a2a" stroke="#6a6a6a" stroke-width="0.8"/></svg>
<div style="left:1243.5px;top:878px;width:2.5px;height:52px;background:#3c3c3c;border-radius:1.5px;"></div>
<div style="left:464.9px;top:872px;width:2.2px;height:77px;background:#4772b3;"></div>
<div style="left:453.5px;top:856px;width:24.5px;height:17px;background:#4772b3;border-radius:4.5px;"></div>
<div style="left:453.5px;top:856.5px;height:16px;line-height:16px;font-size:12px;color:#ffffff;white-space:nowrap;width:24.5px;text-align:center;">0</div>
<svg style="left:461px;top:880px;" width="10" height="10" viewBox="0 0 10 10"><circle cx="5" cy="5" r="3.5" fill="#cfcfcf" stroke="#0c0c0c" stroke-width="1.3"/></svg>
<svg style="left:461px;top:898.1px;" width="10" height="10" viewBox="0 0 10 10"><circle cx="5" cy="5" r="3.5" fill="#cfcfcf" stroke="#0c0c0c" stroke-width="1.3"/></svg>
<svg style="left:461px;top:916px;" width="10" height="10" viewBox="0 0 10 10"><circle cx="5" cy="5" r="3.5" fill="#cfcfcf" stroke="#0c0c0c" stroke-width="1.3"/></svg>
<div style="left:464.9px;top:878px;width:2.2px;height:52px;background:#4772b3;"></div>
<div style="left:1250px;top:853px;width:218.5px;height:96px;background:#303030;"></div>
<div style="left:1258px;top:855px;width:204.5px;height:94px;background:#3d3d3d;border-radius:5px 5px 0 0;"></div>
<svg style="left:1266px;top:863.5px;" width="10" height="10" viewBox="0 0 10 10"><path d="M1.4 3.5 L5 7.1 L8.6 3.5" fill="none" stroke="#d0d0d0" stroke-width="1.3" stroke-linecap="round" stroke-linejoin="round"/></svg>
<div style="left:1280px;top:860px;height:16px;line-height:16px;font-size:12px;color:#ffffff;white-space:nowrap;">Action</div>
<svg style="left:1444.5px;top:866px;" width="8" height="3" viewBox="0 0 8 3"><rect x="0" y="0" width="1" height="1" fill="#777"/><rect x="0" y="2" width="1" height="1" fill="#777"/><rect x="2" y="0" width="1" height="1" fill="#777"/><rect x="2" y="2" width="1" height="1" fill="#777"/><rect x="4" y="0" width="1" height="1" fill="#777"/><rect x="4" y="2" width="1" height="1" fill="#777"/><rect x="6" y="0" width="1" height="1" fill="#777"/><rect x="6" y="2" width="1" height="1" fill="#777"/></svg>
<svg style="left:1267.5px;top:889px;" width="17" height="17" viewBox="0 0 16 16"><path d="M0.4 4 L2.7 1.7 L5 4 L2.7 6.3 Z M11 4 L13.3 1.7 L15.6 4 L13.3 6.3 Z" fill="#e6e6e6" /><path d="M4.6 2 H11.4 L10 4 L11.4 6 H4.6 L6 4 Z" fill="#e6e6e6" opacity="0.55"/><path d="M8 8.4 L11 11.4 L8 14.4 L5 11.4 Z" fill="none" stroke="#e6e6e6" stroke-width="1.1" stroke-linecap="round" stroke-linejoin="round" /></svg>
<div style="left:1292px;top:890px;height:16px;line-height:16px;font-size:12px;color:#e0e0e0;white-space:nowrap;">StartingPose_Avatar</div>
<div style="left:1267px;top:917px;width:12.5px;height:12.5px;background:#545454;border-radius:2.5px;"></div>
<div style="left:1283px;top:915px;height:16px;line-height:16px;font-size:12px;color:#e6e6e6;white-space:nowrap;">Manual Frame Range</div>
<div style="left:1267px;top:939px;width:92px;height:10px;background:#484848;border-radius:4px 0 0 0;"></div>
<div style="left:1360px;top:939px;width:93px;height:10px;background:#484848;border-radius:0 4px 0 0;"></div>
<div style="left:1267px;top:939px;width:186px;height:10px;overflow:hidden;"><div style="left:15px;top:1.5px;line-height:16px;font-size:12px;color:#8a8a8a;white-space:nowrap;">Start</div><div style="left:0;top:1.5px;width:79px;text-align:right;line-height:16px;font-size:12px;color:#8a8a8a;">0.000</div><div style="left:108px;top:1.5px;line-height:16px;font-size:12px;color:#8a8a8a;">End</div><div style="left:93px;top:1.5px;width:79.5px;text-align:right;line-height:16px;font-size:12px;color:#8a8a8a;">0.000</div></div>
<div style="left:1464px;top:856px;width:2.5px;height:27px;background:#505050;border-radius:1.5px;"></div>
<div style="left:0px;top:953px;width:1468.5px;height:24px;background:#303030;border-radius:5px 5px 0 0;"></div>
<div style="left:3px;top:956px;width:30.5px;height:18.5px;background:#282828;border-radius:4px;border:1px solid #3c3c3c;"></div>
<svg style="left:5.5px;top:957.5px;" width="15" height="15" viewBox="0 0 16 16"><circle cx="8" cy="8" r="6.8" fill="#f0f0f0"/><path d="M9.6 4.2 L6.6 8 L9.6 11.8" fill="none" stroke="#282828" stroke-width="1.7" stroke-linecap="round" stroke-linejoin="round" /></svg>
<svg style="left:22px;top:961px;" width="10" height="10" viewBox="0 0 10 10"><path d="M1.8 3.7 L5 6.9 L8.2 3.7" fill="none" stroke="#d0d0d0" stroke-width="1.3" stroke-linecap="round" stroke-linejoin="round"/></svg>
<div style="left:40px;top:956px;width:70px;height:18.5px;background:#282828;border-radius:4px 0 0 4px;border:1px solid #3c3c3c;"></div>
<div style="left:47px;top:957.3px;height:16px;line-height:16px;font-size:12px;color:#e6e6e6;white-space:nowrap;">Playback</div>
<svg style="left:98.5px;top:961px;" width="10" height="10" viewBox="0 0 10 10"><path d="M1.8 3.7 L5 6.9 L8.2 3.7" fill="none" stroke="#d0d0d0" stroke-width="1.3" stroke-linecap="round" stroke-linejoin="round"/></svg>
<div style="left:110.5px;top:956px;width:61px;height:18.5px;background:#282828;border-radius:0 4px 4px 0;border:1px solid #3c3c3c;"></div>
<div style="left:118px;top:957.3px;height:16px;line-height:16px;font-size:12px;color:#e6e6e6;white-space:nowrap;">Keying</div>
<svg style="left:160px;top:961px;" width="10" height="10" viewBox="0 0 10 10"><path d="M1.8 3.7 L5 6.9 L8.2 3.7" fill="none" stroke="#d0d0d0" stroke-width="1.3" stroke-linecap="round" stroke-linejoin="round"/></svg>
<div style="left:181px;top:957.3px;height:16px;line-height:16px;font-size:12px;color:#dcdcdc;white-space:nowrap;">View</div>
<div style="left:222px;top:957.3px;height:16px;line-height:16px;font-size:12px;color:#dcdcdc;white-space:nowrap;">Marker</div>
<div style="left:640px;top:956px;width:18.5px;height:18.5px;background:#4772b3;border-radius:4px 0 0 4px;"></div>
<svg style="left:642.5px;top:958.5px;" width="13.5" height="13.5" viewBox="0 0 13.5 13.5"><circle cx="6.75" cy="6.75" r="5.6" fill="#e83848" stroke="#f4c0c4" stroke-width="1"/></svg>
<div style="left:659px;top:956px;width:19.5px;height:18.5px;background:#282828;border-radius:0 4px 4px 0;border:1px solid #3c3c3c;"></div>
<svg style="left:663.5px;top:961px;" width="10" height="10" viewBox="0 0 10 10"><path d="M1.8 3.7 L5 6.9 L8.2 3.7" fill="none" stroke="#d0d0d0" stroke-width="1.3" stroke-linecap="round" stroke-linejoin="round"/></svg>
<div style="left:684.5px;top:956px;width:119.5px;height:18.5px;background:#545454;border-radius:4px;"></div>
<div style="left:703.9px;top:956px;width:1px;height:18.5px;background:#444444;"></div>
<div style="left:723.8px;top:956px;width:1px;height:18.5px;background:#444444;"></div>
<div style="left:743.7px;top:956px;width:1px;height:18.5px;background:#444444;"></div>
<div style="left:763.6px;top:956px;width:1px;height:18.5px;background:#444444;"></div>
<div style="left:783.5px;top:956px;width:1px;height:18.5px;background:#444444;"></div>
<svg style="left:687px;top:958px;" width="15" height="15" viewBox="0 0 15 15"><path d="M2.5 2.5 V12.5" stroke="#ffffff" stroke-width="1.8"/><path d="M12.5 2.5 V12.5 L4.5 7.5 Z" fill="#ffffff"/></svg>
<svg style="left:707px;top:958px;" width="15" height="15" viewBox="0 0 15 15"><path d="M4 3.5 L8 7.5 L4 11.5 L0 7.5 Z" fill="#ffffff"/><path d="M14.5 2.5 V12.5 L7.5 7.5 Z" fill="#ffffff"/></svg>
<svg style="left:727px;top:958px;" width="15" height="15" viewBox="0 0 15 15"><path d="M12 2 V13 L3 7.5 Z" fill="#ffffff"/></svg>
<svg style="left:746.5px;top:958px;" width="15" height="15" viewBox="0 0 15 15"><path d="M3.5 2 V13 L12.5 7.5 Z" fill="#ffffff"/></svg>
<svg style="left:766.5px;top:958px;" width="15" height="15" viewBox="0 0 15 15"><path d="M11 3.5 L15 7.5 L11 11.5 L7 7.5 Z" fill="#ffffff"/><path d="M0.5 2.5 V12.5 L7.5 7.5 Z" fill="#ffffff"/></svg>
<svg style="left:786.5px;top:958px;" width="15" height="15" viewBox="0 0 15 15"><path d="M12.5 2.5 V12.5" stroke="#ffffff" stroke-width="1.8"/><path d="M2.5 2.5 V12.5 L10.5 7.5 Z" fill="#ffffff"/></svg>
<div style="left:1188px;top:956px;width:73.5px;height:18.5px;background:#545454;border-radius:4px;"></div>
<div style="left:1188px;top:957.3px;height:16px;line-height:16px;font-size:12px;color:#e6e6e6;white-space:nowrap;width:73.5px;text-align:center;">0</div>
<div style="left:1268px;top:956px;width:18.5px;height:18.5px;background:#545454;border-radius:4px 0 0 4px;"></div>
<svg style="left:1270px;top:957.5px;" width="15" height="15" viewBox="0 0 16 16"><circle cx="8" cy="9" r="5.5" fill="none" stroke="#e6e6e6" stroke-width="1.2"/><path d="M8 5.5 V9 H11 M6.5 1.5 H9.5 M8 1.5 V3.5 M12.5 3.5 L13.8 4.8" fill="none" stroke="#e6e6e6" stroke-width="1.1" stroke-linecap="round" stroke-linejoin="round" /></svg>
<div style="left:1287.5px;top:956px;width:88px;height:18.5px;background:#545454;"></div>
<div style="left:1302px;top:957.3px;height:16px;line-height:16px;font-size:12px;color:#e6e6e6;white-space:nowrap;">Start</div>
<div style="left:1287.5px;top:957.3px;height:16px;line-height:16px;font-size:12px;color:#e6e6e6;white-space:nowrap;width:77px;text-align:right;">0</div>
<div style="left:1376.5px;top:956px;width:85px;height:18.5px;background:#545454;border-radius:0 4px 4px 0;"></div>
<div style="left:1391px;top:957.3px;height:16px;line-height:16px;font-size:12px;color:#e6e6e6;white-space:nowrap;">End</div>
<div style="left:1376.5px;top:957.3px;height:16px;line-height:16px;font-size:12px;color:#e6e6e6;white-space:nowrap;width:71px;text-align:right;">299</div>
<svg style="left:502px;top:843px;" width="16" height="24" viewBox="0 0 16 24"><path d="M1.5 1.5 V18.5 L5.6 14.8 L8.6 21.6 L11.4 20.4 L8.4 13.8 L13.8 13.6 Z" fill="#ffffff" stroke="#000000" stroke-width="1.1" stroke-linejoin="round"/></svg>
<div style="left:645px;top:16px;width:4px;height:617px;background:#181818;"></div>
<div style="left:0px;top:633px;width:1472px;height:3px;background:#181818;"></div>
<div style="left:0px;top:825px;width:1472px;height:4px;background:#181818;"></div>
<div style="left:0px;top:949px;width:1472px;height:4px;background:#181818;"></div>
<div style="left:0px;top:977px;width:1908px;height:3px;background:#181818;"></div>
<div style="left:1468.5px;top:16px;width:3.5px;height:964px;background:#181818;"></div>
</div></body></html>
